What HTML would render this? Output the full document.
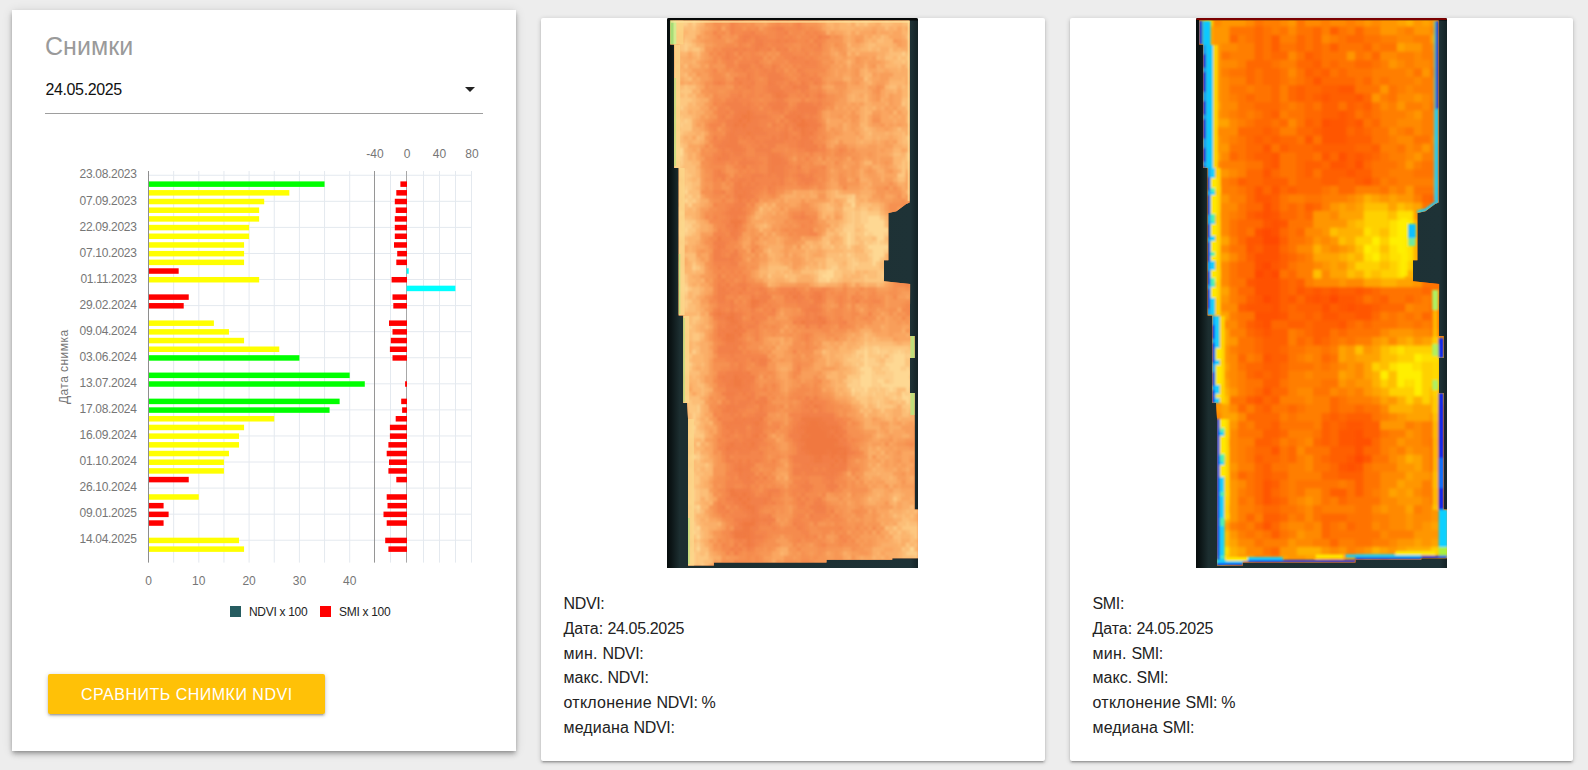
<!DOCTYPE html>
<html lang="ru"><head><meta charset="utf-8"><title>Снимки</title>
<style>
html,body{margin:0;padding:0;}
body{width:1588px;height:770px;overflow:hidden;background:#ededed;font-family:"Liberation Sans",sans-serif;color:#222;position:relative;}
.card{position:absolute;background:#fff;border-radius:2px;box-shadow:0 2px 2px 0 rgba(0,0,0,.14),0 3px 1px -2px rgba(0,0,0,.12),0 1px 5px 0 rgba(0,0,0,.2);}
#c1{left:12px;top:10px;width:504px;height:741px;border-radius:0;box-shadow:0 4px 5px 0 rgba(0,0,0,.14),0 1px 10px 0 rgba(0,0,0,.12),0 2px 4px -1px rgba(0,0,0,.3);}
#c2{left:541px;top:18px;width:504px;height:743px;}
#c3{left:1070px;top:18px;width:503px;height:743px;}
h4{position:absolute;left:33px;top:22px;margin:0;font-weight:normal;font-size:25px;line-height:28px;color:#9a9a9a;letter-spacing:0.05px;}
.sel{position:absolute;left:33px;top:63px;width:438px;height:40px;border-bottom:1px solid #9e9e9e;}
.sel span{position:absolute;left:0.5px;top:8px;font-size:16px;line-height:18px;color:#111;letter-spacing:-0.38px;}
.sel i{position:absolute;right:8px;top:14px;width:0;height:0;border-left:5px solid transparent;border-right:5px solid transparent;border-top:5px solid #222;}
.chart{position:absolute;left:-12px;top:120px;}
.btn{position:absolute;left:36px;top:664px;width:277px;height:40px;background:#ffc107;border-radius:2px;color:#fff;font-size:16px;line-height:42px;text-align:center;box-shadow:0 2px 2px 0 rgba(0,0,0,.14),0 3px 1px -2px rgba(0,0,0,.12),0 1px 5px 0 rgba(0,0,0,.2);letter-spacing:0.5px;text-indent:0.5px;}
.img{position:absolute;top:0;border-radius:2px 2px 0 0;overflow:hidden;height:550px;width:251.2px;}
.img svg{display:block;}
.info{position:absolute;left:22.5px;top:573px;font-size:16px;line-height:24px;color:#222;letter-spacing:-0.35px;}
.ln{position:absolute;left:0;white-space:nowrap;}
</style></head><body>
<div class="card" id="c1">
<h4>Снимки</h4>
<div class="sel"><span>24.05.2025</span><i></i></div>
<svg class="chart" width="516" height="500" viewBox="0 130 516 500" font-family="Liberation Sans, sans-serif">
<rect x="173.15" y="171" width="1" height="391.6" fill="#e4e9ef"/>
<rect x="198.30" y="171" width="1" height="391.6" fill="#e4e9ef"/>
<rect x="223.45" y="171" width="1" height="391.6" fill="#e4e9ef"/>
<rect x="248.60" y="171" width="1" height="391.6" fill="#e4e9ef"/>
<rect x="273.75" y="171" width="1" height="391.6" fill="#e4e9ef"/>
<rect x="298.90" y="171" width="1" height="391.6" fill="#e4e9ef"/>
<rect x="324.05" y="171" width="1" height="391.6" fill="#e4e9ef"/>
<rect x="349.20" y="171" width="1" height="391.6" fill="#e4e9ef"/>
<rect x="390" y="171" width="1" height="391.6" fill="#e4e9ef"/>
<rect x="423" y="171" width="1" height="391.6" fill="#e4e9ef"/>
<rect x="439" y="171" width="1" height="391.6" fill="#e4e9ef"/>
<rect x="455" y="171" width="1" height="391.6" fill="#e4e9ef"/>
<rect x="471" y="171" width="1" height="391.6" fill="#e4e9ef"/>
<rect x="148" y="174.75" width="324" height="1" fill="#e4e9ef"/>
<rect x="148" y="200.82" width="324" height="1" fill="#e4e9ef"/>
<rect x="148" y="226.89" width="324" height="1" fill="#e4e9ef"/>
<rect x="148" y="252.96" width="324" height="1" fill="#e4e9ef"/>
<rect x="148" y="279.03" width="324" height="1" fill="#e4e9ef"/>
<rect x="148" y="305.10" width="324" height="1" fill="#e4e9ef"/>
<rect x="148" y="331.17" width="324" height="1" fill="#e4e9ef"/>
<rect x="148" y="357.24" width="324" height="1" fill="#e4e9ef"/>
<rect x="148" y="383.31" width="324" height="1" fill="#e4e9ef"/>
<rect x="148" y="409.38" width="324" height="1" fill="#e4e9ef"/>
<rect x="148" y="435.45" width="324" height="1" fill="#e4e9ef"/>
<rect x="148" y="461.52" width="324" height="1" fill="#e4e9ef"/>
<rect x="148" y="487.59" width="324" height="1" fill="#e4e9ef"/>
<rect x="148" y="513.66" width="324" height="1" fill="#e4e9ef"/>
<rect x="148" y="539.73" width="324" height="1" fill="#e4e9ef"/>
<rect x="148" y="171" width="1" height="391.6" fill="#8e8e8e"/>
<rect x="374" y="171" width="1" height="391.6" fill="#969696"/>
<rect x="406" y="171" width="1" height="391.6" fill="#a8a8a8"/>
<rect x="149" y="181.39" width="175.55" height="5.5" fill="#00ff00"/>
<rect x="149" y="190.08" width="140.34" height="5.5" fill="#ffff00"/>
<rect x="149" y="198.77" width="115.19" height="5.5" fill="#ffff00"/>
<rect x="149" y="207.46" width="110.16" height="5.5" fill="#ffff00"/>
<rect x="149" y="216.15" width="110.16" height="5.5" fill="#ffff00"/>
<rect x="149" y="224.84" width="100.10" height="5.5" fill="#ffff00"/>
<rect x="149" y="233.53" width="100.10" height="5.5" fill="#ffff00"/>
<rect x="149" y="242.22" width="95.07" height="5.5" fill="#ffff00"/>
<rect x="149" y="250.91" width="95.07" height="5.5" fill="#ffff00"/>
<rect x="149" y="259.60" width="95.07" height="5.5" fill="#ffff00"/>
<rect x="149" y="268.29" width="29.68" height="5.5" fill="#ff0000"/>
<rect x="149" y="276.98" width="110.16" height="5.5" fill="#ffff00"/>
<rect x="149" y="294.36" width="39.74" height="5.5" fill="#ff0000"/>
<rect x="149" y="303.05" width="34.71" height="5.5" fill="#ff0000"/>
<rect x="149" y="320.43" width="64.89" height="5.5" fill="#ffff00"/>
<rect x="149" y="329.12" width="79.98" height="5.5" fill="#ffff00"/>
<rect x="149" y="337.81" width="95.07" height="5.5" fill="#ffff00"/>
<rect x="149" y="346.50" width="130.28" height="5.5" fill="#ffff00"/>
<rect x="149" y="355.19" width="150.40" height="5.5" fill="#00ff00"/>
<rect x="149" y="372.57" width="200.70" height="5.5" fill="#00ff00"/>
<rect x="149" y="381.26" width="215.79" height="5.5" fill="#00ff00"/>
<rect x="149" y="398.64" width="190.64" height="5.5" fill="#00ff00"/>
<rect x="149" y="407.33" width="180.58" height="5.5" fill="#00ff00"/>
<rect x="149" y="416.02" width="125.25" height="5.5" fill="#ffff00"/>
<rect x="149" y="424.71" width="95.07" height="5.5" fill="#ffff00"/>
<rect x="149" y="433.40" width="90.04" height="5.5" fill="#ffff00"/>
<rect x="149" y="442.09" width="90.04" height="5.5" fill="#ffff00"/>
<rect x="149" y="450.78" width="79.98" height="5.5" fill="#ffff00"/>
<rect x="149" y="459.47" width="74.95" height="5.5" fill="#ffff00"/>
<rect x="149" y="468.16" width="74.95" height="5.5" fill="#ffff00"/>
<rect x="149" y="476.85" width="39.74" height="5.5" fill="#ff0000"/>
<rect x="149" y="494.23" width="49.80" height="5.5" fill="#ffff00"/>
<rect x="149" y="502.92" width="14.59" height="5.5" fill="#ff0000"/>
<rect x="149" y="511.61" width="19.62" height="5.5" fill="#ff0000"/>
<rect x="149" y="520.30" width="14.59" height="5.5" fill="#ff0000"/>
<rect x="149" y="537.68" width="90.04" height="5.5" fill="#ffff00"/>
<rect x="149" y="546.37" width="95.07" height="5.5" fill="#ffff00"/>
<rect x="400.40" y="181.39" width="6.60" height="5.5" fill="#ff0000"/>
<rect x="396.30" y="190.08" width="10.70" height="5.5" fill="#ff0000"/>
<rect x="394.80" y="198.77" width="12.20" height="5.5" fill="#ff0000"/>
<rect x="395.70" y="207.46" width="11.30" height="5.5" fill="#ff0000"/>
<rect x="394.80" y="216.15" width="12.20" height="5.5" fill="#ff0000"/>
<rect x="394.80" y="224.84" width="12.20" height="5.5" fill="#ff0000"/>
<rect x="394.80" y="233.53" width="12.20" height="5.5" fill="#ff0000"/>
<rect x="394.00" y="242.22" width="13.00" height="5.5" fill="#ff0000"/>
<rect x="397.20" y="250.91" width="9.80" height="5.5" fill="#ff0000"/>
<rect x="396.30" y="259.60" width="10.70" height="5.5" fill="#ff0000"/>
<rect x="406.60" y="268.29" width="2.10" height="5.5" fill="#00ffff"/>
<rect x="391.60" y="276.98" width="15.40" height="5.5" fill="#ff0000"/>
<rect x="406.60" y="285.67" width="48.80" height="5.5" fill="#00ffff"/>
<rect x="392.50" y="294.36" width="14.50" height="5.5" fill="#ff0000"/>
<rect x="393.30" y="303.05" width="13.70" height="5.5" fill="#ff0000"/>
<rect x="389.00" y="320.43" width="18.00" height="5.5" fill="#ff0000"/>
<rect x="392.50" y="329.12" width="14.50" height="5.5" fill="#ff0000"/>
<rect x="390.80" y="337.81" width="16.20" height="5.5" fill="#ff0000"/>
<rect x="389.90" y="346.50" width="17.10" height="5.5" fill="#ff0000"/>
<rect x="392.50" y="355.19" width="14.50" height="5.5" fill="#ff0000"/>
<rect x="405.10" y="381.26" width="1.90" height="5.5" fill="#ff0000"/>
<rect x="401.20" y="398.64" width="5.80" height="5.5" fill="#ff0000"/>
<rect x="402.10" y="407.33" width="4.90" height="5.5" fill="#ff0000"/>
<rect x="395.70" y="416.02" width="11.30" height="5.5" fill="#ff0000"/>
<rect x="389.90" y="424.71" width="17.10" height="5.5" fill="#ff0000"/>
<rect x="389.90" y="433.40" width="17.10" height="5.5" fill="#ff0000"/>
<rect x="388.40" y="442.09" width="18.60" height="5.5" fill="#ff0000"/>
<rect x="386.70" y="450.78" width="20.30" height="5.5" fill="#ff0000"/>
<rect x="389.00" y="459.47" width="18.00" height="5.5" fill="#ff0000"/>
<rect x="388.40" y="468.16" width="18.60" height="5.5" fill="#ff0000"/>
<rect x="396.30" y="476.85" width="10.70" height="5.5" fill="#ff0000"/>
<rect x="386.70" y="494.23" width="20.30" height="5.5" fill="#ff0000"/>
<rect x="387.50" y="502.92" width="19.50" height="5.5" fill="#ff0000"/>
<rect x="383.50" y="511.61" width="23.50" height="5.5" fill="#ff0000"/>
<rect x="386.70" y="520.30" width="20.30" height="5.5" fill="#ff0000"/>
<rect x="385.20" y="537.68" width="21.80" height="5.5" fill="#ff0000"/>
<rect x="388.40" y="546.37" width="18.60" height="5.5" fill="#ff0000"/>
<text x="136.6" y="178.45" text-anchor="end" font-size="12" fill="#767676" letter-spacing="-0.3">23.08.2023</text>
<text x="136.6" y="204.52" text-anchor="end" font-size="12" fill="#767676" letter-spacing="-0.3">07.09.2023</text>
<text x="136.6" y="230.59" text-anchor="end" font-size="12" fill="#767676" letter-spacing="-0.3">22.09.2023</text>
<text x="136.6" y="256.66" text-anchor="end" font-size="12" fill="#767676" letter-spacing="-0.3">07.10.2023</text>
<text x="136.6" y="282.73" text-anchor="end" font-size="12" fill="#767676" letter-spacing="-0.3">01.11.2023</text>
<text x="136.6" y="308.80" text-anchor="end" font-size="12" fill="#767676" letter-spacing="-0.3">29.02.2024</text>
<text x="136.6" y="334.87" text-anchor="end" font-size="12" fill="#767676" letter-spacing="-0.3">09.04.2024</text>
<text x="136.6" y="360.94" text-anchor="end" font-size="12" fill="#767676" letter-spacing="-0.3">03.06.2024</text>
<text x="136.6" y="387.01" text-anchor="end" font-size="12" fill="#767676" letter-spacing="-0.3">13.07.2024</text>
<text x="136.6" y="413.08" text-anchor="end" font-size="12" fill="#767676" letter-spacing="-0.3">17.08.2024</text>
<text x="136.6" y="439.15" text-anchor="end" font-size="12" fill="#767676" letter-spacing="-0.3">16.09.2024</text>
<text x="136.6" y="465.22" text-anchor="end" font-size="12" fill="#767676" letter-spacing="-0.3">01.10.2024</text>
<text x="136.6" y="491.29" text-anchor="end" font-size="12" fill="#767676" letter-spacing="-0.3">26.10.2024</text>
<text x="136.6" y="517.36" text-anchor="end" font-size="12" fill="#767676" letter-spacing="-0.3">09.01.2025</text>
<text x="136.6" y="543.43" text-anchor="end" font-size="12" fill="#767676" letter-spacing="-0.3">14.04.2025</text>
<text x="148.5" y="585.3" text-anchor="middle" font-size="12" fill="#767676" class="cl">0</text>
<text x="198.8" y="585.3" text-anchor="middle" font-size="12" fill="#767676" class="cl">10</text>
<text x="249.1" y="585.3" text-anchor="middle" font-size="12" fill="#767676" class="cl">20</text>
<text x="299.4" y="585.3" text-anchor="middle" font-size="12" fill="#767676" class="cl">30</text>
<text x="349.7" y="585.3" text-anchor="middle" font-size="12" fill="#767676" class="cl">40</text>
<text x="374.9" y="158.3" text-anchor="middle" font-size="12" fill="#767676" class="cl">-40</text>
<text x="407.0" y="158.3" text-anchor="middle" font-size="12" fill="#767676" class="cl">0</text>
<text x="439.4" y="158.3" text-anchor="middle" font-size="12" fill="#767676" class="cl">40</text>
<text x="471.9" y="158.3" text-anchor="middle" font-size="12" fill="#767676" class="cl">80</text>
<text transform="translate(68,366.8) rotate(-90)" text-anchor="middle" font-size="12" fill="#767676" letter-spacing="0.45">Дата снимка</text>
<rect x="230" y="606" width="11" height="11" fill="#265c60"/>
<text x="249" y="616" font-size="12" fill="#232323" letter-spacing="-0.3">NDVI x 100</text>
<rect x="320" y="606" width="11" height="11" fill="#ff0000"/>
<text x="339" y="616" font-size="12" fill="#232323" letter-spacing="-0.3">SMI x 100</text>
</svg>
<div class="btn">СРАВНИТЬ СНИМКИ NDVI</div>
</div>
<div class="card" id="c2">
<div class="img" style="left:126.3px"><svg width="251.2" height="550" viewBox="0 0 252 550" preserveAspectRatio="none">
<defs><clipPath id="cpndvi"><polygon points="3.2,2.4 243.4,2.4 243.4,184.6 239.6,186.2 230.2,193.2 222.1,195 222.1,242.3 217.7,242.3 217.7,263.3 234.1,264.9 243.9,266.1 243.7,318 248.4,318 248.4,340 243.7,340 243.7,375 248.4,375 248.4,491.6 252,491.6 252,540.3 226,540.3 226,541.7 160,541.7 160,544.4 47,544.4 47,547.5 21.1,547.5 21.1,401 20.2,385 16.3,385 16.3,297.5 11.7,297.5 11.7,150 7.2,150 7.2,26.5 3.2,26.5"/></clipPath><filter id="blndvi" x="-5%" y="-5%" width="110%" height="110%"><feGaussianBlur stdDeviation="1.3"/></filter><filter id="bxndvi" x="-5%" y="-5%" width="110%" height="110%"><feGaussianBlur stdDeviation="0.9"/></filter><filter id="bendvi" x="-50%" y="-5%" width="200%" height="110%"><feGaussianBlur stdDeviation="0.7"/></filter><linearGradient id="bgndvi" x1="0" x2="1" y1="0" y2="0"><stop offset="0" stop-color="#060c0c"/><stop offset="0.016" stop-color="#0b1415"/><stop offset="0.05" stop-color="#1c2e30"/><stop offset="0.97" stop-color="#1e3236"/><stop offset="1" stop-color="#142225"/></linearGradient></defs>
<rect width="252" height="550" fill="url(#bgndvi)"/>
<rect width="252" height="2.5" fill="#050808"/>
<g clip-path="url(#cpndvi)">
<rect width="252" height="550" fill="#f68c4c"/>
<g filter="url(#blndvi)">
<path d="M75.6 98.7h4.2M71.4 102.9h4.2M134.4 102.9h4.2M130.2 107.1h8.4M84 283.5h4.2M63 300.3h4.2M58.8 317.1h4.2M142.8 405.3h8.4M138.6 409.5h16.8M163.8 409.5h4.2M138.6 413.7h21M168 413.7h4.2M142.8 417.9h16.8M163.8 417.9h4.2M138.6 422.1h33.6M138.6 426.3h29.4M138.6 430.5h37.8M142.8 434.7h16.8M163.8 434.7h8.4M176.4 434.7h4.2M151.2 438.9h4.2M163.8 438.9h4.2M75.6 476.7h4.2M71.4 480.9h4.2M75.6 485.1h4.2M79.8 489.3h4.2M75.6 506.1h12.6M75.6 518.7h4.2" stroke="#f07841" stroke-width="4.5" fill="none"/>
<path d="M109.2 77.7h4.2M79.8 94.5h4.2M79.8 98.7h4.2M130.2 98.7h4.2M79.8 102.9h4.2M126 102.9h4.2M67.2 107.1h4.2M75.6 107.1h4.2M138.6 107.1h4.2M134.4 111.3h4.2M79.8 115.5h4.2M134.4 115.5h4.2M142.8 115.5h4.2M71.4 178.5h4.2M63 203.7h12.6M67.2 207.9h4.2M50.4 220.5h4.2M126 279.3h4.2M151.2 279.3h4.2M88.2 283.5h4.2M84 287.7h4.2M50.4 296.1h4.2M63 296.1h4.2M58.8 300.3h4.2M151.2 300.3h4.2M63 304.5h8.4M134.4 304.5h4.2M155.4 304.5h4.2M71.4 308.7h4.2M67.2 312.9h4.2M63 317.1h4.2M71.4 317.1h4.2M58.8 321.3h8.4M67.2 359.1h4.2M67.2 363.3h8.4M67.2 367.5h8.4M147 388.5h4.2M92.4 401.1h4.2M134.4 401.1h21M88.2 405.3h4.2M138.6 405.3h4.2M151.2 405.3h8.4M134.4 409.5h4.2M155.4 409.5h8.4M168 409.5h4.2M159.6 413.7h4.2M88.2 417.9h4.2M134.4 417.9h8.4M159.6 417.9h4.2M172.2 417.9h4.2M134.4 422.1h4.2M63 426.3h4.2M84 426.3h4.2M168 426.3h4.2M58.8 430.5h4.2M134.4 430.5h4.2M176.4 430.5h4.2M138.6 434.7h4.2M159.6 434.7h4.2M172.2 434.7h4.2M147 438.9h4.2M172.2 438.9h8.4M147 443.1h8.4M168 443.1h4.2M176.4 443.1h4.2M163.8 447.3h4.2M71.4 451.5h4.2M63 472.5h4.2M63 476.7h8.4M79.8 480.9h4.2M84 489.3h4.2M84 493.5h4.2M84 501.9h4.2M75.6 510.3h8.4M67.2 514.5h16.8M67.2 518.7h8.4M79.8 518.7h4.2M79.8 522.9h4.2M79.8 527.1h4.2" stroke="#f07a43" stroke-width="4.5" fill="none"/>
<path d="M151.2 18.9h4.2M92.4 27.3h4.2M88.2 31.5h4.2M71.4 65.1h4.2M100.8 65.1h4.2M134.4 65.1h4.2M126 69.3h4.2M105 73.5h12.6M113.4 77.7h8.4M151.2 77.7h4.2M109.2 86.1h4.2M134.4 86.1h4.2M105 90.3h12.6M130.2 90.3h21M71.4 94.5h8.4M126 94.5h4.2M134.4 94.5h4.2M142.8 94.5h8.4M67.2 98.7h8.4M84 98.7h4.2M117.6 98.7h12.6M67.2 102.9h4.2M75.6 102.9h4.2M130.2 102.9h4.2M138.6 102.9h8.4M71.4 107.1h4.2M142.8 107.1h8.4M67.2 111.3h4.2M75.6 111.3h4.2M88.2 111.3h4.2M126 111.3h4.2M138.6 111.3h4.2M147 111.3h4.2M63 115.5h4.2M117.6 115.5h4.2M138.6 115.5h4.2M63 119.7h8.4M84 119.7h4.2M105 119.7h4.2M117.6 119.7h4.2M134.4 119.7h8.4M63 123.9h8.4M134.4 123.9h4.2M142.8 123.9h4.2M58.8 128.1h12.6M134.4 128.1h4.2M147 128.1h4.2M67.2 132.3h8.4M142.8 132.3h4.2M54.6 136.5h4.2M105 136.5h4.2M50.4 140.7h4.2M105 140.7h8.4M105 144.9h8.4M75.6 149.1h4.2M105 149.1h4.2M105 153.3h4.2M84 161.7h4.2M71.4 165.9h4.2M71.4 170.1h4.2M67.2 174.3h4.2M75.6 174.3h4.2M75.6 178.5h4.2M71.4 182.7h4.2M63 191.1h4.2M71.4 191.1h4.2M63 195.3h12.6M67.2 199.5h4.2M67.2 212.1h4.2M63 216.3h4.2M50.4 228.9h4.2M63 241.5h4.2M58.8 266.7h4.2M54.6 270.9h4.2M75.6 270.9h4.2M71.4 275.1h4.2M121.8 275.1h4.2M130.2 275.1h4.2M147 275.1h8.4M54.6 279.3h4.2M84 279.3h4.2M147 279.3h4.2M63 283.5h4.2M96.6 283.5h4.2M147 283.5h8.4M88.2 287.7h4.2M142.8 291.9h8.4M54.6 296.1h4.2M67.2 296.1h4.2M67.2 300.3h4.2M84 300.3h4.2M151.2 304.5h4.2M58.8 308.7h8.4M54.6 312.9h4.2M63 312.9h4.2M71.4 312.9h8.4M50.4 317.1h4.2M67.2 317.1h4.2M54.6 321.3h4.2M67.2 321.3h4.2M58.8 325.5h8.4M71.4 325.5h4.2M67.2 329.7h4.2M63 333.9h4.2M92.4 342.3h4.2M67.2 354.9h8.4M79.8 354.9h4.2M54.6 359.1h4.2M71.4 359.1h8.4M84 359.1h4.2M63 363.3h4.2M79.8 363.3h4.2M58.8 367.5h8.4M75.6 367.5h4.2M71.4 371.7h4.2M58.8 375.9h8.4M75.6 375.9h4.2M79.8 380.1h4.2M88.2 384.3h4.2M96.6 384.3h4.2M142.8 384.3h4.2M58.8 388.5h8.4M92.4 388.5h4.2M138.6 388.5h4.2M58.8 392.7h4.2M67.2 392.7h4.2M138.6 396.9h4.2M67.2 401.1h4.2M75.6 401.1h4.2M84 401.1h4.2M155.4 401.1h12.6M63 405.3h12.6M84 405.3h4.2M134.4 405.3h4.2M159.6 405.3h12.6M58.8 409.5h4.2M88.2 409.5h4.2M130.2 409.5h4.2M172.2 409.5h4.2M63 413.7h4.2M88.2 413.7h8.4M130.2 413.7h8.4M163.8 413.7h4.2M172.2 413.7h4.2M84 417.9h4.2M168 417.9h4.2M79.8 422.1h8.4M130.2 422.1h4.2M176.4 422.1h4.2M75.6 426.3h4.2M134.4 426.3h4.2M172.2 426.3h4.2M63 430.5h12.6M79.8 430.5h8.4M134.4 434.7h4.2M142.8 438.9h4.2M155.4 438.9h8.4M168 438.9h4.2M71.4 443.1h4.2M79.8 443.1h4.2M142.8 443.1h4.2M155.4 443.1h12.6M71.4 447.3h4.2M79.8 447.3h4.2M138.6 447.3h4.2M172.2 447.3h8.4M67.2 451.5h4.2M75.6 451.5h8.4M142.8 451.5h4.2M159.6 451.5h16.8M71.4 455.7h4.2M155.4 455.7h4.2M163.8 455.7h4.2M79.8 459.9h4.2M67.2 472.5h16.8M138.6 472.5h4.2M71.4 476.7h4.2M79.8 476.7h4.2M100.8 476.7h4.2M67.2 480.9h4.2M75.6 480.9h4.2M96.6 480.9h4.2M67.2 485.1h8.4M79.8 485.1h4.2M96.6 485.1h4.2M75.6 489.3h4.2M151.2 489.3h4.2M79.8 493.5h4.2M84 497.7h8.4M75.6 501.9h8.4M88.2 501.9h4.2M96.6 501.9h4.2M71.4 506.1h4.2M84 514.5h4.2M84 518.7h4.2M84 527.1h4.2M67.2 535.5h4.2M63 548.1h4.2" stroke="#f27e46" stroke-width="4.5" fill="none"/>
<path d="M109.2 10.5h8.4M84 14.7h4.2M117.6 14.7h4.2M75.6 18.9h8.4M88.2 18.9h4.2M75.6 23.1h4.2M88.2 23.1h8.4M109.2 23.1h4.2M117.6 23.1h4.2M147 23.1h4.2M88.2 27.3h4.2M151.2 27.3h4.2M67.2 31.5h4.2M75.6 31.5h4.2M100.8 31.5h4.2M109.2 31.5h4.2M117.6 31.5h4.2M58.8 35.7h4.2M71.4 35.7h4.2M58.8 39.9h4.2M126 39.9h4.2M88.2 44.1h4.2M138.6 44.1h4.2M71.4 48.3h12.6M92.4 48.3h4.2M105 48.3h4.2M75.6 52.5h4.2M96.6 52.5h4.2M105 52.5h4.2M130.2 52.5h4.2M79.8 56.7h4.2M100.8 56.7h12.6M134.4 56.7h4.2M67.2 60.9h4.2M79.8 60.9h4.2M100.8 60.9h16.8M142.8 60.9h4.2M50.4 65.1h4.2M84 65.1h4.2M105 65.1h4.2M121.8 65.1h4.2M147 65.1h4.2M79.8 69.3h4.2M100.8 69.3h12.6M130.2 69.3h12.6M100.8 73.5h4.2M134.4 73.5h4.2M71.4 77.7h4.2M105 77.7h4.2M138.6 77.7h4.2M67.2 81.9h4.2M109.2 81.9h8.4M58.8 86.1h16.8M79.8 86.1h4.2M100.8 86.1h8.4M113.4 86.1h8.4M130.2 86.1h4.2M138.6 86.1h8.4M151.2 86.1h4.2M63 90.3h21M58.8 94.5h4.2M67.2 94.5h4.2M84 94.5h4.2M113.4 94.5h4.2M121.8 94.5h4.2M130.2 94.5h4.2M138.6 94.5h4.2M54.6 98.7h4.2M88.2 98.7h12.6M134.4 98.7h4.2M142.8 98.7h4.2M58.8 102.9h8.4M84 102.9h8.4M113.4 102.9h4.2M121.8 102.9h4.2M147 102.9h4.2M58.8 107.1h8.4M79.8 107.1h12.6M105 107.1h4.2M117.6 107.1h4.2M126 107.1h4.2M151.2 107.1h4.2M63 111.3h4.2M71.4 111.3h4.2M79.8 111.3h8.4M92.4 111.3h4.2M117.6 111.3h4.2M130.2 111.3h4.2M142.8 111.3h4.2M58.8 115.5h4.2M67.2 115.5h12.6M84 115.5h16.8M113.4 115.5h4.2M46.2 119.7h4.2M58.8 119.7h4.2M75.6 119.7h4.2M113.4 119.7h4.2M126 119.7h4.2M54.6 123.9h8.4M88.2 123.9h4.2M96.6 123.9h21M130.2 123.9h4.2M138.6 123.9h4.2M50.4 128.1h8.4M71.4 128.1h4.2M92.4 128.1h4.2M100.8 128.1h8.4M130.2 128.1h4.2M138.6 128.1h8.4M54.6 132.3h4.2M63 132.3h4.2M75.6 132.3h4.2M88.2 132.3h16.8M138.6 132.3h4.2M147 132.3h4.2M58.8 136.5h4.2M67.2 136.5h8.4M100.8 136.5h4.2M109.2 136.5h4.2M54.6 140.7h8.4M75.6 140.7h4.2M100.8 140.7h4.2M113.4 140.7h4.2M71.4 144.9h16.8M100.8 144.9h4.2M113.4 144.9h8.4M100.8 149.1h4.2M109.2 149.1h8.4M130.2 149.1h4.2M50.4 153.3h4.2M100.8 153.3h4.2M109.2 153.3h8.4M50.4 157.5h8.4M84 157.5h12.6M100.8 157.5h4.2M109.2 157.5h8.4M130.2 157.5h8.4M142.8 157.5h4.2M54.6 161.7h4.2M71.4 161.7h8.4M113.4 161.7h4.2M134.4 161.7h12.6M67.2 165.9h4.2M79.8 165.9h4.2M88.2 165.9h4.2M105 165.9h4.2M113.4 165.9h4.2M138.6 165.9h4.2M67.2 170.1h4.2M75.6 170.1h12.6M100.8 170.1h4.2M54.6 174.3h4.2M71.4 174.3h4.2M79.8 174.3h4.2M67.2 178.5h4.2M79.8 178.5h8.4M79.8 182.7h4.2M67.2 186.9h12.6M67.2 191.1h4.2M58.8 195.3h4.2M75.6 195.3h4.2M63 199.5h4.2M134.4 199.5h4.2M58.8 207.9h8.4M71.4 207.9h4.2M63 212.1h4.2M67.2 216.3h4.2M67.2 220.5h4.2M46.2 224.7h12.6M54.6 228.9h4.2M46.2 233.1h8.4M67.2 233.1h4.2M46.2 237.3h8.4M63 237.3h8.4M46.2 241.5h16.8M63 245.7h8.4M50.4 249.9h4.2M243.6 249.9h4.2M50.4 258.3h4.2M54.6 262.5h4.2M50.4 266.7h4.2M71.4 266.7h8.4M50.4 270.9h4.2M63 270.9h4.2M92.4 270.9h4.2M126 270.9h4.2M50.4 275.1h12.6M96.6 275.1h4.2M126 275.1h4.2M50.4 279.3h4.2M92.4 279.3h12.6M117.6 279.3h4.2M130.2 279.3h8.4M142.8 279.3h4.2M50.4 283.5h8.4M92.4 283.5h4.2M130.2 283.5h4.2M189 283.5h4.2M63 287.7h4.2M142.8 287.7h8.4M50.4 291.9h4.2M63 291.9h4.2M84 291.9h4.2M105 291.9h4.2M138.6 291.9h4.2M151.2 291.9h4.2M46.2 296.1h4.2M58.8 296.1h4.2M71.4 296.1h4.2M138.6 296.1h4.2M147 296.1h4.2M50.4 300.3h8.4M71.4 300.3h4.2M138.6 300.3h4.2M147 300.3h4.2M155.4 300.3h4.2M58.8 304.5h4.2M71.4 304.5h4.2M88.2 304.5h4.2M126 304.5h4.2M138.6 304.5h12.6M176.4 304.5h4.2M50.4 308.7h4.2M67.2 308.7h4.2M79.8 308.7h8.4M138.6 308.7h4.2M151.2 308.7h4.2M50.4 312.9h4.2M58.8 312.9h4.2M54.6 317.1h4.2M67.2 325.5h4.2M50.4 329.7h16.8M50.4 333.9h12.6M67.2 333.9h8.4M63 338.1h4.2M67.2 342.3h4.2M84 342.3h4.2M96.6 342.3h4.2M71.4 346.5h4.2M92.4 346.5h8.4M71.4 350.7h4.2M58.8 354.9h8.4M75.6 354.9h4.2M50.4 359.1h4.2M58.8 359.1h8.4M79.8 359.1h4.2M54.6 363.3h8.4M75.6 363.3h4.2M84 363.3h4.2M79.8 367.5h4.2M58.8 371.7h12.6M75.6 371.7h8.4M54.6 375.9h4.2M67.2 375.9h4.2M84 375.9h4.2M58.8 380.1h8.4M84 380.1h4.2M92.4 380.1h8.4M138.6 380.1h4.2M147 380.1h4.2M63 384.3h4.2M71.4 384.3h12.6M92.4 384.3h4.2M67.2 388.5h12.6M151.2 388.5h4.2M54.6 392.7h4.2M63 392.7h4.2M92.4 392.7h4.2M142.8 392.7h4.2M151.2 392.7h4.2M63 396.9h4.2M71.4 396.9h4.2M88.2 396.9h12.6M134.4 396.9h4.2M142.8 396.9h25.2M50.4 401.1h4.2M71.4 401.1h4.2M79.8 401.1h4.2M88.2 401.1h4.2M54.6 405.3h8.4M75.6 405.3h8.4M92.4 405.3h4.2M130.2 405.3h4.2M63 409.5h16.8M84 409.5h4.2M92.4 409.5h4.2M126 409.5h4.2M71.4 413.7h8.4M84 413.7h4.2M126 413.7h4.2M176.4 413.7h4.2M58.8 417.9h4.2M75.6 417.9h4.2M96.6 417.9h4.2M121.8 417.9h12.6M67.2 422.1h4.2M75.6 422.1h4.2M88.2 422.1h8.4M126 422.1h4.2M172.2 422.1h4.2M58.8 426.3h4.2M67.2 426.3h8.4M79.8 426.3h4.2M88.2 426.3h4.2M130.2 426.3h4.2M176.4 426.3h4.2M75.6 430.5h4.2M88.2 430.5h4.2M130.2 430.5h4.2M180.6 430.5h4.2M58.8 434.7h8.4M71.4 434.7h12.6M92.4 434.7h4.2M130.2 434.7h4.2M180.6 434.7h8.4M58.8 438.9h4.2M126 438.9h16.8M58.8 443.1h8.4M88.2 443.1h4.2M126 443.1h16.8M172.2 443.1h4.2M67.2 447.3h4.2M75.6 447.3h4.2M84 447.3h4.2M134.4 447.3h4.2M142.8 447.3h21M168 447.3h4.2M0 451.5h8.4M126 451.5h16.8M151.2 451.5h4.2M176.4 451.5h4.2M0 455.7h4.2M75.6 455.7h12.6M126 455.7h8.4M138.6 455.7h16.8M159.6 455.7h4.2M168 455.7h4.2M71.4 459.9h8.4M88.2 459.9h4.2M96.6 459.9h4.2M159.6 459.9h8.4M75.6 464.1h12.6M138.6 464.1h4.2M163.8 464.1h4.2M79.8 468.3h4.2M134.4 468.3h12.6M159.6 468.3h12.6M58.8 472.5h4.2M100.8 472.5h12.6M163.8 472.5h4.2M84 476.7h4.2M134.4 476.7h4.2M58.8 480.9h8.4M84 480.9h12.6M100.8 480.9h4.2M130.2 480.9h4.2M138.6 480.9h4.2M151.2 480.9h4.2M84 485.1h12.6M105 485.1h4.2M134.4 485.1h4.2M147 485.1h8.4M54.6 489.3h4.2M71.4 489.3h4.2M88.2 489.3h4.2M142.8 489.3h8.4M155.4 489.3h4.2M58.8 493.5h4.2M75.6 493.5h4.2M88.2 493.5h4.2M147 493.5h12.6M163.8 493.5h4.2M79.8 497.7h4.2M100.8 497.7h4.2M142.8 497.7h4.2M67.2 501.9h8.4M92.4 501.9h4.2M100.8 501.9h8.4M88.2 506.1h4.2M100.8 506.1h4.2M126 506.1h4.2M67.2 510.3h8.4M84 510.3h8.4M130.2 510.3h4.2M63 514.5h4.2M88.2 518.7h8.4M71.4 522.9h4.2M84 522.9h4.2M67.2 527.1h4.2M75.6 527.1h4.2M63 531.3h4.2M71.4 531.3h4.2M79.8 531.3h4.2M67.2 548.1h8.4M138.6 548.1h4.2" stroke="#f28048" stroke-width="4.5" fill="none"/>
<path d="M67.2 2.1h4.2M63 6.3h4.2M130.2 6.3h4.2M63 10.5h4.2M105 10.5h4.2M130.2 10.5h4.2M46.2 14.7h4.2M63 14.7h4.2M75.6 14.7h8.4M109.2 14.7h8.4M138.6 14.7h4.2M147 14.7h4.2M50.4 18.9h4.2M71.4 18.9h4.2M84 18.9h4.2M92.4 18.9h8.4M109.2 18.9h8.4M121.8 18.9h4.2M142.8 18.9h4.2M155.4 18.9h8.4M71.4 23.1h4.2M79.8 23.1h4.2M96.6 23.1h12.6M113.4 23.1h4.2M121.8 23.1h8.4M138.6 23.1h4.2M151.2 23.1h4.2M71.4 27.3h4.2M84 27.3h4.2M96.6 27.3h4.2M105 27.3h12.6M142.8 27.3h4.2M54.6 31.5h12.6M71.4 31.5h4.2M79.8 31.5h8.4M92.4 31.5h8.4M113.4 31.5h4.2M134.4 31.5h4.2M147 31.5h8.4M50.4 35.7h4.2M63 35.7h4.2M84 35.7h4.2M113.4 35.7h12.6M138.6 35.7h4.2M54.6 39.9h4.2M63 39.9h8.4M75.6 39.9h4.2M84 39.9h12.6M117.6 39.9h8.4M130.2 39.9h8.4M142.8 39.9h4.2M58.8 44.1h8.4M71.4 44.1h16.8M121.8 44.1h16.8M142.8 44.1h8.4M58.8 48.3h8.4M88.2 48.3h4.2M109.2 48.3h4.2M126 48.3h4.2M134.4 48.3h16.8M46.2 52.5h4.2M67.2 52.5h8.4M79.8 52.5h8.4M92.4 52.5h4.2M100.8 52.5h4.2M113.4 52.5h4.2M134.4 52.5h4.2M84 56.7h4.2M92.4 56.7h8.4M113.4 56.7h4.2M138.6 56.7h4.2M147 56.7h4.2M71.4 60.9h8.4M84 60.9h4.2M117.6 60.9h4.2M130.2 60.9h12.6M147 60.9h8.4M46.2 65.1h4.2M54.6 65.1h4.2M67.2 65.1h4.2M75.6 65.1h8.4M109.2 65.1h8.4M126 65.1h4.2M138.6 65.1h4.2M151.2 65.1h4.2M67.2 69.3h4.2M75.6 69.3h4.2M84 69.3h4.2M96.6 69.3h4.2M117.6 69.3h8.4M71.4 73.5h4.2M84 73.5h4.2M96.6 73.5h4.2M117.6 73.5h12.6M138.6 73.5h4.2M151.2 73.5h4.2M63 77.7h8.4M79.8 77.7h8.4M92.4 77.7h4.2M130.2 77.7h4.2M147 77.7h4.2M155.4 77.7h4.2M58.8 81.9h8.4M71.4 81.9h12.6M105 81.9h4.2M134.4 81.9h4.2M151.2 81.9h4.2M46.2 86.1h4.2M54.6 86.1h4.2M75.6 86.1h4.2M84 86.1h4.2M92.4 86.1h4.2M147 86.1h4.2M50.4 90.3h8.4M84 90.3h8.4M96.6 90.3h8.4M117.6 90.3h4.2M126 90.3h4.2M151.2 90.3h4.2M50.4 94.5h8.4M88.2 94.5h12.6M105 94.5h8.4M50.4 98.7h4.2M63 98.7h4.2M100.8 98.7h4.2M138.6 98.7h4.2M147 98.7h4.2M50.4 102.9h8.4M92.4 102.9h16.8M42 107.1h12.6M92.4 107.1h8.4M109.2 107.1h4.2M121.8 107.1h4.2M46.2 111.3h4.2M58.8 111.3h4.2M96.6 111.3h12.6M113.4 111.3h4.2M100.8 115.5h12.6M121.8 115.5h4.2M130.2 115.5h4.2M147 115.5h4.2M54.6 119.7h4.2M71.4 119.7h4.2M79.8 119.7h4.2M88.2 119.7h16.8M109.2 119.7h4.2M121.8 119.7h4.2M130.2 119.7h4.2M142.8 119.7h8.4M46.2 123.9h8.4M79.8 123.9h8.4M92.4 123.9h4.2M117.6 123.9h12.6M46.2 128.1h4.2M75.6 128.1h4.2M84 128.1h8.4M96.6 128.1h4.2M121.8 128.1h8.4M155.4 128.1h4.2M50.4 132.3h4.2M58.8 132.3h4.2M130.2 132.3h8.4M151.2 132.3h8.4M172.2 132.3h4.2M46.2 136.5h8.4M63 136.5h4.2M75.6 136.5h4.2M88.2 136.5h12.6M113.4 136.5h4.2M142.8 136.5h4.2M46.2 140.7h4.2M63 140.7h12.6M79.8 140.7h12.6M117.6 140.7h4.2M138.6 140.7h4.2M46.2 144.9h12.6M63 144.9h4.2M88.2 144.9h8.4M67.2 149.1h8.4M84 149.1h8.4M117.6 149.1h8.4M155.4 149.1h4.2M46.2 153.3h4.2M71.4 153.3h4.2M79.8 153.3h4.2M88.2 153.3h4.2M117.6 153.3h4.2M130.2 153.3h4.2M142.8 153.3h8.4M46.2 157.5h4.2M67.2 157.5h4.2M75.6 157.5h8.4M96.6 157.5h4.2M105 157.5h4.2M117.6 157.5h4.2M126 157.5h4.2M138.6 157.5h4.2M46.2 161.7h4.2M63 161.7h8.4M79.8 161.7h4.2M88.2 161.7h25.2M130.2 161.7h4.2M147 161.7h4.2M75.6 165.9h4.2M84 165.9h4.2M92.4 165.9h12.6M109.2 165.9h4.2M130.2 165.9h8.4M142.8 165.9h4.2M88.2 170.1h8.4M105 170.1h4.2M46.2 174.3h8.4M84 174.3h8.4M100.8 174.3h8.4M58.8 178.5h4.2M54.6 182.7h4.2M67.2 182.7h4.2M75.6 182.7h4.2M88.2 182.7h4.2M46.2 186.9h4.2M58.8 186.9h8.4M84 186.9h4.2M58.8 191.1h4.2M75.6 191.1h4.2M54.6 195.3h4.2M134.4 195.3h4.2M46.2 199.5h4.2M58.8 199.5h4.2M71.4 199.5h8.4M126 199.5h8.4M138.6 199.5h4.2M54.6 203.7h8.4M75.6 203.7h4.2M142.8 203.7h4.2M134.4 207.9h4.2M50.4 212.1h4.2M58.8 212.1h4.2M71.4 212.1h4.2M142.8 212.1h4.2M243.6 212.1h4.2M46.2 216.3h12.6M71.4 216.3h4.2M142.8 216.3h8.4M54.6 220.5h12.6M239.4 220.5h12.6M58.8 224.7h4.2M235.2 224.7h4.2M243.6 224.7h4.2M46.2 228.9h4.2M247.8 228.9h4.2M54.6 233.1h8.4M84 233.1h4.2M54.6 237.3h4.2M67.2 241.5h8.4M46.2 245.7h16.8M58.8 249.9h12.6M239.4 249.9h4.2M247.8 249.9h4.2M54.6 254.1h4.2M63 254.1h4.2M71.4 254.1h4.2M235.2 254.1h16.8M58.8 258.3h4.2M67.2 258.3h4.2M75.6 258.3h4.2M239.4 258.3h4.2M247.8 258.3h4.2M50.4 262.5h4.2M63 262.5h4.2M75.6 262.5h4.2M235.2 262.5h4.2M54.6 266.7h4.2M67.2 266.7h4.2M79.8 266.7h4.2M239.4 266.7h4.2M58.8 270.9h4.2M67.2 270.9h8.4M84 270.9h8.4M96.6 270.9h4.2M113.4 270.9h12.6M142.8 270.9h4.2M155.4 270.9h4.2M63 275.1h8.4M75.6 275.1h12.6M92.4 275.1h4.2M113.4 275.1h8.4M142.8 275.1h4.2M155.4 275.1h4.2M46.2 279.3h4.2M67.2 279.3h4.2M88.2 279.3h4.2M121.8 279.3h4.2M155.4 279.3h4.2M172.2 279.3h4.2M184.8 279.3h4.2M58.8 283.5h4.2M71.4 283.5h4.2M79.8 283.5h4.2M117.6 283.5h12.6M134.4 283.5h8.4M155.4 283.5h4.2M172.2 283.5h4.2M205.8 283.5h8.4M247.8 283.5h4.2M50.4 287.7h12.6M67.2 287.7h4.2M79.8 287.7h4.2M92.4 287.7h4.2M100.8 287.7h4.2M130.2 287.7h12.6M151.2 287.7h4.2M172.2 287.7h4.2M243.6 287.7h4.2M46.2 291.9h4.2M54.6 291.9h4.2M71.4 291.9h4.2M96.6 291.9h4.2M134.4 291.9h4.2M243.6 291.9h4.2M75.6 296.1h4.2M84 296.1h12.6M100.8 296.1h8.4M142.8 296.1h4.2M151.2 296.1h4.2M201.6 296.1h4.2M46.2 300.3h4.2M88.2 300.3h12.6M130.2 300.3h8.4M142.8 300.3h4.2M172.2 300.3h4.2M50.4 304.5h8.4M75.6 304.5h12.6M130.2 304.5h4.2M159.6 304.5h4.2M172.2 304.5h4.2M54.6 308.7h4.2M75.6 308.7h4.2M88.2 308.7h4.2M172.2 308.7h4.2M88.2 312.9h4.2M0 317.1h4.2M88.2 317.1h4.2M138.6 317.1h4.2M0 321.3h4.2M50.4 321.3h4.2M71.4 321.3h4.2M88.2 321.3h4.2M138.6 321.3h4.2M54.6 325.5h4.2M75.6 325.5h4.2M0 329.7h4.2M75.6 329.7h4.2M79.8 333.9h4.2M126 333.9h4.2M50.4 338.1h12.6M67.2 338.1h33.6M58.8 342.3h8.4M71.4 342.3h8.4M88.2 342.3h4.2M63 346.5h4.2M75.6 346.5h4.2M88.2 346.5h4.2M63 350.7h8.4M75.6 350.7h4.2M130.2 350.7h4.2M50.4 354.9h8.4M50.4 363.3h4.2M50.4 367.5h8.4M84 367.5h4.2M105 367.5h4.2M84 371.7h4.2M96.6 371.7h4.2M71.4 375.9h4.2M79.8 375.9h4.2M67.2 380.1h12.6M130.2 380.1h4.2M54.6 384.3h4.2M67.2 384.3h4.2M84 384.3h4.2M134.4 384.3h8.4M147 384.3h12.6M50.4 388.5h8.4M79.8 388.5h8.4M96.6 388.5h4.2M134.4 388.5h4.2M142.8 388.5h4.2M155.4 388.5h4.2M71.4 392.7h8.4M88.2 392.7h4.2M96.6 392.7h4.2M134.4 392.7h8.4M155.4 392.7h4.2M46.2 396.9h4.2M54.6 396.9h8.4M67.2 396.9h4.2M79.8 396.9h8.4M121.8 396.9h12.6M54.6 401.1h12.6M126 401.1h8.4M168 401.1h8.4M96.6 405.3h4.2M126 405.3h4.2M172.2 405.3h8.4M54.6 409.5h4.2M96.6 409.5h4.2M109.2 409.5h4.2M0 413.7h4.2M54.6 413.7h8.4M67.2 413.7h4.2M79.8 413.7h4.2M121.8 413.7h4.2M54.6 417.9h4.2M63 417.9h4.2M71.4 417.9h4.2M79.8 417.9h4.2M92.4 417.9h4.2M176.4 417.9h4.2M0 422.1h4.2M50.4 422.1h4.2M58.8 422.1h8.4M71.4 422.1h4.2M184.8 422.1h4.2M54.6 426.3h4.2M92.4 426.3h8.4M126 426.3h4.2M180.6 426.3h4.2M50.4 430.5h8.4M8.4 434.7h4.2M54.6 434.7h4.2M67.2 434.7h4.2M84 434.7h8.4M189 434.7h4.2M4.2 438.9h8.4M67.2 438.9h29.4M121.8 438.9h4.2M180.6 438.9h4.2M0 443.1h4.2M67.2 443.1h4.2M75.6 443.1h4.2M84 443.1h4.2M92.4 443.1h4.2M105 443.1h4.2M0 447.3h8.4M63 447.3h4.2M126 447.3h8.4M63 451.5h4.2M147 451.5h4.2M155.4 451.5h4.2M4.2 455.7h4.2M58.8 455.7h12.6M92.4 455.7h4.2M134.4 455.7h4.2M172.2 455.7h4.2M63 459.9h4.2M84 459.9h4.2M134.4 459.9h8.4M155.4 459.9h4.2M168 459.9h4.2M58.8 464.1h16.8M92.4 464.1h4.2M126 464.1h12.6M155.4 464.1h8.4M58.8 468.3h8.4M75.6 468.3h4.2M88.2 468.3h4.2M130.2 468.3h4.2M84 472.5h4.2M96.6 472.5h4.2M126 472.5h12.6M142.8 472.5h4.2M159.6 472.5h4.2M58.8 476.7h4.2M92.4 476.7h8.4M105 476.7h8.4M126 476.7h4.2M155.4 476.7h4.2M147 480.9h4.2M50.4 485.1h4.2M58.8 485.1h8.4M100.8 485.1h4.2M130.2 485.1h4.2M155.4 485.1h4.2M50.4 489.3h4.2M63 489.3h4.2M92.4 489.3h4.2M130.2 489.3h8.4M50.4 493.5h8.4M67.2 493.5h8.4M138.6 493.5h4.2M54.6 497.7h4.2M63 497.7h16.8M92.4 497.7h8.4M130.2 497.7h8.4M147 497.7h16.8M168 497.7h4.2M126 501.9h8.4M142.8 501.9h12.6M67.2 506.1h4.2M92.4 506.1h8.4M130.2 506.1h8.4M147 506.1h4.2M4.2 510.3h8.4M105 510.3h4.2M134.4 510.3h4.2M172.2 510.3h4.2M88.2 514.5h12.6M134.4 514.5h8.4M63 518.7h4.2M96.6 518.7h4.2M138.6 518.7h4.2M147 518.7h4.2M172.2 518.7h4.2M67.2 522.9h4.2M75.6 522.9h4.2M88.2 522.9h8.4M130.2 522.9h4.2M176.4 522.9h4.2M54.6 527.1h4.2M88.2 527.1h4.2M155.4 527.1h4.2M67.2 531.3h4.2M84 531.3h4.2M58.8 535.5h4.2M67.2 543.9h4.2M58.8 548.1h4.2M75.6 548.1h4.2M84 548.1h12.6M142.8 548.1h4.2" stroke="#f4854b" stroke-width="4.5" fill="none"/>
<path d="M46.2 2.1h4.2M63 2.1h4.2M109.2 2.1h4.2M67.2 6.3h4.2M109.2 6.3h4.2M126 6.3h4.2M50.4 10.5h4.2M67.2 10.5h8.4M79.8 10.5h4.2M88.2 10.5h4.2M100.8 10.5h4.2M117.6 10.5h12.6M134.4 10.5h4.2M142.8 10.5h4.2M54.6 14.7h4.2M67.2 14.7h8.4M88.2 14.7h8.4M100.8 14.7h8.4M126 14.7h8.4M142.8 14.7h4.2M151.2 14.7h4.2M100.8 18.9h8.4M117.6 18.9h4.2M126 18.9h4.2M134.4 18.9h8.4M147 18.9h4.2M67.2 23.1h4.2M84 23.1h4.2M130.2 23.1h8.4M155.4 23.1h4.2M58.8 27.3h8.4M75.6 27.3h4.2M100.8 27.3h4.2M117.6 27.3h8.4M134.4 27.3h8.4M147 27.3h4.2M46.2 31.5h4.2M126 31.5h4.2M138.6 31.5h8.4M42 35.7h4.2M54.6 35.7h4.2M75.6 35.7h8.4M88.2 35.7h4.2M96.6 35.7h4.2M126 35.7h12.6M147 35.7h8.4M46.2 39.9h4.2M79.8 39.9h4.2M100.8 39.9h4.2M109.2 39.9h8.4M138.6 39.9h4.2M147 39.9h4.2M46.2 44.1h4.2M54.6 44.1h4.2M92.4 44.1h4.2M105 44.1h12.6M151.2 44.1h4.2M67.2 48.3h4.2M84 48.3h4.2M96.6 48.3h8.4M117.6 48.3h4.2M130.2 48.3h4.2M151.2 48.3h4.2M58.8 52.5h4.2M88.2 52.5h4.2M109.2 52.5h4.2M121.8 52.5h4.2M138.6 52.5h21M46.2 56.7h8.4M71.4 56.7h8.4M88.2 56.7h4.2M117.6 56.7h4.2M126 56.7h8.4M142.8 56.7h4.2M46.2 60.9h12.6M88.2 60.9h4.2M96.6 60.9h4.2M121.8 60.9h4.2M63 65.1h4.2M88.2 65.1h12.6M117.6 65.1h4.2M130.2 65.1h4.2M142.8 65.1h4.2M71.4 69.3h4.2M88.2 69.3h8.4M113.4 69.3h4.2M151.2 69.3h4.2M63 73.5h8.4M75.6 73.5h8.4M88.2 73.5h8.4M130.2 73.5h4.2M142.8 73.5h8.4M46.2 77.7h4.2M75.6 77.7h4.2M88.2 77.7h4.2M96.6 77.7h8.4M121.8 77.7h8.4M134.4 77.7h4.2M142.8 77.7h4.2M46.2 81.9h8.4M84 81.9h8.4M96.6 81.9h8.4M117.6 81.9h4.2M142.8 81.9h8.4M155.4 81.9h4.2M50.4 86.1h4.2M88.2 86.1h4.2M96.6 86.1h4.2M126 86.1h4.2M155.4 86.1h8.4M58.8 90.3h4.2M121.8 90.3h4.2M155.4 90.3h4.2M46.2 94.5h4.2M63 94.5h4.2M100.8 94.5h4.2M117.6 94.5h4.2M151.2 94.5h4.2M58.8 98.7h4.2M105 98.7h8.4M151.2 98.7h4.2M46.2 102.9h4.2M117.6 102.9h4.2M151.2 102.9h4.2M113.4 107.1h4.2M42 111.3h4.2M54.6 111.3h4.2M109.2 111.3h4.2M121.8 111.3h4.2M151.2 111.3h4.2M46.2 115.5h8.4M126 115.5h4.2M151.2 115.5h4.2M50.4 119.7h4.2M155.4 119.7h4.2M42 123.9h4.2M71.4 123.9h8.4M147 123.9h8.4M37.8 128.1h4.2M79.8 128.1h4.2M109.2 128.1h12.6M151.2 128.1h4.2M79.8 132.3h8.4M105 132.3h12.6M121.8 132.3h8.4M176.4 132.3h4.2M79.8 136.5h8.4M117.6 136.5h8.4M130.2 136.5h8.4M155.4 136.5h4.2M168 136.5h8.4M37.8 140.7h8.4M92.4 140.7h8.4M130.2 140.7h4.2M155.4 140.7h4.2M42 144.9h4.2M58.8 144.9h4.2M67.2 144.9h4.2M96.6 144.9h4.2M121.8 144.9h4.2M130.2 144.9h8.4M142.8 144.9h4.2M168 144.9h4.2M42 149.1h16.8M79.8 149.1h4.2M92.4 149.1h8.4M126 149.1h4.2M142.8 149.1h12.6M54.6 153.3h4.2M75.6 153.3h4.2M84 153.3h4.2M92.4 153.3h8.4M121.8 153.3h8.4M134.4 153.3h4.2M151.2 153.3h8.4M58.8 157.5h4.2M71.4 157.5h4.2M121.8 157.5h4.2M147 157.5h12.6M50.4 161.7h4.2M117.6 161.7h4.2M126 161.7h4.2M155.4 161.7h4.2M46.2 165.9h8.4M58.8 165.9h4.2M117.6 165.9h8.4M147 165.9h8.4M0 170.1h4.2M46.2 170.1h8.4M63 170.1h4.2M96.6 170.1h4.2M109.2 170.1h8.4M134.4 170.1h8.4M151.2 170.1h4.2M176.4 170.1h4.2M218.4 170.1h4.2M63 174.3h4.2M92.4 174.3h4.2M46.2 178.5h8.4M63 178.5h4.2M88.2 178.5h4.2M105 178.5h4.2M84 182.7h4.2M50.4 186.9h8.4M239.4 186.9h4.2M247.8 186.9h4.2M50.4 191.1h8.4M79.8 191.1h4.2M243.6 191.1h4.2M46.2 195.3h8.4M79.8 195.3h4.2M126 195.3h8.4M37.8 199.5h4.2M50.4 199.5h8.4M142.8 199.5h8.4M226.8 199.5h4.2M235.2 199.5h4.2M243.6 199.5h4.2M42 203.7h12.6M130.2 203.7h12.6M226.8 203.7h8.4M239.4 203.7h8.4M50.4 207.9h8.4M138.6 207.9h8.4M247.8 207.9h4.2M54.6 212.1h4.2M75.6 212.1h4.2M117.6 212.1h4.2M126 212.1h16.8M239.4 212.1h4.2M58.8 216.3h4.2M121.8 216.3h4.2M130.2 216.3h12.6M235.2 216.3h16.8M42 220.5h8.4M235.2 220.5h4.2M63 224.7h8.4M247.8 224.7h4.2M58.8 228.9h8.4M88.2 228.9h4.2M243.6 228.9h4.2M63 233.1h4.2M247.8 233.1h4.2M58.8 237.3h4.2M71.4 237.3h4.2M231 237.3h4.2M243.6 237.3h4.2M231 241.5h8.4M243.6 241.5h4.2M231 245.7h4.2M239.4 245.7h12.6M46.2 249.9h4.2M54.6 249.9h4.2M71.4 249.9h8.4M235.2 249.9h4.2M46.2 254.1h8.4M58.8 254.1h4.2M67.2 254.1h4.2M63 258.3h4.2M71.4 258.3h4.2M231 258.3h8.4M46.2 262.5h4.2M58.8 262.5h4.2M71.4 262.5h4.2M226.8 262.5h4.2M239.4 262.5h4.2M247.8 262.5h4.2M46.2 266.7h4.2M63 266.7h4.2M84 266.7h12.6M231 266.7h8.4M46.2 270.9h4.2M79.8 270.9h4.2M109.2 270.9h4.2M130.2 270.9h8.4M147 270.9h8.4M159.6 270.9h4.2M176.4 270.9h4.2M193.2 270.9h4.2M46.2 275.1h4.2M88.2 275.1h4.2M100.8 275.1h12.6M134.4 275.1h8.4M163.8 275.1h4.2M172.2 275.1h8.4M189 275.1h4.2M205.8 275.1h4.2M58.8 279.3h8.4M75.6 279.3h8.4M138.6 279.3h4.2M168 279.3h4.2M176.4 279.3h4.2M189 279.3h8.4M201.6 279.3h8.4M226.8 279.3h4.2M42 283.5h8.4M100.8 283.5h8.4M142.8 283.5h4.2M168 283.5h4.2M176.4 283.5h4.2M184.8 283.5h4.2M197.4 283.5h8.4M71.4 287.7h8.4M96.6 287.7h4.2M105 287.7h8.4M117.6 287.7h12.6M184.8 287.7h4.2M201.6 287.7h4.2M239.4 287.7h4.2M58.8 291.9h4.2M67.2 291.9h4.2M75.6 291.9h8.4M88.2 291.9h4.2M100.8 291.9h4.2M155.4 291.9h4.2M168 291.9h8.4M184.8 291.9h4.2M235.2 291.9h8.4M247.8 291.9h4.2M42 296.1h4.2M79.8 296.1h4.2M96.6 296.1h4.2M134.4 296.1h4.2M155.4 296.1h4.2M168 296.1h8.4M184.8 296.1h8.4M239.4 296.1h8.4M79.8 300.3h4.2M126 300.3h4.2M159.6 300.3h4.2M168 300.3h4.2M184.8 300.3h4.2M197.4 300.3h4.2M235.2 300.3h4.2M4.2 304.5h4.2M92.4 304.5h4.2M163.8 304.5h8.4M4.2 308.7h4.2M96.6 308.7h4.2M105 308.7h4.2M130.2 308.7h4.2M142.8 308.7h8.4M155.4 308.7h8.4M176.4 308.7h8.4M0 312.9h8.4M46.2 312.9h4.2M79.8 312.9h8.4M155.4 312.9h8.4M4.2 317.1h4.2M46.2 317.1h4.2M75.6 317.1h4.2M84 317.1h4.2M134.4 317.1h4.2M142.8 317.1h4.2M4.2 321.3h4.2M46.2 321.3h4.2M75.6 321.3h4.2M134.4 321.3h4.2M0 325.5h4.2M50.4 325.5h4.2M79.8 325.5h4.2M138.6 325.5h4.2M71.4 329.7h4.2M138.6 329.7h4.2M0 333.9h4.2M46.2 333.9h4.2M75.6 333.9h4.2M84 333.9h8.4M46.2 342.3h12.6M79.8 342.3h4.2M100.8 342.3h4.2M67.2 346.5h4.2M79.8 346.5h4.2M130.2 346.5h4.2M54.6 350.7h8.4M84 350.7h16.8M84 354.9h8.4M100.8 354.9h4.2M126 354.9h8.4M88.2 359.1h4.2M96.6 359.1h4.2M126 359.1h4.2M0 363.3h8.4M46.2 363.3h4.2M151.2 363.3h4.2M0 367.5h4.2M88.2 367.5h4.2M96.6 367.5h4.2M134.4 367.5h4.2M147 367.5h4.2M50.4 371.7h8.4M88.2 371.7h8.4M105 371.7h4.2M130.2 371.7h12.6M147 371.7h4.2M88.2 375.9h4.2M100.8 375.9h4.2M126 375.9h12.6M147 375.9h4.2M88.2 380.1h4.2M105 380.1h4.2M121.8 380.1h8.4M134.4 380.1h4.2M142.8 380.1h4.2M151.2 380.1h4.2M58.8 384.3h4.2M100.8 384.3h4.2M159.6 384.3h4.2M88.2 388.5h4.2M100.8 388.5h8.4M113.4 388.5h4.2M121.8 388.5h4.2M130.2 388.5h4.2M159.6 388.5h8.4M46.2 392.7h8.4M79.8 392.7h8.4M100.8 392.7h8.4M126 392.7h8.4M147 392.7h4.2M159.6 392.7h8.4M4.2 396.9h4.2M50.4 396.9h4.2M75.6 396.9h4.2M168 396.9h4.2M4.2 401.1h4.2M96.6 401.1h4.2M176.4 401.1h8.4M105 405.3h8.4M121.8 405.3h4.2M184.8 405.3h4.2M4.2 409.5h4.2M79.8 409.5h4.2M100.8 409.5h8.4M121.8 409.5h4.2M176.4 409.5h4.2M96.6 413.7h4.2M105 413.7h4.2M0 417.9h8.4M67.2 417.9h4.2M180.6 417.9h4.2M8.4 422.1h4.2M54.6 422.1h4.2M96.6 422.1h4.2M121.8 422.1h4.2M180.6 422.1h4.2M189 422.1h4.2M4.2 426.3h4.2M50.4 426.3h4.2M100.8 426.3h4.2M184.8 426.3h4.2M243.6 426.3h4.2M4.2 430.5h4.2M92.4 430.5h8.4M105 430.5h4.2M126 430.5h4.2M184.8 430.5h8.4M4.2 434.7h4.2M96.6 434.7h4.2M126 434.7h4.2M193.2 434.7h4.2M54.6 438.9h4.2M63 438.9h4.2M96.6 438.9h4.2M109.2 438.9h4.2M184.8 438.9h8.4M4.2 443.1h4.2M54.6 443.1h4.2M96.6 443.1h4.2M121.8 443.1h4.2M180.6 443.1h4.2M8.4 447.3h4.2M58.8 447.3h4.2M96.6 447.3h12.6M180.6 447.3h4.2M8.4 451.5h4.2M58.8 451.5h4.2M84 451.5h8.4M105 451.5h4.2M184.8 451.5h8.4M8.4 455.7h4.2M100.8 455.7h4.2M184.8 455.7h4.2M4.2 459.9h4.2M58.8 459.9h4.2M67.2 459.9h4.2M92.4 459.9h4.2M105 459.9h4.2M126 459.9h8.4M142.8 459.9h12.6M172.2 459.9h4.2M189 459.9h4.2M88.2 464.1h4.2M96.6 464.1h8.4M142.8 464.1h12.6M168 464.1h12.6M0 468.3h4.2M67.2 468.3h8.4M84 468.3h4.2M96.6 468.3h4.2M105 468.3h4.2M121.8 468.3h8.4M147 468.3h12.6M176.4 468.3h4.2M50.4 472.5h8.4M88.2 472.5h4.2M113.4 472.5h4.2M121.8 472.5h4.2M147 472.5h12.6M168 472.5h8.4M54.6 476.7h4.2M88.2 476.7h4.2M113.4 476.7h4.2M121.8 476.7h4.2M130.2 476.7h4.2M138.6 476.7h12.6M50.4 480.9h8.4M105 480.9h8.4M126 480.9h4.2M134.4 480.9h4.2M142.8 480.9h4.2M54.6 485.1h4.2M109.2 485.1h8.4M126 485.1h4.2M138.6 485.1h8.4M67.2 489.3h4.2M96.6 489.3h8.4M138.6 489.3h4.2M159.6 489.3h8.4M63 493.5h4.2M92.4 493.5h4.2M105 493.5h4.2M126 493.5h12.6M142.8 493.5h4.2M159.6 493.5h4.2M189 493.5h4.2M58.8 497.7h4.2M126 497.7h4.2M4.2 501.9h4.2M58.8 501.9h8.4M134.4 501.9h8.4M155.4 501.9h4.2M163.8 501.9h12.6M0 506.1h12.6M63 506.1h4.2M105 506.1h4.2M138.6 506.1h4.2M168 506.1h4.2M12.6 510.3h4.2M58.8 510.3h4.2M92.4 510.3h12.6M109.2 510.3h4.2M117.6 510.3h12.6M138.6 510.3h4.2M151.2 510.3h21M189 510.3h4.2M205.8 510.3h4.2M4.2 514.5h4.2M54.6 514.5h8.4M100.8 514.5h33.6M155.4 514.5h8.4M168 514.5h4.2M176.4 514.5h4.2M58.8 518.7h4.2M100.8 518.7h4.2M126 518.7h12.6M142.8 518.7h4.2M155.4 518.7h4.2M176.4 518.7h8.4M50.4 522.9h4.2M58.8 522.9h4.2M96.6 522.9h4.2M126 522.9h4.2M138.6 522.9h8.4M151.2 522.9h4.2M172.2 522.9h4.2M184.8 522.9h4.2M0 527.1h4.2M58.8 527.1h4.2M71.4 527.1h4.2M92.4 527.1h4.2M126 527.1h4.2M151.2 527.1h4.2M172.2 527.1h4.2M54.6 531.3h8.4M75.6 531.3h4.2M130.2 531.3h4.2M71.4 535.5h4.2M79.8 535.5h8.4M79.8 539.7h4.2M88.2 539.7h4.2M71.4 543.9h12.6M88.2 543.9h4.2M134.4 543.9h8.4M50.4 548.1h4.2M79.8 548.1h4.2M117.6 548.1h4.2M134.4 548.1h4.2M147 548.1h4.2M168 548.1h4.2M184.8 548.1h4.2" stroke="#f58b4e" stroke-width="4.5" fill="none"/>
<path d="M50.4 2.1h4.2M58.8 2.1h4.2M71.4 2.1h4.2M88.2 2.1h4.2M113.4 2.1h8.4M130.2 2.1h12.6M46.2 6.3h8.4M71.4 6.3h8.4M84 6.3h4.2M105 6.3h4.2M113.4 6.3h8.4M134.4 6.3h4.2M58.8 10.5h4.2M84 10.5h4.2M96.6 10.5h4.2M138.6 10.5h4.2M147 10.5h4.2M50.4 14.7h4.2M96.6 14.7h4.2M121.8 14.7h4.2M134.4 14.7h4.2M155.4 14.7h4.2M46.2 18.9h4.2M63 18.9h4.2M130.2 18.9h4.2M168 18.9h4.2M46.2 23.1h12.6M142.8 23.1h4.2M50.4 27.3h8.4M67.2 27.3h4.2M79.8 27.3h4.2M126 27.3h8.4M155.4 27.3h4.2M168 27.3h4.2M50.4 31.5h4.2M105 31.5h4.2M121.8 31.5h4.2M130.2 31.5h4.2M155.4 31.5h4.2M46.2 35.7h4.2M67.2 35.7h4.2M92.4 35.7h4.2M105 35.7h4.2M142.8 35.7h4.2M50.4 39.9h4.2M71.4 39.9h4.2M151.2 39.9h12.6M0 44.1h4.2M42 44.1h4.2M67.2 44.1h4.2M96.6 44.1h4.2M117.6 44.1h4.2M163.8 44.1h4.2M42 48.3h4.2M113.4 48.3h4.2M121.8 48.3h4.2M155.4 48.3h8.4M42 52.5h4.2M54.6 52.5h4.2M63 52.5h4.2M126 52.5h4.2M42 56.7h4.2M54.6 56.7h4.2M63 56.7h8.4M121.8 56.7h4.2M151.2 56.7h8.4M92.4 60.9h4.2M126 60.9h4.2M37.8 65.1h8.4M58.8 65.1h4.2M155.4 65.1h4.2M168 65.1h8.4M37.8 69.3h4.2M46.2 69.3h12.6M142.8 69.3h8.4M210 69.3h4.2M42 73.5h8.4M58.8 73.5h4.2M155.4 73.5h4.2M210 73.5h4.2M50.4 77.7h12.6M159.6 77.7h8.4M54.6 81.9h4.2M92.4 81.9h4.2M121.8 81.9h12.6M138.6 81.9h4.2M159.6 81.9h8.4M121.8 86.1h4.2M163.8 86.1h4.2M42 90.3h4.2M92.4 90.3h4.2M163.8 90.3h4.2M113.4 98.7h4.2M42 102.9h4.2M109.2 102.9h4.2M205.8 102.9h8.4M37.8 107.1h4.2M54.6 107.1h4.2M100.8 107.1h4.2M155.4 107.1h4.2M155.4 111.3h4.2M42 115.5h4.2M54.6 115.5h4.2M155.4 115.5h4.2M42 119.7h4.2M151.2 119.7h4.2M155.4 123.9h4.2M172.2 128.1h8.4M33.6 132.3h4.2M42 132.3h8.4M117.6 132.3h4.2M159.6 132.3h4.2M168 132.3h4.2M184.8 132.3h4.2M33.6 136.5h12.6M126 136.5h4.2M138.6 136.5h4.2M147 136.5h8.4M159.6 136.5h4.2M176.4 136.5h8.4M121.8 140.7h4.2M134.4 140.7h4.2M142.8 140.7h8.4M172.2 140.7h4.2M184.8 140.7h4.2M33.6 144.9h8.4M126 144.9h4.2M138.6 144.9h4.2M37.8 149.1h4.2M63 149.1h4.2M134.4 149.1h8.4M37.8 153.3h8.4M67.2 153.3h4.2M138.6 153.3h4.2M0 157.5h4.2M42 157.5h4.2M172.2 157.5h4.2M0 161.7h4.2M37.8 161.7h8.4M58.8 161.7h4.2M121.8 161.7h4.2M151.2 161.7h4.2M172.2 161.7h8.4M189 161.7h4.2M63 165.9h4.2M126 165.9h4.2M155.4 165.9h4.2M172.2 165.9h8.4M222.6 165.9h4.2M37.8 170.1h4.2M117.6 170.1h16.8M142.8 170.1h4.2M155.4 170.1h4.2M226.8 170.1h4.2M0 174.3h4.2M33.6 174.3h12.6M58.8 174.3h4.2M96.6 174.3h4.2M109.2 174.3h8.4M0 178.5h4.2M42 178.5h4.2M54.6 178.5h4.2M92.4 178.5h4.2M100.8 178.5h4.2M231 178.5h4.2M247.8 178.5h4.2M0 182.7h4.2M46.2 182.7h8.4M58.8 182.7h8.4M235.2 182.7h4.2M243.6 182.7h4.2M79.8 186.9h4.2M134.4 186.9h8.4M222.6 186.9h16.8M243.6 186.9h4.2M42 191.1h8.4M84 191.1h4.2M134.4 191.1h8.4M222.6 191.1h8.4M235.2 191.1h4.2M37.8 195.3h8.4M121.8 195.3h4.2M138.6 195.3h12.6M226.8 195.3h4.2M239.4 195.3h4.2M247.8 195.3h4.2M42 199.5h4.2M121.8 199.5h4.2M231 199.5h4.2M117.6 203.7h4.2M126 203.7h4.2M147 203.7h4.2M235.2 203.7h4.2M247.8 203.7h4.2M46.2 207.9h4.2M75.6 207.9h4.2M121.8 207.9h4.2M130.2 207.9h4.2M147 207.9h4.2M226.8 207.9h4.2M239.4 207.9h8.4M113.4 212.1h4.2M121.8 212.1h4.2M235.2 212.1h4.2M247.8 212.1h4.2M126 216.3h4.2M231 216.3h4.2M71.4 220.5h4.2M88.2 220.5h4.2M126 220.5h8.4M231 220.5h4.2M37.8 224.7h8.4M84 224.7h4.2M231 224.7h4.2M239.4 224.7h4.2M42 228.9h4.2M67.2 228.9h8.4M84 228.9h4.2M231 228.9h4.2M71.4 233.1h8.4M243.6 233.1h4.2M42 237.3h4.2M88.2 237.3h4.2M226.8 237.3h4.2M235.2 237.3h8.4M247.8 237.3h4.2M42 241.5h4.2M84 241.5h4.2M226.8 241.5h4.2M239.4 241.5h4.2M42 245.7h4.2M71.4 245.7h8.4M226.8 245.7h4.2M235.2 245.7h4.2M0 249.9h4.2M42 249.9h4.2M84 249.9h4.2M226.8 249.9h8.4M75.6 254.1h8.4M231 254.1h4.2M46.2 258.3h4.2M54.6 258.3h4.2M79.8 258.3h4.2M226.8 258.3h4.2M243.6 258.3h4.2M67.2 262.5h4.2M79.8 262.5h8.4M231 262.5h4.2M243.6 262.5h4.2M226.8 266.7h4.2M243.6 266.7h8.4M100.8 270.9h4.2M163.8 270.9h4.2M201.6 270.9h8.4M226.8 270.9h4.2M239.4 270.9h4.2M159.6 275.1h4.2M168 275.1h4.2M201.6 275.1h4.2M222.6 275.1h8.4M42 279.3h4.2M71.4 279.3h4.2M109.2 279.3h8.4M159.6 279.3h8.4M210 279.3h8.4M247.8 279.3h4.2M67.2 283.5h4.2M75.6 283.5h4.2M109.2 283.5h8.4M180.6 283.5h4.2M193.2 283.5h4.2M214.2 283.5h4.2M239.4 283.5h8.4M46.2 287.7h4.2M113.4 287.7h4.2M155.4 287.7h4.2M176.4 287.7h4.2M205.8 287.7h12.6M235.2 287.7h4.2M247.8 287.7h4.2M92.4 291.9h4.2M109.2 291.9h4.2M126 291.9h4.2M163.8 291.9h4.2M176.4 291.9h4.2M201.6 291.9h8.4M222.6 291.9h8.4M126 296.1h8.4M159.6 296.1h8.4M176.4 296.1h8.4M222.6 296.1h4.2M231 296.1h4.2M247.8 296.1h4.2M0 300.3h8.4M75.6 300.3h4.2M105 300.3h4.2M121.8 300.3h4.2M163.8 300.3h4.2M176.4 300.3h8.4M193.2 300.3h4.2M201.6 300.3h8.4M247.8 300.3h4.2M0 304.5h4.2M8.4 304.5h4.2M46.2 304.5h4.2M96.6 304.5h4.2M109.2 304.5h4.2M180.6 304.5h8.4M201.6 304.5h4.2M0 308.7h4.2M8.4 308.7h4.2M46.2 308.7h4.2M92.4 308.7h4.2M100.8 308.7h4.2M109.2 308.7h4.2M134.4 308.7h4.2M163.8 308.7h4.2M184.8 308.7h4.2M8.4 312.9h4.2M92.4 312.9h4.2M100.8 312.9h12.6M126 312.9h4.2M134.4 312.9h21M168 312.9h12.6M247.8 312.9h4.2M8.4 317.1h4.2M79.8 317.1h4.2M92.4 317.1h4.2M105 317.1h4.2M121.8 317.1h4.2M130.2 317.1h4.2M159.6 317.1h8.4M84 321.3h4.2M92.4 321.3h4.2M130.2 321.3h4.2M142.8 321.3h4.2M168 321.3h4.2M4.2 325.5h4.2M46.2 325.5h4.2M84 325.5h12.6M126 325.5h8.4M142.8 325.5h4.2M46.2 329.7h4.2M79.8 329.7h12.6M126 329.7h12.6M142.8 329.7h8.4M4.2 333.9h4.2M92.4 333.9h4.2M100.8 333.9h4.2M134.4 333.9h12.6M130.2 338.1h4.2M138.6 338.1h4.2M126 342.3h8.4M142.8 342.3h4.2M46.2 346.5h16.8M84 346.5h4.2M126 346.5h4.2M134.4 346.5h8.4M46.2 350.7h8.4M79.8 350.7h4.2M126 350.7h4.2M92.4 354.9h8.4M105 354.9h4.2M4.2 359.1h4.2M46.2 359.1h4.2M105 359.1h4.2M147 359.1h4.2M88.2 363.3h4.2M100.8 363.3h8.4M130.2 363.3h4.2M147 363.3h4.2M4.2 367.5h4.2M100.8 367.5h4.2M109.2 367.5h4.2M138.6 367.5h4.2M46.2 371.7h4.2M100.8 371.7h4.2M109.2 371.7h4.2M126 371.7h4.2M142.8 371.7h4.2M151.2 371.7h4.2M50.4 375.9h4.2M92.4 375.9h8.4M105 375.9h8.4M121.8 375.9h4.2M138.6 375.9h8.4M151.2 375.9h4.2M42 380.1h4.2M50.4 380.1h8.4M100.8 380.1h4.2M113.4 380.1h4.2M155.4 380.1h8.4M4.2 384.3h4.2M46.2 384.3h4.2M121.8 384.3h4.2M130.2 384.3h4.2M163.8 384.3h4.2M0 388.5h8.4M42 388.5h8.4M109.2 388.5h4.2M126 388.5h4.2M168 388.5h8.4M0 392.7h12.6M109.2 392.7h4.2M117.6 392.7h8.4M168 392.7h4.2M176.4 392.7h4.2M176.4 396.9h4.2M8.4 401.1h4.2M100.8 401.1h4.2M121.8 401.1h4.2M0 405.3h8.4M50.4 405.3h4.2M113.4 405.3h4.2M189 405.3h4.2M50.4 409.5h4.2M117.6 409.5h4.2M180.6 409.5h8.4M4.2 413.7h4.2M50.4 413.7h4.2M100.8 413.7h4.2M113.4 413.7h8.4M180.6 413.7h12.6M50.4 417.9h4.2M117.6 417.9h4.2M184.8 417.9h12.6M4.2 422.1h4.2M100.8 422.1h8.4M117.6 422.1h4.2M193.2 422.1h4.2M0 426.3h4.2M8.4 426.3h4.2M105 426.3h4.2M121.8 426.3h4.2M189 426.3h4.2M218.4 426.3h4.2M239.4 426.3h4.2M0 430.5h4.2M8.4 430.5h4.2M100.8 430.5h4.2M121.8 430.5h4.2M46.2 434.7h4.2M100.8 434.7h12.6M121.8 434.7h4.2M0 438.9h4.2M105 438.9h4.2M113.4 438.9h4.2M193.2 438.9h4.2M8.4 443.1h4.2M100.8 443.1h4.2M109.2 443.1h4.2M184.8 443.1h4.2M88.2 447.3h8.4M109.2 447.3h4.2M121.8 447.3h4.2M184.8 447.3h8.4M247.8 447.3h4.2M96.6 451.5h8.4M121.8 451.5h4.2M180.6 451.5h4.2M88.2 455.7h4.2M96.6 455.7h4.2M121.8 455.7h4.2M176.4 455.7h4.2M0 459.9h4.2M8.4 459.9h4.2M50.4 459.9h8.4M100.8 459.9h4.2M121.8 459.9h4.2M176.4 459.9h4.2M4.2 464.1h4.2M46.2 464.1h12.6M105 464.1h4.2M184.8 464.1h4.2M193.2 464.1h4.2M8.4 468.3h4.2M46.2 468.3h4.2M54.6 468.3h4.2M92.4 468.3h4.2M100.8 468.3h4.2M109.2 468.3h8.4M172.2 468.3h4.2M184.8 468.3h4.2M92.4 472.5h4.2M117.6 472.5h4.2M184.8 472.5h16.8M46.2 476.7h4.2M151.2 476.7h4.2M168 476.7h4.2M184.8 476.7h4.2M0 480.9h4.2M113.4 480.9h4.2M155.4 480.9h4.2M172.2 480.9h4.2M0 485.1h4.2M46.2 485.1h4.2M121.8 485.1h4.2M159.6 485.1h4.2M0 489.3h4.2M12.6 489.3h4.2M46.2 489.3h4.2M58.8 489.3h4.2M105 489.3h12.6M126 489.3h4.2M168 489.3h4.2M193.2 489.3h4.2M8.4 493.5h4.2M46.2 493.5h4.2M96.6 493.5h8.4M113.4 493.5h4.2M172.2 493.5h4.2M184.8 493.5h4.2M193.2 493.5h8.4M0 497.7h4.2M50.4 497.7h4.2M105 497.7h4.2M138.6 497.7h4.2M163.8 497.7h4.2M172.2 497.7h4.2M189 497.7h8.4M0 501.9h4.2M8.4 501.9h4.2M54.6 501.9h4.2M121.8 501.9h4.2M159.6 501.9h4.2M176.4 501.9h4.2M58.8 506.1h4.2M109.2 506.1h4.2M121.8 506.1h4.2M159.6 506.1h4.2M172.2 506.1h8.4M189 506.1h8.4M0 510.3h4.2M113.4 510.3h4.2M142.8 510.3h8.4M176.4 510.3h8.4M197.4 510.3h4.2M8.4 514.5h8.4M142.8 514.5h12.6M172.2 514.5h4.2M184.8 514.5h4.2M193.2 514.5h4.2M201.6 514.5h4.2M210 514.5h4.2M4.2 518.7h4.2M54.6 518.7h4.2M105 518.7h8.4M117.6 518.7h8.4M189 518.7h4.2M0 522.9h8.4M54.6 522.9h4.2M63 522.9h4.2M100.8 522.9h8.4M121.8 522.9h4.2M134.4 522.9h4.2M147 522.9h4.2M155.4 522.9h4.2M168 522.9h4.2M180.6 522.9h4.2M46.2 527.1h4.2M63 527.1h4.2M96.6 527.1h16.8M134.4 527.1h4.2M147 527.1h4.2M159.6 527.1h12.6M176.4 527.1h16.8M88.2 531.3h8.4M100.8 531.3h4.2M151.2 531.3h8.4M184.8 531.3h4.2M63 535.5h4.2M75.6 535.5h4.2M88.2 535.5h4.2M134.4 535.5h4.2M151.2 535.5h4.2M71.4 539.7h8.4M84 539.7h4.2M92.4 539.7h4.2M134.4 539.7h8.4M147 539.7h4.2M54.6 543.9h8.4M84 543.9h4.2M92.4 543.9h4.2M117.6 543.9h12.6M142.8 543.9h4.2M163.8 543.9h12.6M54.6 548.1h4.2M96.6 548.1h4.2M121.8 548.1h4.2M130.2 548.1h4.2M159.6 548.1h4.2M172.2 548.1h4.2M210 548.1h4.2M218.4 548.1h4.2" stroke="#f69151" stroke-width="4.5" fill="none"/>
<path d="M42 2.1h4.2M54.6 2.1h4.2M75.6 2.1h12.6M100.8 2.1h8.4M121.8 2.1h8.4M142.8 2.1h8.4M54.6 6.3h8.4M79.8 6.3h4.2M100.8 6.3h4.2M121.8 6.3h4.2M138.6 6.3h12.6M46.2 10.5h4.2M75.6 10.5h4.2M151.2 10.5h4.2M37.8 14.7h8.4M58.8 14.7h4.2M42 18.9h4.2M54.6 18.9h8.4M67.2 18.9h4.2M163.8 18.9h4.2M172.2 18.9h4.2M37.8 23.1h8.4M63 23.1h4.2M159.6 23.1h16.8M189 23.1h4.2M226.8 23.1h4.2M46.2 27.3h4.2M159.6 27.3h4.2M172.2 27.3h4.2M37.8 31.5h8.4M159.6 31.5h4.2M172.2 31.5h4.2M100.8 35.7h4.2M109.2 35.7h4.2M155.4 35.7h8.4M176.4 35.7h4.2M42 39.9h4.2M96.6 39.9h4.2M105 39.9h4.2M189 39.9h4.2M37.8 44.1h4.2M50.4 44.1h4.2M100.8 44.1h4.2M155.4 44.1h8.4M189 44.1h4.2M0 48.3h8.4M46.2 48.3h12.6M205.8 48.3h4.2M37.8 52.5h4.2M50.4 52.5h4.2M117.6 52.5h4.2M159.6 52.5h4.2M189 52.5h4.2M29.4 56.7h4.2M159.6 56.7h4.2M189 56.7h4.2M42 60.9h4.2M58.8 60.9h8.4M155.4 60.9h4.2M0 65.1h4.2M163.8 65.1h4.2M176.4 65.1h4.2M189 65.1h4.2M243.6 65.1h4.2M42 69.3h4.2M58.8 69.3h8.4M168 69.3h12.6M214.2 69.3h4.2M33.6 73.5h8.4M50.4 73.5h8.4M172.2 73.5h4.2M205.8 73.5h4.2M37.8 77.7h4.2M168 77.7h8.4M210 77.7h4.2M42 81.9h4.2M168 81.9h4.2M210 81.9h4.2M42 86.1h4.2M46.2 90.3h4.2M159.6 90.3h4.2M184.8 94.5h4.2M42 98.7h8.4M172.2 98.7h4.2M184.8 98.7h8.4M205.8 98.7h8.4M37.8 102.9h4.2M155.4 102.9h4.2M184.8 102.9h4.2M214.2 107.1h4.2M37.8 111.3h4.2M50.4 111.3h4.2M163.8 111.3h4.2M159.6 115.5h4.2M168 115.5h4.2M37.8 119.7h4.2M159.6 119.7h4.2M172.2 123.9h4.2M42 128.1h4.2M168 128.1h4.2M37.8 132.3h4.2M163.8 132.3h4.2M180.6 132.3h4.2M163.8 136.5h4.2M184.8 136.5h8.4M201.6 136.5h4.2M163.8 140.7h8.4M176.4 140.7h4.2M189 140.7h4.2M147 144.9h8.4M159.6 144.9h4.2M172.2 144.9h4.2M189 144.9h4.2M218.4 144.9h4.2M33.6 149.1h4.2M58.8 149.1h4.2M159.6 149.1h4.2M168 149.1h8.4M184.8 149.1h8.4M0 153.3h4.2M58.8 153.3h8.4M159.6 153.3h4.2M172.2 153.3h8.4M184.8 153.3h4.2M201.6 153.3h4.2M222.6 153.3h4.2M37.8 157.5h4.2M63 157.5h4.2M159.6 157.5h4.2M176.4 157.5h4.2M184.8 157.5h4.2M159.6 161.7h4.2M0 165.9h4.2M37.8 165.9h8.4M54.6 165.9h4.2M180.6 165.9h12.6M42 170.1h4.2M54.6 170.1h8.4M147 170.1h4.2M210 170.1h8.4M210 174.3h8.4M222.6 174.3h12.6M37.8 178.5h4.2M96.6 178.5h4.2M109.2 178.5h4.2M151.2 178.5h8.4M214.2 178.5h4.2M42 182.7h4.2M96.6 182.7h4.2M134.4 182.7h4.2M226.8 182.7h8.4M247.8 182.7h4.2M0 186.9h4.2M0 191.1h4.2M113.4 191.1h4.2M121.8 191.1h12.6M142.8 191.1h4.2M239.4 191.1h4.2M247.8 191.1h4.2M84 195.3h4.2M222.6 195.3h4.2M79.8 199.5h4.2M239.4 199.5h4.2M247.8 199.5h4.2M0 203.7h4.2M79.8 203.7h4.2M121.8 203.7h4.2M113.4 207.9h8.4M126 207.9h4.2M151.2 207.9h4.2M231 207.9h8.4M46.2 212.1h4.2M84 212.1h4.2M105 212.1h4.2M151.2 212.1h4.2M231 212.1h4.2M84 216.3h4.2M92.4 216.3h4.2M113.4 216.3h8.4M151.2 216.3h4.2M37.8 220.5h4.2M84 220.5h4.2M121.8 220.5h4.2M0 224.7h8.4M71.4 224.7h4.2M117.6 224.7h12.6M226.8 224.7h4.2M0 228.9h4.2M130.2 228.9h4.2M226.8 228.9h4.2M239.4 228.9h4.2M33.6 233.1h4.2M42 233.1h4.2M88.2 233.1h8.4M226.8 233.1h12.6M75.6 237.3h8.4M0 241.5h4.2M75.6 241.5h4.2M88.2 241.5h4.2M247.8 241.5h4.2M37.8 245.7h4.2M79.8 245.7h12.6M79.8 249.9h4.2M88.2 249.9h4.2M0 254.1h4.2M42 254.1h4.2M226.8 254.1h4.2M0 258.3h4.2M42 258.3h4.2M0 262.5h4.2M37.8 262.5h4.2M0 266.7h4.2M42 266.7h4.2M96.6 266.7h4.2M130.2 266.7h12.6M176.4 266.7h4.2M4.2 270.9h4.2M105 270.9h4.2M138.6 270.9h4.2M168 270.9h8.4M180.6 270.9h12.6M197.4 270.9h4.2M222.6 270.9h4.2M231 270.9h8.4M243.6 270.9h8.4M0 275.1h4.2M180.6 275.1h8.4M193.2 275.1h8.4M210 275.1h12.6M231 275.1h4.2M247.8 275.1h4.2M0 279.3h4.2M37.8 279.3h4.2M105 279.3h4.2M180.6 279.3h4.2M197.4 279.3h4.2M222.6 279.3h4.2M243.6 279.3h4.2M0 283.5h4.2M159.6 283.5h8.4M222.6 283.5h16.8M42 287.7h4.2M159.6 287.7h4.2M168 287.7h4.2M193.2 287.7h8.4M222.6 287.7h12.6M42 291.9h4.2M117.6 291.9h8.4M130.2 291.9h4.2M159.6 291.9h4.2M180.6 291.9h4.2M189 291.9h4.2M197.4 291.9h4.2M214.2 291.9h8.4M109.2 296.1h4.2M117.6 296.1h8.4M193.2 296.1h8.4M205.8 296.1h8.4M235.2 296.1h4.2M100.8 300.3h4.2M189 300.3h4.2M214.2 300.3h4.2M226.8 300.3h4.2M239.4 300.3h8.4M100.8 304.5h8.4M113.4 304.5h12.6M189 304.5h12.6M231 304.5h4.2M239.4 304.5h4.2M113.4 308.7h4.2M121.8 308.7h8.4M168 308.7h4.2M193.2 308.7h4.2M243.6 308.7h4.2M96.6 312.9h4.2M117.6 312.9h4.2M130.2 312.9h4.2M163.8 312.9h4.2M184.8 312.9h4.2M239.4 312.9h4.2M42 317.1h4.2M96.6 317.1h8.4M109.2 317.1h12.6M126 317.1h4.2M147 317.1h12.6M168 317.1h8.4M8.4 321.3h4.2M42 321.3h4.2M79.8 321.3h4.2M126 321.3h4.2M147 321.3h4.2M159.6 321.3h4.2M134.4 325.5h4.2M151.2 325.5h4.2M4.2 329.7h4.2M96.6 329.7h4.2M105 329.7h4.2M121.8 329.7h4.2M96.6 333.9h4.2M121.8 333.9h4.2M130.2 333.9h4.2M0 338.1h4.2M46.2 338.1h4.2M105 338.1h4.2M126 338.1h4.2M142.8 338.1h4.2M0 342.3h4.2M113.4 342.3h4.2M134.4 342.3h8.4M0 346.5h4.2M100.8 346.5h8.4M142.8 346.5h4.2M4.2 350.7h4.2M100.8 350.7h8.4M134.4 350.7h8.4M0 354.9h4.2M46.2 354.9h4.2M121.8 354.9h4.2M151.2 354.9h4.2M0 359.1h4.2M100.8 359.1h4.2M121.8 359.1h4.2M130.2 359.1h4.2M92.4 363.3h8.4M109.2 363.3h4.2M126 363.3h4.2M138.6 363.3h8.4M46.2 367.5h4.2M92.4 367.5h4.2M126 367.5h8.4M142.8 367.5h4.2M151.2 367.5h4.2M0 371.7h4.2M121.8 371.7h4.2M4.2 375.9h4.2M46.2 375.9h4.2M113.4 375.9h4.2M155.4 375.9h8.4M0 380.1h8.4M46.2 380.1h4.2M109.2 380.1h4.2M117.6 380.1h4.2M163.8 380.1h4.2M0 384.3h4.2M42 384.3h4.2M105 384.3h16.8M126 384.3h4.2M168 384.3h4.2M8.4 388.5h4.2M176.4 388.5h8.4M42 392.7h4.2M113.4 392.7h4.2M172.2 392.7h4.2M180.6 392.7h4.2M0 396.9h4.2M8.4 396.9h4.2M100.8 396.9h8.4M113.4 396.9h4.2M172.2 396.9h4.2M46.2 401.1h4.2M105 401.1h12.6M184.8 401.1h4.2M8.4 405.3h4.2M46.2 405.3h4.2M100.8 405.3h4.2M180.6 405.3h4.2M0 409.5h4.2M113.4 409.5h4.2M189 409.5h4.2M247.8 409.5h4.2M8.4 413.7h4.2M109.2 413.7h4.2M193.2 413.7h4.2M247.8 413.7h4.2M8.4 417.9h4.2M46.2 417.9h4.2M100.8 417.9h4.2M109.2 417.9h4.2M197.4 417.9h8.4M247.8 417.9h4.2M46.2 422.1h4.2M197.4 422.1h4.2M222.6 422.1h4.2M239.4 422.1h12.6M46.2 426.3h4.2M109.2 426.3h4.2M193.2 426.3h4.2M231 426.3h8.4M247.8 426.3h4.2M46.2 430.5h4.2M109.2 430.5h4.2M243.6 430.5h4.2M0 434.7h4.2M12.6 434.7h4.2M50.4 434.7h4.2M113.4 434.7h8.4M231 434.7h4.2M12.6 438.9h4.2M50.4 438.9h4.2M100.8 438.9h4.2M117.6 438.9h4.2M197.4 438.9h4.2M205.8 438.9h4.2M12.6 443.1h4.2M50.4 443.1h4.2M193.2 443.1h4.2M231 443.1h4.2M243.6 443.1h4.2M50.4 447.3h8.4M113.4 447.3h4.2M193.2 447.3h4.2M46.2 451.5h12.6M92.4 451.5h4.2M193.2 451.5h4.2M247.8 451.5h4.2M12.6 455.7h4.2M46.2 455.7h12.6M105 455.7h4.2M189 455.7h8.4M235.2 455.7h4.2M247.8 455.7h4.2M12.6 459.9h4.2M46.2 459.9h4.2M180.6 459.9h4.2M0 464.1h4.2M8.4 464.1h8.4M109.2 464.1h4.2M121.8 464.1h4.2M180.6 464.1h4.2M235.2 464.1h4.2M4.2 468.3h4.2M50.4 468.3h4.2M180.6 468.3h4.2M189 468.3h12.6M218.4 468.3h4.2M247.8 468.3h4.2M0 472.5h12.6M46.2 472.5h4.2M176.4 472.5h8.4M247.8 472.5h4.2M0 476.7h12.6M50.4 476.7h4.2M117.6 476.7h4.2M163.8 476.7h4.2M172.2 476.7h8.4M189 476.7h8.4M4.2 480.9h8.4M117.6 480.9h8.4M184.8 480.9h8.4M8.4 485.1h4.2M117.6 485.1h4.2M163.8 485.1h8.4M176.4 485.1h4.2M189 485.1h4.2M218.4 485.1h4.2M4.2 489.3h8.4M42 489.3h4.2M117.6 489.3h4.2M172.2 489.3h8.4M189 489.3h4.2M0 493.5h8.4M109.2 493.5h4.2M117.6 493.5h4.2M168 493.5h4.2M176.4 493.5h4.2M205.8 493.5h4.2M4.2 497.7h12.6M46.2 497.7h4.2M109.2 497.7h16.8M176.4 497.7h8.4M205.8 497.7h4.2M113.4 501.9h4.2M184.8 501.9h4.2M193.2 501.9h4.2M205.8 501.9h4.2M12.6 506.1h4.2M117.6 506.1h4.2M142.8 506.1h4.2M151.2 506.1h8.4M163.8 506.1h4.2M180.6 506.1h8.4M201.6 506.1h12.6M16.8 510.3h4.2M63 510.3h4.2M184.8 510.3h4.2M193.2 510.3h4.2M214.2 510.3h4.2M0 514.5h4.2M46.2 514.5h8.4M163.8 514.5h4.2M189 514.5h4.2M0 518.7h4.2M8.4 518.7h4.2M50.4 518.7h4.2M151.2 518.7h4.2M168 518.7h4.2M184.8 518.7h4.2M8.4 522.9h8.4M42 522.9h4.2M159.6 522.9h4.2M193.2 522.9h4.2M201.6 522.9h4.2M4.2 527.1h4.2M50.4 527.1h4.2M130.2 527.1h4.2M138.6 527.1h4.2M197.4 527.1h8.4M0 531.3h8.4M46.2 531.3h8.4M96.6 531.3h4.2M105 531.3h4.2M121.8 531.3h8.4M134.4 531.3h16.8M159.6 531.3h16.8M189 531.3h8.4M54.6 535.5h4.2M92.4 535.5h12.6M126 535.5h4.2M138.6 535.5h4.2M147 535.5h4.2M155.4 535.5h4.2M168 535.5h4.2M193.2 535.5h8.4M54.6 539.7h4.2M63 539.7h8.4M117.6 539.7h8.4M130.2 539.7h4.2M142.8 539.7h4.2M151.2 539.7h8.4M168 539.7h8.4M184.8 539.7h4.2M63 543.9h4.2M96.6 543.9h4.2M109.2 543.9h4.2M130.2 543.9h4.2M147 543.9h12.6M180.6 543.9h8.4M214.2 543.9h4.2M0 548.1h16.8M100.8 548.1h16.8M126 548.1h4.2M151.2 548.1h4.2M163.8 548.1h4.2M176.4 548.1h4.2M189 548.1h4.2M214.2 548.1h4.2M222.6 548.1h12.6" stroke="#f79754" stroke-width="4.5" fill="none"/>
<path d="M92.4 2.1h8.4M37.8 6.3h8.4M88.2 6.3h8.4M151.2 6.3h4.2M42 10.5h4.2M92.4 10.5h4.2M163.8 14.7h4.2M205.8 14.7h4.2M29.4 18.9h4.2M37.8 18.9h4.2M189 18.9h8.4M33.6 23.1h4.2M58.8 23.1h4.2M193.2 23.1h4.2M231 23.1h4.2M37.8 27.3h8.4M163.8 27.3h4.2M176.4 27.3h4.2M231 27.3h4.2M0 31.5h4.2M168 31.5h4.2M176.4 31.5h4.2M37.8 35.7h4.2M172.2 35.7h4.2M0 39.9h8.4M37.8 39.9h4.2M163.8 39.9h4.2M176.4 39.9h4.2M193.2 39.9h8.4M205.8 39.9h4.2M8.4 44.1h4.2M33.6 44.1h4.2M172.2 44.1h4.2M193.2 44.1h4.2M201.6 44.1h12.6M33.6 48.3h4.2M163.8 48.3h8.4M176.4 48.3h4.2M184.8 48.3h12.6M201.6 48.3h4.2M0 52.5h4.2M25.2 52.5h12.6M163.8 52.5h4.2M172.2 52.5h8.4M184.8 52.5h4.2M0 56.7h4.2M33.6 56.7h8.4M58.8 56.7h4.2M163.8 56.7h4.2M172.2 56.7h4.2M184.8 56.7h4.2M205.8 56.7h4.2M214.2 56.7h12.6M33.6 60.9h8.4M159.6 60.9h16.8M184.8 60.9h12.6M214.2 60.9h8.4M33.6 65.1h4.2M159.6 65.1h4.2M184.8 65.1h4.2M210 65.1h8.4M155.4 69.3h4.2M201.6 69.3h8.4M159.6 73.5h12.6M176.4 73.5h4.2M0 77.7h4.2M42 77.7h4.2M176.4 77.7h4.2M205.8 77.7h4.2M222.6 77.7h4.2M172.2 81.9h8.4M205.8 81.9h4.2M222.6 81.9h4.2M37.8 86.1h4.2M168 86.1h12.6M184.8 86.1h4.2M193.2 86.1h4.2M222.6 86.1h4.2M172.2 90.3h4.2M180.6 90.3h4.2M189 90.3h4.2M218.4 90.3h4.2M226.8 90.3h4.2M37.8 94.5h8.4M155.4 94.5h4.2M163.8 94.5h16.8M205.8 94.5h8.4M222.6 94.5h4.2M231 94.5h4.2M33.6 98.7h4.2M155.4 98.7h4.2M163.8 98.7h8.4M180.6 98.7h4.2M33.6 102.9h4.2M176.4 102.9h4.2M189 102.9h4.2M29.4 107.1h4.2M172.2 107.1h4.2M184.8 107.1h8.4M205.8 107.1h8.4M222.6 107.1h4.2M231 107.1h4.2M168 111.3h8.4M184.8 111.3h4.2M218.4 111.3h4.2M247.8 111.3h4.2M0 115.5h4.2M163.8 115.5h4.2M172.2 115.5h4.2M189 115.5h4.2M243.6 115.5h4.2M163.8 119.7h4.2M37.8 123.9h4.2M159.6 123.9h4.2M218.4 123.9h4.2M226.8 123.9h4.2M33.6 128.1h4.2M159.6 128.1h4.2M180.6 128.1h8.4M201.6 128.1h8.4M218.4 128.1h8.4M189 132.3h21M214.2 132.3h4.2M193.2 136.5h8.4M205.8 136.5h4.2M33.6 140.7h4.2M126 140.7h4.2M151.2 140.7h4.2M159.6 140.7h4.2M193.2 140.7h4.2M201.6 140.7h8.4M214.2 140.7h12.6M155.4 144.9h4.2M163.8 144.9h4.2M176.4 144.9h12.6M205.8 144.9h4.2M214.2 144.9h4.2M222.6 144.9h4.2M163.8 149.1h4.2M180.6 149.1h4.2M201.6 149.1h4.2M218.4 149.1h4.2M33.6 153.3h4.2M168 153.3h4.2M180.6 153.3h4.2M189 153.3h4.2M197.4 153.3h4.2M205.8 153.3h4.2M218.4 153.3h4.2M33.6 157.5h4.2M163.8 157.5h8.4M180.6 157.5h4.2M189 157.5h4.2M201.6 157.5h8.4M4.2 161.7h4.2M33.6 161.7h4.2M168 161.7h4.2M184.8 161.7h4.2M205.8 161.7h8.4M218.4 161.7h8.4M4.2 165.9h4.2M33.6 165.9h4.2M159.6 165.9h4.2M205.8 165.9h16.8M226.8 165.9h4.2M4.2 170.1h4.2M33.6 170.1h4.2M159.6 170.1h4.2M172.2 170.1h4.2M180.6 170.1h12.6M205.8 170.1h4.2M222.6 170.1h4.2M231 170.1h4.2M4.2 174.3h4.2M117.6 174.3h8.4M151.2 174.3h8.4M218.4 174.3h4.2M247.8 174.3h4.2M4.2 178.5h4.2M205.8 178.5h8.4M226.8 178.5h4.2M239.4 178.5h4.2M92.4 182.7h4.2M100.8 182.7h8.4M113.4 182.7h4.2M142.8 182.7h16.8M214.2 182.7h12.6M239.4 182.7h4.2M4.2 186.9h4.2M42 186.9h4.2M88.2 186.9h4.2M109.2 186.9h12.6M130.2 186.9h4.2M142.8 186.9h4.2M218.4 186.9h4.2M33.6 191.1h8.4M88.2 191.1h4.2M147 191.1h4.2M218.4 191.1h4.2M231 191.1h4.2M33.6 195.3h4.2M109.2 195.3h4.2M117.6 195.3h4.2M231 195.3h8.4M243.6 195.3h4.2M0 199.5h4.2M33.6 199.5h4.2M105 199.5h16.8M168 199.5h4.2M222.6 199.5h4.2M109.2 203.7h8.4M151.2 203.7h8.4M222.6 203.7h4.2M79.8 207.9h8.4M105 207.9h8.4M155.4 207.9h8.4M79.8 212.1h4.2M88.2 212.1h4.2M109.2 212.1h4.2M147 212.1h4.2M155.4 212.1h4.2M226.8 212.1h4.2M33.6 216.3h12.6M75.6 216.3h8.4M88.2 216.3h4.2M100.8 216.3h4.2M109.2 216.3h4.2M226.8 216.3h4.2M0 220.5h8.4M33.6 220.5h4.2M75.6 220.5h4.2M96.6 220.5h4.2M117.6 220.5h4.2M138.6 220.5h12.6M226.8 220.5h4.2M33.6 224.7h4.2M88.2 224.7h4.2M130.2 224.7h8.4M37.8 228.9h4.2M79.8 228.9h4.2M92.4 228.9h4.2M117.6 228.9h8.4M235.2 228.9h4.2M29.4 233.1h4.2M37.8 233.1h4.2M117.6 233.1h4.2M239.4 233.1h4.2M0 237.3h4.2M29.4 237.3h4.2M84 237.3h4.2M96.6 237.3h4.2M117.6 237.3h4.2M126 237.3h4.2M8.4 241.5h4.2M33.6 241.5h4.2M92.4 241.5h8.4M126 241.5h8.4M222.6 241.5h4.2M0 245.7h8.4M126 245.7h8.4M222.6 245.7h4.2M37.8 249.9h4.2M126 249.9h4.2M222.6 249.9h4.2M37.8 254.1h4.2M84 254.1h4.2M222.6 254.1h4.2M33.6 258.3h8.4M84 258.3h4.2M222.6 258.3h4.2M4.2 262.5h4.2M42 262.5h4.2M88.2 262.5h8.4M222.6 262.5h4.2M8.4 266.7h4.2M113.4 266.7h16.8M189 266.7h4.2M222.6 266.7h4.2M0 270.9h4.2M210 270.9h12.6M8.4 275.1h4.2M42 275.1h4.2M235.2 275.1h12.6M4.2 279.3h4.2M218.4 279.3h4.2M231 279.3h8.4M4.2 283.5h4.2M33.6 283.5h8.4M218.4 283.5h4.2M0 287.7h4.2M163.8 287.7h4.2M180.6 287.7h4.2M189 287.7h4.2M218.4 287.7h4.2M4.2 291.9h4.2M37.8 291.9h4.2M113.4 291.9h4.2M210 291.9h4.2M0 296.1h8.4M218.4 296.1h4.2M226.8 296.1h4.2M8.4 300.3h4.2M42 300.3h4.2M109.2 300.3h12.6M222.6 300.3h4.2M231 300.3h4.2M42 304.5h4.2M205.8 304.5h12.6M222.6 304.5h8.4M235.2 304.5h4.2M247.8 304.5h4.2M189 308.7h4.2M201.6 308.7h12.6M222.6 308.7h12.6M247.8 308.7h4.2M42 312.9h4.2M121.8 312.9h4.2M180.6 312.9h4.2M189 312.9h4.2M205.8 312.9h8.4M222.6 312.9h12.6M12.6 317.1h4.2M176.4 317.1h4.2M222.6 317.1h4.2M243.6 317.1h8.4M96.6 321.3h4.2M117.6 321.3h4.2M151.2 321.3h8.4M163.8 321.3h4.2M172.2 321.3h8.4M226.8 321.3h4.2M247.8 321.3h4.2M96.6 325.5h8.4M109.2 325.5h4.2M147 325.5h4.2M42 329.7h4.2M92.4 329.7h4.2M100.8 329.7h4.2M151.2 329.7h4.2M117.6 333.9h4.2M100.8 338.1h4.2M117.6 338.1h8.4M134.4 338.1h4.2M147 338.1h8.4M4.2 342.3h4.2M42 342.3h4.2M105 342.3h8.4M117.6 342.3h8.4M147 342.3h4.2M4.2 346.5h4.2M42 346.5h4.2M0 350.7h4.2M42 350.7h4.2M142.8 350.7h4.2M155.4 350.7h12.6M4.2 354.9h4.2M42 354.9h4.2M109.2 354.9h4.2M134.4 354.9h16.8M8.4 359.1h4.2M37.8 359.1h8.4M92.4 359.1h4.2M109.2 359.1h4.2M134.4 359.1h12.6M151.2 359.1h8.4M8.4 363.3h4.2M37.8 363.3h8.4M113.4 363.3h4.2M121.8 363.3h4.2M134.4 363.3h4.2M155.4 363.3h8.4M42 367.5h4.2M113.4 367.5h4.2M121.8 367.5h4.2M155.4 367.5h4.2M4.2 371.7h4.2M113.4 371.7h4.2M159.6 371.7h4.2M8.4 375.9h4.2M42 375.9h4.2M117.6 375.9h4.2M163.8 375.9h4.2M8.4 380.1h4.2M8.4 384.3h4.2M37.8 384.3h4.2M50.4 384.3h4.2M172.2 384.3h8.4M117.6 388.5h4.2M184.8 392.7h4.2M109.2 396.9h4.2M117.6 396.9h4.2M180.6 396.9h8.4M0 401.1h4.2M42 401.1h4.2M117.6 401.1h4.2M189 401.1h4.2M205.8 401.1h4.2M117.6 405.3h4.2M193.2 405.3h4.2M214.2 405.3h8.4M231 405.3h4.2M243.6 405.3h4.2M8.4 409.5h4.2M193.2 409.5h4.2M214.2 409.5h4.2M235.2 409.5h12.6M12.6 413.7h4.2M42 413.7h4.2M197.4 413.7h12.6M218.4 413.7h4.2M239.4 413.7h8.4M12.6 417.9h4.2M113.4 417.9h4.2M222.6 417.9h4.2M243.6 417.9h4.2M12.6 422.1h4.2M37.8 422.1h8.4M113.4 422.1h4.2M201.6 422.1h4.2M214.2 422.1h8.4M231 422.1h8.4M113.4 426.3h8.4M197.4 426.3h4.2M205.8 426.3h8.4M226.8 426.3h4.2M12.6 430.5h4.2M113.4 430.5h8.4M193.2 430.5h8.4M222.6 430.5h4.2M231 430.5h12.6M247.8 430.5h4.2M16.8 434.7h4.2M197.4 434.7h4.2M218.4 434.7h4.2M226.8 434.7h4.2M46.2 438.9h4.2M226.8 438.9h8.4M243.6 438.9h8.4M46.2 443.1h4.2M113.4 443.1h8.4M189 443.1h4.2M197.4 443.1h4.2M210 443.1h4.2M218.4 443.1h4.2M226.8 443.1h4.2M247.8 443.1h4.2M12.6 447.3h4.2M46.2 447.3h4.2M197.4 447.3h4.2M218.4 447.3h4.2M226.8 447.3h4.2M235.2 447.3h4.2M12.6 451.5h4.2M109.2 451.5h12.6M197.4 451.5h4.2M231 451.5h4.2M243.6 451.5h4.2M109.2 455.7h4.2M226.8 455.7h8.4M243.6 455.7h4.2M113.4 459.9h4.2M184.8 459.9h4.2M193.2 459.9h4.2M231 459.9h8.4M247.8 459.9h4.2M42 464.1h4.2M113.4 464.1h8.4M189 464.1h4.2M201.6 464.1h4.2M210 464.1h8.4M247.8 464.1h4.2M12.6 468.3h4.2M117.6 468.3h4.2M205.8 468.3h4.2M226.8 468.3h4.2M235.2 468.3h12.6M42 472.5h4.2M201.6 472.5h4.2M222.6 472.5h4.2M159.6 476.7h4.2M197.4 476.7h4.2M247.8 476.7h4.2M159.6 480.9h12.6M176.4 480.9h8.4M193.2 480.9h4.2M247.8 480.9h4.2M4.2 485.1h4.2M172.2 485.1h4.2M184.8 485.1h4.2M193.2 485.1h4.2M121.8 489.3h4.2M180.6 489.3h8.4M197.4 489.3h12.6M214.2 489.3h12.6M12.6 493.5h8.4M42 493.5h4.2M121.8 493.5h4.2M180.6 493.5h4.2M42 497.7h4.2M184.8 497.7h4.2M197.4 497.7h8.4M210 497.7h4.2M50.4 501.9h4.2M109.2 501.9h4.2M117.6 501.9h4.2M180.6 501.9h4.2M189 501.9h4.2M197.4 501.9h8.4M54.6 506.1h4.2M113.4 506.1h4.2M197.4 506.1h4.2M54.6 510.3h4.2M201.6 510.3h4.2M210 510.3h4.2M16.8 514.5h4.2M180.6 514.5h4.2M197.4 514.5h4.2M12.6 518.7h4.2M46.2 518.7h4.2M113.4 518.7h4.2M159.6 518.7h8.4M193.2 518.7h16.8M214.2 518.7h4.2M46.2 522.9h4.2M109.2 522.9h12.6M163.8 522.9h4.2M189 522.9h4.2M197.4 522.9h4.2M205.8 522.9h4.2M16.8 527.1h4.2M113.4 527.1h12.6M142.8 527.1h4.2M193.2 527.1h4.2M205.8 527.1h4.2M176.4 531.3h8.4M197.4 531.3h8.4M0 535.5h8.4M50.4 535.5h4.2M121.8 535.5h4.2M130.2 535.5h4.2M142.8 535.5h4.2M163.8 535.5h4.2M172.2 535.5h4.2M184.8 535.5h8.4M201.6 535.5h4.2M58.8 539.7h4.2M96.6 539.7h8.4M126 539.7h4.2M159.6 539.7h8.4M0 543.9h4.2M8.4 543.9h4.2M46.2 543.9h4.2M100.8 543.9h4.2M113.4 543.9h4.2M159.6 543.9h4.2M176.4 543.9h4.2M189 543.9h4.2M222.6 543.9h4.2M42 548.1h8.4M155.4 548.1h4.2M180.6 548.1h4.2M201.6 548.1h8.4" stroke="#f89e5a" stroke-width="4.5" fill="none"/>
<path d="M151.2 2.1h8.4M96.6 6.3h4.2M155.4 6.3h4.2M37.8 10.5h4.2M54.6 10.5h4.2M155.4 10.5h4.2M205.8 10.5h4.2M231 10.5h4.2M33.6 14.7h4.2M168 14.7h8.4M184.8 14.7h4.2M193.2 14.7h12.6M214.2 14.7h8.4M226.8 14.7h8.4M8.4 18.9h4.2M33.6 18.9h4.2M176.4 18.9h4.2M184.8 18.9h4.2M201.6 18.9h4.2M222.6 18.9h12.6M29.4 23.1h4.2M176.4 23.1h4.2M184.8 23.1h4.2M235.2 23.1h4.2M247.8 23.1h4.2M0 27.3h4.2M184.8 27.3h8.4M235.2 27.3h4.2M243.6 27.3h4.2M163.8 31.5h4.2M0 35.7h8.4M21 35.7h4.2M33.6 35.7h4.2M163.8 35.7h4.2M184.8 35.7h4.2M193.2 35.7h16.8M21 39.9h4.2M33.6 39.9h4.2M168 39.9h8.4M180.6 39.9h8.4M201.6 39.9h4.2M4.2 44.1h4.2M29.4 44.1h4.2M168 44.1h4.2M176.4 44.1h4.2M184.8 44.1h4.2M197.4 44.1h4.2M214.2 44.1h4.2M21 48.3h4.2M37.8 48.3h4.2M172.2 48.3h4.2M214.2 48.3h4.2M8.4 52.5h4.2M168 52.5h4.2M180.6 52.5h4.2M201.6 52.5h8.4M218.4 52.5h4.2M247.8 52.5h4.2M21 56.7h4.2M168 56.7h4.2M176.4 56.7h8.4M210 56.7h4.2M0 60.9h4.2M25.2 60.9h4.2M205.8 60.9h8.4M4.2 65.1h4.2M12.6 65.1h4.2M21 65.1h4.2M29.4 65.1h4.2M180.6 65.1h4.2M193.2 65.1h4.2M205.8 65.1h4.2M218.4 65.1h4.2M0 69.3h4.2M33.6 69.3h4.2M159.6 69.3h8.4M180.6 69.3h16.8M0 73.5h4.2M180.6 73.5h4.2M201.6 73.5h4.2M214.2 73.5h4.2M231 73.5h4.2M29.4 77.7h8.4M193.2 77.7h4.2M201.6 77.7h4.2M214.2 77.7h4.2M226.8 77.7h8.4M0 81.9h4.2M201.6 81.9h4.2M218.4 81.9h4.2M226.8 81.9h8.4M0 86.1h4.2M180.6 86.1h4.2M189 86.1h4.2M205.8 86.1h12.6M226.8 86.1h8.4M0 90.3h4.2M33.6 90.3h8.4M168 90.3h4.2M176.4 90.3h4.2M184.8 90.3h4.2M210 90.3h4.2M222.6 90.3h4.2M4.2 94.5h4.2M159.6 94.5h4.2M180.6 94.5h4.2M189 94.5h4.2M214.2 94.5h8.4M37.8 98.7h4.2M159.6 98.7h4.2M176.4 98.7h4.2M201.6 98.7h4.2M214.2 98.7h8.4M226.8 98.7h4.2M235.2 98.7h4.2M29.4 102.9h4.2M163.8 102.9h12.6M180.6 102.9h4.2M201.6 102.9h4.2M214.2 102.9h12.6M231 102.9h8.4M33.6 107.1h4.2M159.6 107.1h12.6M180.6 107.1h4.2M201.6 107.1h4.2M218.4 107.1h4.2M226.8 107.1h4.2M235.2 107.1h8.4M0 111.3h4.2M33.6 111.3h4.2M159.6 111.3h4.2M180.6 111.3h4.2M189 111.3h4.2M210 111.3h8.4M222.6 111.3h4.2M37.8 115.5h4.2M176.4 115.5h12.6M25.2 119.7h4.2M168 119.7h21M193.2 119.7h4.2M222.6 119.7h4.2M163.8 123.9h4.2M176.4 123.9h12.6M205.8 123.9h4.2M214.2 123.9h4.2M222.6 123.9h4.2M0 128.1h4.2M21 128.1h12.6M163.8 128.1h4.2M189 128.1h12.6M210 128.1h8.4M25.2 132.3h4.2M210 132.3h4.2M218.4 132.3h8.4M235.2 132.3h4.2M29.4 136.5h4.2M210 136.5h12.6M29.4 140.7h4.2M180.6 140.7h4.2M197.4 140.7h4.2M210 140.7h4.2M0 144.9h4.2M193.2 144.9h4.2M210 144.9h4.2M0 149.1h4.2M176.4 149.1h4.2M193.2 149.1h8.4M214.2 149.1h4.2M222.6 149.1h4.2M4.2 153.3h4.2M163.8 153.3h4.2M226.8 153.3h4.2M247.8 153.3h4.2M4.2 157.5h4.2M197.4 157.5h4.2M210 157.5h4.2M218.4 157.5h12.6M239.4 157.5h8.4M8.4 161.7h4.2M163.8 161.7h4.2M180.6 161.7h4.2M201.6 161.7h4.2M239.4 161.7h4.2M163.8 165.9h8.4M193.2 165.9h8.4M239.4 165.9h4.2M163.8 170.1h8.4M193.2 170.1h4.2M201.6 170.1h4.2M239.4 170.1h4.2M247.8 170.1h4.2M130.2 174.3h12.6M147 174.3h4.2M176.4 174.3h16.8M205.8 174.3h4.2M235.2 174.3h4.2M33.6 178.5h4.2M113.4 178.5h4.2M130.2 178.5h4.2M138.6 178.5h4.2M218.4 178.5h8.4M235.2 178.5h4.2M243.6 178.5h4.2M4.2 182.7h4.2M109.2 182.7h4.2M121.8 182.7h12.6M138.6 182.7h4.2M159.6 182.7h4.2M168 182.7h4.2M201.6 182.7h12.6M8.4 186.9h4.2M37.8 186.9h4.2M92.4 186.9h4.2M100.8 186.9h4.2M121.8 186.9h8.4M147 186.9h4.2M172.2 186.9h4.2M105 191.1h8.4M117.6 191.1h4.2M0 195.3h4.2M100.8 195.3h4.2M113.4 195.3h4.2M151.2 195.3h4.2M168 195.3h4.2M218.4 195.3h4.2M84 199.5h4.2M96.6 199.5h8.4M151.2 199.5h4.2M159.6 199.5h4.2M172.2 199.5h4.2M4.2 203.7h4.2M37.8 203.7h4.2M84 203.7h12.6M100.8 203.7h8.4M0 207.9h4.2M42 207.9h4.2M222.6 207.9h4.2M0 212.1h4.2M42 212.1h4.2M96.6 212.1h8.4M0 216.3h4.2M155.4 216.3h4.2M79.8 220.5h4.2M92.4 220.5h4.2M100.8 220.5h8.4M113.4 220.5h4.2M134.4 220.5h4.2M151.2 220.5h4.2M75.6 224.7h8.4M92.4 224.7h4.2M100.8 224.7h8.4M113.4 224.7h4.2M4.2 228.9h8.4M29.4 228.9h8.4M75.6 228.9h4.2M96.6 228.9h4.2M0 233.1h4.2M79.8 233.1h4.2M113.4 233.1h4.2M121.8 233.1h16.8M151.2 233.1h4.2M222.6 233.1h4.2M4.2 237.3h4.2M33.6 237.3h8.4M92.4 237.3h4.2M130.2 237.3h4.2M147 237.3h8.4M222.6 237.3h4.2M4.2 241.5h4.2M37.8 241.5h4.2M79.8 241.5h4.2M113.4 241.5h12.6M134.4 241.5h4.2M92.4 245.7h8.4M117.6 245.7h4.2M134.4 245.7h4.2M4.2 249.9h4.2M130.2 249.9h4.2M4.2 254.1h4.2M88.2 254.1h4.2M4.2 258.3h4.2M88.2 258.3h4.2M4.2 266.7h4.2M33.6 266.7h8.4M109.2 266.7h4.2M142.8 266.7h4.2M172.2 266.7h4.2M180.6 266.7h4.2M218.4 266.7h4.2M37.8 270.9h8.4M4.2 275.1h4.2M37.8 275.1h4.2M33.6 279.3h4.2M239.4 279.3h4.2M4.2 287.7h4.2M33.6 287.7h8.4M0 291.9h4.2M8.4 291.9h4.2M193.2 291.9h4.2M231 291.9h4.2M33.6 296.1h4.2M113.4 296.1h4.2M214.2 296.1h4.2M210 300.3h4.2M218.4 300.3h4.2M218.4 304.5h4.2M243.6 304.5h4.2M12.6 308.7h4.2M42 308.7h4.2M117.6 308.7h4.2M197.4 308.7h4.2M218.4 308.7h4.2M235.2 308.7h8.4M12.6 312.9h4.2M37.8 312.9h4.2M113.4 312.9h4.2M214.2 312.9h8.4M243.6 312.9h4.2M37.8 317.1h4.2M180.6 317.1h4.2M189 317.1h4.2M210 317.1h12.6M226.8 317.1h12.6M12.6 321.3h4.2M37.8 321.3h4.2M100.8 321.3h12.6M121.8 321.3h4.2M184.8 321.3h4.2M231 321.3h16.8M8.4 325.5h4.2M42 325.5h4.2M105 325.5h4.2M117.6 325.5h8.4M163.8 325.5h4.2M172.2 325.5h4.2M247.8 325.5h4.2M113.4 329.7h8.4M155.4 329.7h4.2M168 329.7h4.2M8.4 333.9h4.2M42 333.9h4.2M105 333.9h12.6M147 333.9h8.4M8.4 338.1h4.2M42 338.1h4.2M109.2 338.1h8.4M12.6 342.3h4.2M151.2 342.3h8.4M8.4 346.5h4.2M109.2 346.5h16.8M147 346.5h12.6M168 346.5h4.2M109.2 350.7h4.2M121.8 350.7h4.2M147 350.7h8.4M168 350.7h4.2M8.4 354.9h4.2M113.4 354.9h8.4M155.4 354.9h4.2M12.6 359.1h4.2M113.4 359.1h8.4M12.6 363.3h4.2M117.6 363.3h4.2M8.4 367.5h4.2M117.6 367.5h4.2M159.6 367.5h4.2M8.4 371.7h4.2M21 371.7h4.2M117.6 371.7h4.2M155.4 371.7h4.2M163.8 371.7h4.2M0 375.9h4.2M25.2 375.9h4.2M37.8 380.1h4.2M168 380.1h12.6M180.6 384.3h4.2M184.8 388.5h4.2M189 392.7h4.2M12.6 396.9h4.2M37.8 396.9h8.4M189 396.9h8.4M193.2 401.1h4.2M210 401.1h4.2M226.8 401.1h4.2M12.6 405.3h4.2M205.8 405.3h8.4M226.8 405.3h4.2M239.4 405.3h4.2M12.6 409.5h4.2M37.8 409.5h12.6M218.4 409.5h4.2M46.2 413.7h4.2M214.2 413.7h4.2M226.8 413.7h12.6M42 417.9h4.2M105 417.9h4.2M205.8 417.9h4.2M218.4 417.9h4.2M226.8 417.9h8.4M109.2 422.1h4.2M205.8 422.1h8.4M226.8 422.1h4.2M12.6 426.3h4.2M42 426.3h4.2M201.6 426.3h4.2M214.2 426.3h4.2M222.6 426.3h4.2M16.8 430.5h8.4M37.8 430.5h8.4M205.8 430.5h4.2M214.2 430.5h8.4M226.8 430.5h4.2M42 434.7h4.2M210 434.7h4.2M222.6 434.7h4.2M235.2 434.7h16.8M16.8 438.9h4.2M42 438.9h4.2M214.2 438.9h4.2M222.6 438.9h4.2M235.2 438.9h8.4M201.6 443.1h8.4M222.6 443.1h4.2M235.2 443.1h8.4M117.6 447.3h4.2M205.8 447.3h4.2M214.2 447.3h4.2M222.6 447.3h4.2M231 447.3h4.2M239.4 447.3h8.4M201.6 451.5h4.2M218.4 451.5h8.4M235.2 451.5h4.2M113.4 455.7h8.4M180.6 455.7h4.2M239.4 455.7h4.2M42 459.9h4.2M109.2 459.9h4.2M197.4 459.9h4.2M205.8 459.9h8.4M239.4 459.9h4.2M16.8 464.1h4.2M197.4 464.1h4.2M205.8 464.1h4.2M231 464.1h4.2M239.4 464.1h8.4M42 468.3h4.2M201.6 468.3h4.2M210 468.3h8.4M231 468.3h4.2M12.6 472.5h4.2M218.4 472.5h4.2M235.2 472.5h12.6M12.6 476.7h8.4M180.6 476.7h4.2M201.6 476.7h4.2M218.4 476.7h4.2M239.4 476.7h8.4M12.6 480.9h4.2M46.2 480.9h4.2M197.4 480.9h4.2M214.2 480.9h8.4M235.2 480.9h8.4M16.8 485.1h4.2M180.6 485.1h4.2M197.4 485.1h4.2M210 485.1h8.4M231 485.1h4.2M243.6 485.1h4.2M210 489.3h4.2M231 489.3h4.2M247.8 489.3h4.2M37.8 493.5h4.2M201.6 493.5h4.2M210 493.5h12.6M218.4 497.7h4.2M12.6 501.9h4.2M42 501.9h8.4M210 501.9h16.8M16.8 506.1h4.2M218.4 506.1h4.2M226.8 506.1h4.2M50.4 510.3h4.2M42 514.5h4.2M205.8 514.5h4.2M214.2 514.5h8.4M16.8 518.7h4.2M210 518.7h4.2M222.6 518.7h4.2M16.8 522.9h4.2M210 522.9h12.6M8.4 527.1h8.4M42 527.1h4.2M210 527.1h4.2M8.4 531.3h4.2M42 531.3h4.2M109.2 531.3h4.2M218.4 531.3h8.4M8.4 535.5h4.2M46.2 535.5h4.2M105 535.5h8.4M159.6 535.5h4.2M180.6 535.5h4.2M214.2 535.5h4.2M4.2 539.7h4.2M105 539.7h12.6M176.4 539.7h4.2M189 539.7h4.2M197.4 539.7h8.4M218.4 539.7h4.2M4.2 543.9h4.2M50.4 543.9h4.2M201.6 543.9h12.6M231 543.9h4.2M239.4 543.9h4.2M193.2 548.1h8.4M235.2 548.1h8.4" stroke="#faa660" stroke-width="4.5" fill="none"/>
<path d="M37.8 2.1h4.2M163.8 2.1h4.2M205.8 2.1h12.6M222.6 2.1h4.2M0 6.3h4.2M168 6.3h4.2M184.8 6.3h4.2M210 6.3h4.2M33.6 10.5h4.2M159.6 10.5h4.2M168 10.5h4.2M189 10.5h4.2M197.4 10.5h8.4M210 10.5h8.4M222.6 10.5h4.2M239.4 10.5h4.2M247.8 10.5h4.2M159.6 14.7h4.2M176.4 14.7h4.2M210 14.7h4.2M222.6 14.7h4.2M243.6 14.7h8.4M0 18.9h4.2M12.6 18.9h4.2M180.6 18.9h4.2M197.4 18.9h4.2M210 18.9h4.2M235.2 18.9h4.2M243.6 18.9h8.4M0 23.1h4.2M12.6 23.1h4.2M25.2 23.1h4.2M180.6 23.1h4.2M197.4 23.1h4.2M205.8 23.1h4.2M239.4 23.1h8.4M8.4 27.3h4.2M29.4 27.3h8.4M193.2 27.3h4.2M226.8 27.3h4.2M239.4 27.3h4.2M247.8 27.3h4.2M4.2 31.5h8.4M180.6 31.5h4.2M189 31.5h4.2M214.2 31.5h8.4M226.8 31.5h4.2M235.2 31.5h12.6M8.4 35.7h4.2M168 35.7h4.2M210 35.7h8.4M8.4 39.9h12.6M25.2 39.9h4.2M214.2 39.9h4.2M243.6 39.9h8.4M16.8 44.1h8.4M218.4 44.1h4.2M247.8 44.1h4.2M12.6 48.3h4.2M25.2 48.3h8.4M180.6 48.3h4.2M197.4 48.3h4.2M210 48.3h4.2M235.2 48.3h4.2M243.6 48.3h8.4M4.2 52.5h4.2M16.8 52.5h8.4M193.2 52.5h4.2M210 52.5h8.4M222.6 52.5h8.4M235.2 52.5h8.4M4.2 56.7h8.4M25.2 56.7h4.2M193.2 56.7h4.2M226.8 56.7h21M4.2 60.9h4.2M12.6 60.9h4.2M29.4 60.9h4.2M176.4 60.9h8.4M201.6 60.9h4.2M222.6 60.9h12.6M239.4 60.9h4.2M247.8 60.9h4.2M8.4 65.1h4.2M16.8 65.1h4.2M25.2 65.1h4.2M197.4 65.1h4.2M239.4 65.1h4.2M247.8 65.1h4.2M4.2 69.3h4.2M29.4 69.3h4.2M197.4 69.3h4.2M231 69.3h4.2M243.6 69.3h8.4M25.2 73.5h4.2M184.8 73.5h16.8M218.4 73.5h8.4M180.6 77.7h4.2M189 77.7h4.2M218.4 77.7h4.2M243.6 77.7h4.2M33.6 81.9h8.4M180.6 81.9h4.2M189 81.9h8.4M214.2 81.9h4.2M247.8 81.9h4.2M29.4 86.1h8.4M197.4 86.1h8.4M218.4 86.1h4.2M4.2 90.3h4.2M193.2 90.3h4.2M201.6 90.3h4.2M214.2 90.3h4.2M231 90.3h8.4M21 94.5h4.2M29.4 94.5h8.4M193.2 94.5h4.2M235.2 94.5h8.4M0 98.7h4.2M29.4 98.7h4.2M193.2 98.7h4.2M222.6 98.7h4.2M231 98.7h4.2M25.2 102.9h4.2M159.6 102.9h4.2M193.2 102.9h4.2M226.8 102.9h4.2M0 107.1h4.2M25.2 107.1h4.2M176.4 107.1h4.2M243.6 107.1h4.2M4.2 111.3h4.2M25.2 111.3h8.4M176.4 111.3h4.2M193.2 111.3h4.2M205.8 111.3h4.2M226.8 111.3h4.2M235.2 111.3h12.6M29.4 115.5h4.2M193.2 115.5h4.2M205.8 115.5h12.6M222.6 115.5h4.2M239.4 115.5h4.2M247.8 115.5h4.2M0 119.7h4.2M16.8 119.7h4.2M189 119.7h4.2M205.8 119.7h4.2M214.2 119.7h8.4M226.8 119.7h4.2M247.8 119.7h4.2M21 123.9h4.2M33.6 123.9h4.2M168 123.9h4.2M189 123.9h4.2M197.4 123.9h8.4M210 123.9h4.2M247.8 123.9h4.2M226.8 128.1h8.4M243.6 128.1h4.2M21 132.3h4.2M29.4 132.3h4.2M239.4 132.3h12.6M21 136.5h4.2M222.6 136.5h4.2M0 140.7h4.2M21 140.7h4.2M29.4 149.1h4.2M205.8 149.1h8.4M226.8 149.1h4.2M243.6 149.1h4.2M8.4 153.3h4.2M193.2 153.3h4.2M210 153.3h8.4M231 153.3h4.2M239.4 153.3h8.4M8.4 157.5h4.2M193.2 157.5h4.2M214.2 157.5h4.2M12.6 161.7h4.2M193.2 161.7h8.4M214.2 161.7h4.2M226.8 161.7h4.2M243.6 161.7h4.2M201.6 165.9h4.2M231 165.9h8.4M243.6 165.9h4.2M8.4 170.1h4.2M197.4 170.1h4.2M235.2 170.1h4.2M243.6 170.1h4.2M8.4 174.3h4.2M126 174.3h4.2M142.8 174.3h4.2M159.6 174.3h4.2M172.2 174.3h4.2M193.2 174.3h12.6M243.6 174.3h4.2M8.4 178.5h4.2M117.6 178.5h12.6M134.4 178.5h4.2M142.8 178.5h8.4M159.6 178.5h4.2M189 178.5h4.2M201.6 178.5h4.2M33.6 182.7h8.4M117.6 182.7h4.2M172.2 182.7h4.2M193.2 182.7h4.2M33.6 186.9h4.2M151.2 186.9h4.2M168 186.9h4.2M214.2 186.9h4.2M4.2 191.1h4.2M29.4 191.1h4.2M96.6 191.1h4.2M151.2 191.1h4.2M168 191.1h8.4M214.2 191.1h4.2M29.4 195.3h4.2M88.2 195.3h4.2M96.6 195.3h4.2M105 195.3h4.2M172.2 195.3h4.2M4.2 199.5h4.2M29.4 199.5h4.2M92.4 199.5h4.2M33.6 203.7h4.2M96.6 203.7h4.2M159.6 203.7h12.6M4.2 207.9h4.2M33.6 207.9h8.4M88.2 207.9h4.2M100.8 207.9h4.2M168 207.9h4.2M4.2 212.1h4.2M33.6 212.1h8.4M163.8 212.1h4.2M4.2 216.3h4.2M96.6 216.3h4.2M105 216.3h4.2M8.4 220.5h4.2M109.2 220.5h4.2M168 220.5h4.2M8.4 224.7h4.2M29.4 224.7h4.2M96.6 224.7h4.2M109.2 224.7h4.2M147 224.7h4.2M163.8 224.7h4.2M222.6 224.7h4.2M16.8 228.9h4.2M25.2 228.9h4.2M100.8 228.9h16.8M126 228.9h4.2M138.6 228.9h4.2M151.2 228.9h4.2M4.2 233.1h4.2M16.8 233.1h4.2M25.2 233.1h4.2M96.6 233.1h4.2M105 233.1h8.4M142.8 233.1h8.4M155.4 233.1h4.2M8.4 237.3h4.2M109.2 237.3h8.4M121.8 237.3h4.2M134.4 237.3h4.2M142.8 237.3h4.2M155.4 237.3h4.2M16.8 241.5h4.2M29.4 241.5h4.2M100.8 241.5h4.2M109.2 241.5h4.2M142.8 241.5h4.2M16.8 245.7h4.2M33.6 245.7h4.2M113.4 245.7h4.2M121.8 245.7h4.2M138.6 245.7h4.2M147 245.7h4.2M218.4 245.7h4.2M92.4 249.9h8.4M121.8 249.9h4.2M134.4 249.9h4.2M218.4 249.9h4.2M126 254.1h8.4M25.2 258.3h8.4M96.6 258.3h4.2M134.4 258.3h8.4M29.4 262.5h4.2M96.6 262.5h4.2M109.2 262.5h8.4M130.2 262.5h16.8M25.2 266.7h4.2M105 266.7h4.2M147 266.7h4.2M159.6 266.7h12.6M193.2 266.7h4.2M201.6 266.7h8.4M8.4 270.9h4.2M33.6 275.1h4.2M8.4 279.3h4.2M29.4 279.3h4.2M8.4 283.5h4.2M8.4 287.7h4.2M33.6 291.9h4.2M37.8 296.1h4.2M37.8 300.3h4.2M12.6 304.5h4.2M37.8 304.5h4.2M33.6 308.7h4.2M214.2 308.7h4.2M33.6 312.9h4.2M193.2 312.9h12.6M235.2 312.9h4.2M16.8 317.1h4.2M184.8 317.1h4.2M193.2 317.1h4.2M205.8 317.1h4.2M239.4 317.1h4.2M113.4 321.3h4.2M180.6 321.3h4.2M189 321.3h4.2M214.2 321.3h12.6M33.6 325.5h8.4M113.4 325.5h4.2M155.4 325.5h8.4M168 325.5h4.2M180.6 325.5h8.4M231 325.5h4.2M8.4 329.7h4.2M33.6 329.7h8.4M109.2 329.7h4.2M159.6 329.7h8.4M180.6 329.7h4.2M247.8 329.7h4.2M12.6 333.9h4.2M33.6 333.9h8.4M163.8 333.9h8.4M247.8 333.9h4.2M4.2 338.1h4.2M37.8 338.1h4.2M155.4 338.1h4.2M163.8 338.1h4.2M8.4 342.3h4.2M37.8 342.3h4.2M163.8 342.3h8.4M37.8 346.5h4.2M163.8 346.5h4.2M172.2 346.5h4.2M8.4 350.7h4.2M29.4 350.7h4.2M37.8 350.7h4.2M113.4 350.7h8.4M172.2 350.7h8.4M33.6 354.9h8.4M159.6 354.9h4.2M172.2 354.9h4.2M16.8 359.1h4.2M33.6 359.1h4.2M172.2 359.1h8.4M16.8 363.3h4.2M33.6 363.3h4.2M163.8 363.3h4.2M172.2 363.3h4.2M21 367.5h4.2M37.8 367.5h4.2M163.8 367.5h4.2M12.6 371.7h4.2M42 371.7h4.2M172.2 371.7h4.2M16.8 375.9h4.2M37.8 375.9h4.2M168 375.9h4.2M176.4 375.9h4.2M12.6 380.1h4.2M33.6 380.1h4.2M180.6 380.1h4.2M12.6 388.5h4.2M37.8 388.5h4.2M189 388.5h4.2M231 388.5h4.2M12.6 392.7h4.2M37.8 392.7h4.2M205.8 392.7h4.2M226.8 392.7h8.4M247.8 392.7h4.2M201.6 396.9h8.4M226.8 396.9h8.4M243.6 396.9h8.4M12.6 401.1h4.2M33.6 401.1h4.2M197.4 401.1h8.4M214.2 401.1h4.2M235.2 401.1h16.8M16.8 405.3h4.2M37.8 405.3h4.2M197.4 405.3h8.4M222.6 405.3h4.2M235.2 405.3h4.2M247.8 405.3h4.2M197.4 409.5h16.8M222.6 409.5h12.6M16.8 413.7h4.2M37.8 413.7h4.2M210 413.7h4.2M222.6 413.7h4.2M16.8 417.9h4.2M37.8 417.9h4.2M214.2 417.9h4.2M235.2 417.9h8.4M16.8 426.3h4.2M33.6 426.3h4.2M201.6 430.5h4.2M21 434.7h4.2M33.6 434.7h8.4M201.6 434.7h8.4M201.6 438.9h4.2M210 438.9h4.2M218.4 438.9h4.2M16.8 443.1h4.2M37.8 443.1h8.4M214.2 443.1h4.2M16.8 447.3h8.4M201.6 447.3h4.2M16.8 451.5h4.2M210 451.5h8.4M226.8 451.5h4.2M239.4 451.5h4.2M16.8 455.7h4.2M197.4 455.7h12.6M214.2 455.7h12.6M16.8 459.9h4.2M117.6 459.9h4.2M201.6 459.9h4.2M214.2 459.9h8.4M226.8 459.9h4.2M243.6 459.9h4.2M37.8 464.1h4.2M218.4 464.1h12.6M37.8 468.3h4.2M222.6 468.3h4.2M205.8 472.5h12.6M226.8 472.5h8.4M42 476.7h4.2M205.8 476.7h4.2M214.2 476.7h4.2M222.6 476.7h4.2M235.2 476.7h4.2M33.6 480.9h4.2M42 480.9h4.2M205.8 480.9h8.4M222.6 480.9h4.2M243.6 480.9h4.2M12.6 485.1h4.2M37.8 485.1h4.2M201.6 485.1h8.4M222.6 485.1h4.2M235.2 485.1h8.4M247.8 485.1h4.2M16.8 489.3h8.4M226.8 489.3h4.2M235.2 489.3h8.4M226.8 493.5h8.4M37.8 497.7h4.2M214.2 497.7h4.2M222.6 497.7h4.2M247.8 497.7h4.2M33.6 501.9h4.2M226.8 501.9h8.4M247.8 501.9h4.2M37.8 506.1h12.6M214.2 506.1h4.2M222.6 506.1h4.2M42 510.3h8.4M42 518.7h4.2M218.4 518.7h4.2M21 522.9h4.2M37.8 522.9h4.2M222.6 522.9h4.2M235.2 522.9h8.4M21 527.1h4.2M37.8 527.1h4.2M214.2 527.1h16.8M235.2 527.1h4.2M16.8 531.3h4.2M113.4 531.3h8.4M205.8 531.3h12.6M226.8 531.3h8.4M42 535.5h4.2M117.6 535.5h4.2M176.4 535.5h4.2M205.8 535.5h4.2M218.4 535.5h12.6M0 539.7h4.2M8.4 539.7h4.2M46.2 539.7h8.4M180.6 539.7h4.2M193.2 539.7h4.2M210 539.7h4.2M222.6 539.7h8.4M12.6 543.9h4.2M105 543.9h4.2M193.2 543.9h8.4M218.4 543.9h4.2M226.8 543.9h4.2M235.2 543.9h4.2M243.6 543.9h4.2M16.8 548.1h4.2M243.6 548.1h8.4" stroke="#faae68" stroke-width="4.5" fill="none"/>
<path d="M33.6 2.1h4.2M159.6 2.1h4.2M168 2.1h8.4M184.8 2.1h8.4M226.8 2.1h8.4M33.6 6.3h4.2M159.6 6.3h8.4M172.2 6.3h8.4M201.6 6.3h8.4M226.8 6.3h8.4M0 10.5h8.4M29.4 10.5h4.2M163.8 10.5h4.2M172.2 10.5h16.8M193.2 10.5h4.2M226.8 10.5h4.2M235.2 10.5h4.2M243.6 10.5h4.2M0 14.7h21M29.4 14.7h4.2M180.6 14.7h4.2M189 14.7h4.2M235.2 14.7h8.4M205.8 18.9h4.2M218.4 18.9h4.2M4.2 23.1h8.4M201.6 23.1h4.2M218.4 23.1h8.4M4.2 27.3h4.2M180.6 27.3h4.2M197.4 27.3h4.2M210 27.3h16.8M33.6 31.5h4.2M184.8 31.5h4.2M193.2 31.5h8.4M205.8 31.5h4.2M231 31.5h4.2M247.8 31.5h4.2M12.6 35.7h8.4M25.2 35.7h4.2M180.6 35.7h4.2M189 35.7h4.2M218.4 35.7h4.2M243.6 35.7h8.4M29.4 39.9h4.2M210 39.9h4.2M226.8 39.9h4.2M12.6 44.1h4.2M25.2 44.1h4.2M180.6 44.1h4.2M222.6 44.1h4.2M8.4 48.3h4.2M218.4 48.3h12.6M12.6 52.5h4.2M197.4 52.5h4.2M231 52.5h4.2M243.6 52.5h4.2M12.6 56.7h4.2M197.4 56.7h8.4M247.8 56.7h4.2M8.4 60.9h4.2M16.8 60.9h4.2M235.2 60.9h4.2M243.6 60.9h4.2M201.6 65.1h4.2M222.6 65.1h16.8M8.4 69.3h4.2M218.4 69.3h4.2M239.4 69.3h4.2M4.2 73.5h4.2M29.4 73.5h4.2M226.8 73.5h4.2M235.2 73.5h12.6M4.2 77.7h4.2M21 77.7h4.2M184.8 77.7h4.2M197.4 77.7h4.2M235.2 77.7h8.4M247.8 77.7h4.2M4.2 81.9h4.2M29.4 81.9h4.2M184.8 81.9h4.2M197.4 81.9h4.2M4.2 86.1h4.2M21 86.1h4.2M243.6 86.1h8.4M8.4 90.3h4.2M21 90.3h12.6M197.4 90.3h4.2M205.8 90.3h4.2M243.6 90.3h8.4M0 94.5h4.2M8.4 94.5h4.2M25.2 94.5h4.2M197.4 94.5h8.4M226.8 94.5h4.2M247.8 94.5h4.2M4.2 98.7h8.4M25.2 98.7h4.2M197.4 98.7h4.2M239.4 98.7h4.2M0 102.9h4.2M197.4 102.9h4.2M239.4 102.9h4.2M247.8 102.9h4.2M4.2 107.1h4.2M193.2 107.1h8.4M247.8 107.1h4.2M201.6 111.3h4.2M4.2 115.5h4.2M21 115.5h8.4M33.6 115.5h4.2M197.4 115.5h4.2M218.4 115.5h4.2M226.8 115.5h8.4M21 119.7h4.2M33.6 119.7h4.2M197.4 119.7h8.4M210 119.7h4.2M231 119.7h4.2M243.6 119.7h4.2M0 123.9h4.2M16.8 123.9h4.2M25.2 123.9h8.4M193.2 123.9h4.2M231 123.9h4.2M243.6 123.9h4.2M235.2 128.1h8.4M247.8 128.1h4.2M0 132.3h4.2M16.8 132.3h4.2M226.8 132.3h8.4M0 136.5h4.2M25.2 136.5h4.2M235.2 136.5h4.2M25.2 140.7h4.2M226.8 140.7h8.4M247.8 140.7h4.2M25.2 144.9h8.4M197.4 144.9h8.4M226.8 144.9h8.4M243.6 144.9h8.4M4.2 149.1h4.2M247.8 149.1h4.2M29.4 153.3h4.2M29.4 157.5h4.2M247.8 157.5h4.2M25.2 161.7h4.2M247.8 161.7h4.2M8.4 165.9h8.4M247.8 165.9h4.2M29.4 170.1h4.2M163.8 174.3h4.2M239.4 174.3h4.2M163.8 178.5h4.2M193.2 178.5h8.4M8.4 182.7h8.4M163.8 182.7h4.2M176.4 182.7h4.2M189 182.7h4.2M197.4 182.7h4.2M25.2 186.9h8.4M96.6 186.9h4.2M105 186.9h4.2M155.4 186.9h4.2M163.8 186.9h4.2M189 186.9h4.2M205.8 186.9h8.4M12.6 191.1h4.2M21 191.1h4.2M100.8 191.1h4.2M155.4 191.1h4.2M201.6 191.1h4.2M16.8 195.3h12.6M92.4 195.3h4.2M155.4 195.3h12.6M214.2 195.3h4.2M25.2 199.5h4.2M88.2 199.5h4.2M155.4 199.5h4.2M163.8 199.5h4.2M218.4 199.5h4.2M8.4 203.7h4.2M29.4 203.7h4.2M172.2 203.7h4.2M92.4 207.9h4.2M163.8 207.9h4.2M29.4 212.1h4.2M92.4 212.1h4.2M159.6 212.1h4.2M222.6 212.1h4.2M29.4 216.3h4.2M168 216.3h4.2M222.6 216.3h4.2M21 220.5h12.6M163.8 220.5h4.2M172.2 220.5h4.2M222.6 220.5h4.2M12.6 224.7h4.2M21 224.7h8.4M138.6 224.7h8.4M151.2 224.7h4.2M168 224.7h8.4M21 228.9h4.2M134.4 228.9h4.2M147 228.9h4.2M168 228.9h4.2M189 228.9h4.2M222.6 228.9h4.2M8.4 233.1h4.2M21 233.1h4.2M138.6 233.1h4.2M159.6 233.1h16.8M189 233.1h8.4M12.6 237.3h4.2M100.8 237.3h8.4M138.6 237.3h4.2M218.4 237.3h4.2M12.6 241.5h4.2M105 241.5h4.2M138.6 241.5h4.2M147 241.5h12.6M218.4 241.5h4.2M8.4 245.7h8.4M21 245.7h4.2M29.4 245.7h4.2M100.8 245.7h12.6M142.8 245.7h4.2M155.4 245.7h4.2M176.4 245.7h4.2M8.4 249.9h4.2M16.8 249.9h8.4M33.6 249.9h4.2M142.8 249.9h8.4M155.4 249.9h4.2M16.8 254.1h8.4M29.4 254.1h8.4M92.4 254.1h8.4M109.2 254.1h4.2M117.6 254.1h4.2M189 254.1h4.2M197.4 254.1h4.2M8.4 258.3h4.2M21 258.3h4.2M92.4 258.3h4.2M105 258.3h12.6M130.2 258.3h4.2M142.8 258.3h4.2M176.4 258.3h4.2M184.8 258.3h8.4M218.4 258.3h4.2M8.4 262.5h4.2M21 262.5h8.4M33.6 262.5h4.2M100.8 262.5h8.4M117.6 262.5h4.2M176.4 262.5h8.4M218.4 262.5h4.2M21 266.7h4.2M29.4 266.7h4.2M100.8 266.7h4.2M151.2 266.7h8.4M184.8 266.7h4.2M197.4 266.7h4.2M214.2 266.7h4.2M33.6 270.9h4.2M21 275.1h4.2M21 279.3h4.2M25.2 283.5h8.4M29.4 287.7h4.2M29.4 291.9h4.2M8.4 296.1h4.2M16.8 296.1h12.6M12.6 300.3h4.2M33.6 300.3h4.2M33.6 304.5h4.2M29.4 308.7h4.2M37.8 308.7h4.2M16.8 312.9h4.2M29.4 312.9h4.2M201.6 317.1h4.2M16.8 321.3h4.2M33.6 321.3h4.2M193.2 321.3h4.2M201.6 321.3h4.2M210 321.3h4.2M12.6 325.5h12.6M29.4 325.5h4.2M176.4 325.5h4.2M189 325.5h8.4M226.8 325.5h4.2M235.2 325.5h12.6M12.6 329.7h12.6M172.2 329.7h8.4M184.8 329.7h8.4M21 333.9h4.2M159.6 333.9h4.2M172.2 333.9h12.6M16.8 338.1h4.2M25.2 338.1h12.6M159.6 338.1h4.2M168 338.1h8.4M25.2 342.3h12.6M159.6 342.3h4.2M172.2 342.3h4.2M29.4 346.5h4.2M159.6 346.5h4.2M12.6 350.7h4.2M25.2 350.7h4.2M33.6 350.7h4.2M180.6 350.7h4.2M12.6 354.9h4.2M163.8 354.9h8.4M176.4 354.9h8.4M21 359.1h4.2M29.4 359.1h4.2M159.6 359.1h12.6M21 363.3h8.4M168 363.3h4.2M12.6 367.5h8.4M25.2 367.5h4.2M168 367.5h12.6M16.8 371.7h4.2M25.2 371.7h8.4M37.8 371.7h4.2M168 371.7h4.2M176.4 371.7h4.2M12.6 375.9h4.2M21 375.9h4.2M29.4 375.9h4.2M172.2 375.9h4.2M180.6 375.9h4.2M184.8 380.1h4.2M12.6 384.3h4.2M184.8 384.3h8.4M222.6 384.3h4.2M33.6 388.5h4.2M193.2 388.5h4.2M201.6 388.5h4.2M247.8 388.5h4.2M16.8 392.7h4.2M33.6 392.7h4.2M197.4 392.7h4.2M210 392.7h4.2M218.4 392.7h8.4M243.6 392.7h4.2M33.6 396.9h4.2M210 396.9h8.4M222.6 396.9h4.2M16.8 401.1h4.2M37.8 401.1h4.2M218.4 401.1h8.4M231 401.1h4.2M33.6 405.3h4.2M42 405.3h4.2M16.8 409.5h4.2M33.6 409.5h4.2M210 417.9h4.2M16.8 422.1h8.4M29.4 422.1h4.2M21 426.3h8.4M37.8 426.3h4.2M29.4 430.5h8.4M210 430.5h4.2M214.2 434.7h4.2M37.8 438.9h4.2M21 443.1h4.2M33.6 443.1h4.2M42 447.3h4.2M210 447.3h4.2M33.6 451.5h4.2M42 451.5h4.2M205.8 451.5h4.2M37.8 455.7h8.4M210 455.7h4.2M21 459.9h4.2M33.6 459.9h8.4M222.6 459.9h4.2M21 464.1h4.2M33.6 464.1h4.2M16.8 468.3h4.2M33.6 468.3h4.2M16.8 472.5h4.2M210 476.7h4.2M226.8 476.7h8.4M16.8 480.9h4.2M201.6 480.9h4.2M231 480.9h4.2M33.6 485.1h4.2M42 485.1h4.2M226.8 485.1h4.2M33.6 489.3h8.4M222.6 493.5h4.2M235.2 493.5h4.2M243.6 493.5h4.2M16.8 497.7h8.4M29.4 497.7h8.4M231 497.7h4.2M239.4 497.7h4.2M37.8 501.9h4.2M243.6 501.9h4.2M33.6 506.1h4.2M50.4 506.1h4.2M21 510.3h4.2M33.6 510.3h8.4M222.6 510.3h4.2M231 510.3h4.2M21 514.5h4.2M37.8 514.5h4.2M226.8 514.5h4.2M235.2 514.5h4.2M37.8 518.7h4.2M235.2 518.7h8.4M33.6 522.9h4.2M226.8 522.9h4.2M247.8 522.9h4.2M231 527.1h4.2M243.6 527.1h4.2M12.6 531.3h4.2M247.8 531.3h4.2M12.6 535.5h4.2M113.4 535.5h4.2M210 535.5h4.2M231 535.5h4.2M12.6 539.7h4.2M42 539.7h4.2M205.8 539.7h4.2M214.2 539.7h4.2M231 539.7h4.2" stroke="#fcb66e" stroke-width="4.5" fill="none"/>
<path d="M176.4 2.1h8.4M193.2 2.1h12.6M218.4 2.1h4.2M235.2 2.1h4.2M243.6 2.1h4.2M21 6.3h4.2M29.4 6.3h4.2M180.6 6.3h4.2M193.2 6.3h4.2M214.2 6.3h12.6M235.2 6.3h12.6M16.8 10.5h8.4M218.4 10.5h4.2M21 14.7h8.4M4.2 18.9h4.2M16.8 18.9h12.6M214.2 18.9h4.2M239.4 18.9h4.2M21 23.1h4.2M210 23.1h8.4M25.2 27.3h4.2M201.6 27.3h8.4M21 31.5h4.2M201.6 31.5h4.2M210 31.5h4.2M222.6 31.5h4.2M29.4 35.7h4.2M222.6 35.7h12.6M239.4 35.7h4.2M218.4 39.9h8.4M235.2 39.9h4.2M226.8 44.1h8.4M239.4 44.1h8.4M16.8 48.3h4.2M231 48.3h4.2M239.4 48.3h4.2M16.8 56.7h4.2M21 60.9h4.2M197.4 60.9h4.2M12.6 69.3h4.2M21 69.3h8.4M222.6 69.3h8.4M235.2 69.3h4.2M8.4 73.5h4.2M247.8 73.5h4.2M8.4 77.7h8.4M25.2 77.7h4.2M25.2 81.9h4.2M235.2 81.9h8.4M25.2 86.1h4.2M239.4 86.1h4.2M16.8 90.3h4.2M239.4 90.3h4.2M12.6 94.5h8.4M16.8 98.7h8.4M243.6 98.7h8.4M4.2 102.9h4.2M8.4 107.1h4.2M8.4 111.3h4.2M197.4 111.3h4.2M231 111.3h4.2M16.8 115.5h4.2M201.6 115.5h4.2M235.2 115.5h4.2M4.2 119.7h4.2M12.6 119.7h4.2M29.4 119.7h4.2M235.2 119.7h4.2M4.2 123.9h4.2M12.6 123.9h4.2M235.2 123.9h8.4M16.8 128.1h4.2M16.8 136.5h4.2M226.8 136.5h8.4M247.8 136.5h4.2M4.2 140.7h4.2M16.8 140.7h4.2M235.2 140.7h4.2M4.2 144.9h8.4M16.8 144.9h8.4M239.4 144.9h4.2M16.8 149.1h12.6M231 149.1h4.2M239.4 149.1h4.2M12.6 153.3h4.2M21 153.3h8.4M12.6 157.5h4.2M25.2 157.5h4.2M21 161.7h4.2M29.4 161.7h4.2M231 161.7h8.4M25.2 165.9h8.4M12.6 170.1h4.2M25.2 170.1h4.2M12.6 174.3h4.2M21 174.3h12.6M168 174.3h4.2M12.6 178.5h4.2M25.2 178.5h4.2M168 178.5h12.6M29.4 182.7h4.2M12.6 186.9h8.4M159.6 186.9h4.2M176.4 186.9h8.4M193.2 186.9h12.6M16.8 191.1h4.2M25.2 191.1h4.2M92.4 191.1h4.2M159.6 191.1h8.4M189 191.1h4.2M205.8 191.1h8.4M4.2 195.3h4.2M176.4 195.3h4.2M12.6 199.5h12.6M176.4 199.5h4.2M176.4 203.7h4.2M218.4 203.7h4.2M8.4 207.9h4.2M25.2 207.9h8.4M96.6 207.9h4.2M172.2 207.9h4.2M218.4 207.9h4.2M168 212.1h8.4M189 212.1h4.2M8.4 216.3h4.2M25.2 216.3h4.2M159.6 216.3h8.4M16.8 220.5h4.2M155.4 220.5h8.4M189 220.5h4.2M205.8 220.5h4.2M218.4 220.5h4.2M155.4 224.7h4.2M193.2 224.7h4.2M142.8 228.9h4.2M155.4 228.9h8.4M172.2 228.9h8.4M184.8 228.9h4.2M193.2 228.9h4.2M12.6 233.1h4.2M100.8 233.1h4.2M176.4 233.1h12.6M16.8 237.3h12.6M159.6 237.3h12.6M176.4 237.3h4.2M189 237.3h12.6M21 241.5h8.4M168 241.5h12.6M193.2 241.5h8.4M151.2 245.7h4.2M172.2 245.7h4.2M214.2 245.7h4.2M12.6 249.9h4.2M100.8 249.9h21M138.6 249.9h4.2M151.2 249.9h4.2M172.2 249.9h8.4M214.2 249.9h4.2M8.4 254.1h4.2M25.2 254.1h4.2M100.8 254.1h8.4M113.4 254.1h4.2M121.8 254.1h4.2M134.4 254.1h12.6M176.4 254.1h8.4M193.2 254.1h4.2M201.6 254.1h8.4M121.8 258.3h8.4M147 258.3h4.2M180.6 258.3h4.2M193.2 258.3h4.2M201.6 258.3h8.4M121.8 262.5h8.4M147 262.5h4.2M172.2 262.5h4.2M184.8 262.5h12.6M210 266.7h4.2M25.2 270.9h8.4M25.2 275.1h8.4M12.6 279.3h4.2M25.2 279.3h4.2M12.6 283.5h4.2M12.6 287.7h4.2M21 287.7h8.4M12.6 291.9h4.2M21 291.9h8.4M12.6 296.1h4.2M29.4 296.1h4.2M16.8 300.3h8.4M16.8 304.5h8.4M29.4 304.5h4.2M16.8 308.7h4.2M25.2 308.7h4.2M21 312.9h8.4M21 317.1h4.2M33.6 317.1h4.2M197.4 317.1h4.2M21 321.3h4.2M197.4 321.3h4.2M205.8 321.3h4.2M25.2 325.5h4.2M201.6 325.5h25.2M25.2 329.7h8.4M243.6 329.7h4.2M16.8 333.9h4.2M29.4 333.9h4.2M155.4 333.9h4.2M184.8 333.9h4.2M12.6 338.1h4.2M176.4 338.1h8.4M218.4 338.1h4.2M247.8 338.1h4.2M21 342.3h4.2M176.4 342.3h4.2M214.2 342.3h4.2M247.8 342.3h4.2M12.6 346.5h4.2M25.2 346.5h4.2M33.6 346.5h4.2M176.4 346.5h8.4M247.8 346.5h4.2M184.8 350.7h4.2M16.8 354.9h16.8M184.8 354.9h4.2M25.2 359.1h4.2M29.4 363.3h4.2M176.4 363.3h4.2M29.4 367.5h8.4M33.6 371.7h4.2M180.6 371.7h4.2M231 371.7h8.4M33.6 375.9h4.2M231 375.9h4.2M21 380.1h12.6M201.6 380.1h4.2M218.4 380.1h4.2M16.8 384.3h4.2M25.2 384.3h12.6M201.6 384.3h4.2M218.4 384.3h4.2M226.8 384.3h4.2M235.2 384.3h4.2M16.8 388.5h4.2M205.8 388.5h4.2M226.8 388.5h4.2M193.2 392.7h4.2M201.6 392.7h4.2M235.2 392.7h4.2M16.8 396.9h8.4M197.4 396.9h4.2M218.4 396.9h4.2M235.2 396.9h8.4M21 401.1h4.2M29.4 401.1h4.2M21 405.3h4.2M21 409.5h4.2M29.4 409.5h4.2M21 413.7h4.2M33.6 413.7h4.2M25.2 422.1h4.2M33.6 422.1h4.2M25.2 430.5h4.2M25.2 434.7h4.2M21 438.9h4.2M33.6 438.9h4.2M25.2 443.1h4.2M25.2 447.3h12.6M21 451.5h8.4M37.8 451.5h4.2M21 455.7h4.2M29.4 455.7h8.4M21 468.3h4.2M29.4 468.3h4.2M21 472.5h4.2M33.6 472.5h8.4M21 476.7h4.2M33.6 476.7h8.4M21 480.9h4.2M37.8 480.9h4.2M29.4 485.1h4.2M243.6 489.3h4.2M21 493.5h4.2M33.6 493.5h4.2M239.4 493.5h4.2M247.8 493.5h4.2M226.8 497.7h4.2M235.2 497.7h4.2M243.6 497.7h4.2M16.8 501.9h8.4M29.4 501.9h4.2M235.2 501.9h8.4M21 506.1h4.2M29.4 506.1h4.2M231 506.1h8.4M243.6 506.1h8.4M218.4 510.3h4.2M33.6 514.5h4.2M222.6 514.5h4.2M239.4 514.5h4.2M21 518.7h4.2M33.6 518.7h4.2M226.8 518.7h8.4M243.6 518.7h4.2M25.2 522.9h4.2M231 522.9h4.2M243.6 522.9h4.2M33.6 527.1h4.2M247.8 527.1h4.2M21 531.3h4.2M33.6 531.3h8.4M239.4 531.3h4.2M16.8 535.5h8.4M33.6 535.5h4.2M235.2 535.5h4.2M16.8 539.7h4.2M235.2 539.7h12.6M16.8 543.9h4.2M37.8 543.9h8.4M247.8 543.9h4.2M21 548.1h4.2M29.4 548.1h4.2M37.8 548.1h4.2" stroke="#fcbe77" stroke-width="4.5" fill="none"/>
<path d="M0 2.1h8.4M16.8 2.1h8.4M29.4 2.1h4.2M239.4 2.1h4.2M247.8 2.1h4.2M189 6.3h4.2M197.4 6.3h4.2M247.8 6.3h4.2M12.6 10.5h4.2M25.2 10.5h4.2M16.8 23.1h4.2M12.6 27.3h4.2M21 27.3h4.2M12.6 31.5h4.2M25.2 31.5h8.4M231 39.9h4.2M239.4 39.9h4.2M235.2 44.1h4.2M16.8 69.3h4.2M12.6 73.5h12.6M16.8 77.7h4.2M8.4 81.9h16.8M243.6 81.9h4.2M8.4 86.1h12.6M235.2 86.1h4.2M243.6 94.5h4.2M12.6 98.7h4.2M8.4 102.9h8.4M21 102.9h4.2M243.6 102.9h4.2M16.8 107.1h8.4M12.6 111.3h12.6M8.4 115.5h8.4M8.4 119.7h4.2M239.4 119.7h4.2M8.4 123.9h4.2M12.6 128.1h4.2M4.2 132.3h4.2M239.4 136.5h8.4M239.4 140.7h8.4M235.2 144.9h4.2M8.4 149.1h8.4M235.2 149.1h4.2M16.8 153.3h4.2M235.2 153.3h4.2M16.8 157.5h8.4M231 157.5h8.4M16.8 161.7h4.2M16.8 165.9h8.4M21 170.1h4.2M16.8 178.5h4.2M29.4 178.5h4.2M180.6 178.5h4.2M21 182.7h4.2M8.4 191.1h4.2M176.4 191.1h12.6M193.2 191.1h8.4M8.4 195.3h4.2M180.6 195.3h4.2M189 195.3h4.2M201.6 195.3h12.6M8.4 199.5h4.2M180.6 199.5h4.2M189 199.5h4.2M214.2 199.5h4.2M21 203.7h8.4M180.6 203.7h4.2M189 203.7h4.2M176.4 207.9h4.2M189 207.9h8.4M8.4 212.1h4.2M21 212.1h8.4M193.2 212.1h4.2M21 216.3h4.2M172.2 216.3h8.4M189 216.3h8.4M12.6 220.5h4.2M176.4 220.5h4.2M193.2 220.5h12.6M16.8 224.7h4.2M159.6 224.7h4.2M176.4 224.7h4.2M189 224.7h4.2M201.6 224.7h4.2M218.4 224.7h4.2M12.6 228.9h4.2M163.8 228.9h4.2M197.4 228.9h4.2M197.4 233.1h8.4M172.2 237.3h4.2M184.8 237.3h4.2M159.6 241.5h8.4M180.6 241.5h4.2M189 241.5h4.2M201.6 241.5h4.2M214.2 241.5h4.2M25.2 245.7h4.2M159.6 245.7h12.6M180.6 245.7h4.2M193.2 245.7h12.6M210 245.7h4.2M29.4 249.9h4.2M159.6 249.9h4.2M180.6 249.9h4.2M189 249.9h25.2M12.6 254.1h4.2M147 254.1h4.2M168 254.1h8.4M184.8 254.1h4.2M210 254.1h12.6M12.6 258.3h8.4M100.8 258.3h4.2M117.6 258.3h4.2M168 258.3h8.4M197.4 258.3h4.2M210 258.3h4.2M12.6 262.5h8.4M163.8 262.5h8.4M197.4 262.5h21M21 270.9h4.2M12.6 275.1h4.2M16.8 279.3h4.2M21 283.5h4.2M16.8 291.9h4.2M25.2 300.3h8.4M25.2 304.5h4.2M21 308.7h4.2M25.2 317.1h8.4M25.2 321.3h8.4M197.4 325.5h4.2M193.2 329.7h4.2M201.6 329.7h4.2M214.2 329.7h29.4M201.6 333.9h4.2M222.6 333.9h4.2M239.4 333.9h8.4M21 338.1h4.2M184.8 338.1h4.2M193.2 338.1h4.2M201.6 338.1h12.6M16.8 342.3h4.2M180.6 342.3h12.6M210 342.3h4.2M239.4 342.3h8.4M16.8 346.5h4.2M184.8 346.5h4.2M193.2 346.5h4.2M214.2 346.5h4.2M239.4 346.5h4.2M16.8 350.7h8.4M189 350.7h4.2M205.8 350.7h8.4M189 354.9h4.2M210 354.9h8.4M180.6 359.1h12.6M247.8 359.1h4.2M180.6 363.3h4.2M218.4 363.3h4.2M247.8 363.3h4.2M247.8 367.5h4.2M201.6 371.7h8.4M214.2 371.7h4.2M243.6 371.7h4.2M189 375.9h4.2M201.6 375.9h4.2M210 375.9h8.4M222.6 375.9h8.4M247.8 375.9h4.2M16.8 380.1h4.2M189 380.1h12.6M205.8 380.1h12.6M222.6 380.1h4.2M231 380.1h4.2M21 384.3h4.2M193.2 384.3h8.4M205.8 384.3h4.2M214.2 384.3h4.2M231 384.3h4.2M243.6 384.3h8.4M21 388.5h8.4M197.4 388.5h4.2M214.2 388.5h12.6M235.2 388.5h12.6M21 392.7h8.4M214.2 392.7h4.2M239.4 392.7h4.2M29.4 396.9h4.2M25.2 405.3h8.4M29.4 413.7h4.2M21 417.9h16.8M29.4 434.7h4.2M29.4 443.1h4.2M37.8 447.3h4.2M29.4 451.5h4.2M25.2 455.7h4.2M25.2 459.9h8.4M25.2 464.1h8.4M25.2 468.3h4.2M29.4 472.5h4.2M29.4 476.7h4.2M29.4 480.9h4.2M226.8 480.9h4.2M21 485.1h8.4M25.2 493.5h4.2M25.2 497.7h4.2M25.2 501.9h4.2M239.4 506.1h4.2M226.8 510.3h4.2M235.2 510.3h16.8M231 514.5h4.2M243.6 514.5h8.4M25.2 518.7h4.2M247.8 518.7h4.2M29.4 522.9h4.2M25.2 527.1h4.2M239.4 527.1h4.2M25.2 531.3h4.2M235.2 531.3h4.2M29.4 535.5h4.2M37.8 535.5h4.2M21 539.7h4.2M29.4 539.7h12.6M247.8 539.7h4.2M21 543.9h4.2M29.4 543.9h8.4M25.2 548.1h4.2" stroke="#fdc780" stroke-width="4.5" fill="none"/>
<path d="M8.4 2.1h8.4M25.2 2.1h4.2M4.2 6.3h4.2M12.6 6.3h8.4M25.2 6.3h4.2M8.4 10.5h4.2M16.8 27.3h4.2M16.8 31.5h4.2M235.2 35.7h4.2M12.6 90.3h4.2M16.8 102.9h4.2M12.6 107.1h4.2M4.2 128.1h8.4M4.2 136.5h4.2M8.4 140.7h8.4M12.6 144.9h4.2M16.8 170.1h4.2M21 178.5h4.2M184.8 178.5h4.2M25.2 182.7h4.2M180.6 182.7h8.4M21 186.9h4.2M12.6 195.3h4.2M184.8 195.3h4.2M193.2 195.3h8.4M184.8 199.5h4.2M193.2 199.5h8.4M12.6 203.7h8.4M184.8 203.7h4.2M193.2 203.7h8.4M12.6 207.9h12.6M180.6 207.9h8.4M12.6 212.1h4.2M176.4 212.1h12.6M197.4 212.1h4.2M16.8 216.3h4.2M184.8 216.3h4.2M201.6 216.3h4.2M218.4 216.3h4.2M184.8 220.5h4.2M184.8 224.7h4.2M197.4 224.7h4.2M205.8 224.7h4.2M214.2 224.7h4.2M180.6 228.9h4.2M218.4 233.1h4.2M180.6 237.3h4.2M201.6 237.3h4.2M184.8 241.5h4.2M184.8 245.7h8.4M25.2 249.9h4.2M163.8 249.9h8.4M184.8 249.9h4.2M151.2 254.1h8.4M151.2 258.3h4.2M214.2 258.3h4.2M151.2 262.5h8.4M12.6 266.7h8.4M12.6 270.9h4.2M16.8 275.1h4.2M16.8 283.5h4.2M16.8 287.7h4.2M197.4 329.7h4.2M205.8 329.7h8.4M25.2 333.9h4.2M189 333.9h8.4M205.8 333.9h4.2M214.2 333.9h8.4M226.8 333.9h4.2M235.2 333.9h4.2M189 338.1h4.2M214.2 338.1h4.2M222.6 338.1h4.2M239.4 338.1h8.4M193.2 342.3h4.2M201.6 342.3h8.4M218.4 342.3h8.4M21 346.5h4.2M189 346.5h4.2M201.6 346.5h12.6M214.2 350.7h8.4M235.2 350.7h4.2M243.6 350.7h8.4M193.2 354.9h4.2M205.8 354.9h4.2M218.4 354.9h8.4M205.8 359.1h21M243.6 359.1h4.2M184.8 363.3h8.4M205.8 363.3h4.2M222.6 363.3h4.2M180.6 367.5h12.6M205.8 367.5h8.4M189 371.7h8.4M210 371.7h4.2M218.4 371.7h4.2M226.8 371.7h4.2M247.8 371.7h4.2M184.8 375.9h4.2M193.2 375.9h8.4M205.8 375.9h4.2M218.4 375.9h4.2M239.4 375.9h4.2M226.8 380.1h4.2M243.6 380.1h8.4M210 384.3h4.2M29.4 388.5h4.2M210 388.5h4.2M29.4 392.7h4.2M25.2 396.9h4.2M25.2 401.1h4.2M25.2 413.7h4.2M29.4 426.3h4.2M29.4 438.9h4.2M25.2 472.5h4.2M25.2 476.7h4.2M25.2 480.9h4.2M25.2 489.3h4.2M29.4 493.5h4.2M25.2 506.1h4.2M25.2 510.3h4.2M29.4 514.5h4.2M29.4 527.1h4.2M25.2 535.5h4.2M239.4 535.5h12.6M25.2 539.7h4.2M25.2 543.9h4.2M33.6 548.1h4.2" stroke="#fdcf8a" stroke-width="4.5" fill="none"/>
<path d="M8.4 6.3h4.2M8.4 132.3h8.4M8.4 136.5h8.4M16.8 174.3h4.2M16.8 182.7h4.2M184.8 186.9h4.2M201.6 199.5h12.6M201.6 203.7h16.8M197.4 207.9h21M16.8 212.1h4.2M201.6 212.1h21M12.6 216.3h4.2M180.6 216.3h4.2M197.4 216.3h4.2M205.8 216.3h12.6M180.6 220.5h4.2M210 220.5h8.4M180.6 224.7h4.2M210 224.7h4.2M201.6 228.9h21M205.8 233.1h12.6M205.8 237.3h12.6M205.8 241.5h8.4M205.8 245.7h4.2M159.6 254.1h8.4M155.4 258.3h12.6M159.6 262.5h4.2M16.8 270.9h4.2M197.4 333.9h4.2M210 333.9h4.2M231 333.9h4.2M197.4 338.1h4.2M226.8 338.1h12.6M197.4 342.3h4.2M226.8 342.3h12.6M197.4 346.5h4.2M218.4 346.5h21M243.6 346.5h4.2M193.2 350.7h12.6M222.6 350.7h12.6M239.4 350.7h4.2M197.4 354.9h8.4M226.8 354.9h25.2M193.2 359.1h12.6M226.8 359.1h16.8M193.2 363.3h12.6M210 363.3h8.4M226.8 363.3h21M193.2 367.5h12.6M214.2 367.5h33.6M184.8 371.7h4.2M197.4 371.7h4.2M222.6 371.7h4.2M239.4 371.7h4.2M235.2 375.9h4.2M243.6 375.9h4.2M235.2 380.1h8.4M239.4 384.3h4.2M25.2 409.5h4.2M25.2 438.9h4.2M29.4 489.3h4.2M29.4 510.3h4.2M25.2 514.5h4.2M29.4 518.7h4.2M29.4 531.3h4.2M243.6 531.3h4.2" stroke="#fed893" stroke-width="4.5" fill="none"/>
</g>
<g filter="url(#bendvi)">
<path d="M12.5 2.4v24" stroke="#fcd484" stroke-width="8" fill="none" opacity="0.85"/>
<path d="M7.6 2.4v24" stroke="#d4ec90" stroke-width="3.4" fill="none"/>
<path d="M4.8 2.4v24" stroke="#a6dc76" stroke-width="3.4" fill="none"/>
<path d="M10.2 27v123M14.7 150v147M19.3 298v87M24 401v147" stroke="#fbd88c" stroke-width="6" fill="none" opacity="0.8"/>
<path d="M8 60v88M12.4 236v60M17 300v84M21.8 500v46" stroke="#c0e080" stroke-width="1.8" fill="none" opacity="0.95"/>
<path d="M246.5 318v22M246.5 375v22" stroke="#bfe07c" stroke-width="4.5" fill="none"/>
<path d="M242.6 3v180" stroke="#fde49c" stroke-width="2" fill="none" opacity="0.8"/>
<path d="M4 3.8h240" stroke="#fde49c" stroke-width="2" fill="none" opacity="0.7"/>
</g>
</g>
</svg></div>
<div class="info"><div class="ln" style="top:0.5px">NDVI:</div>
<div class="ln" style="top:25.5px"><span style="letter-spacing:-0.07px">Дата: </span>24.05.2025</div>
<div class="ln" style="top:50.5px"><span style="letter-spacing:0.25px">мин. </span>NDVI:</div>
<div class="ln" style="top:74.5px"><span style="letter-spacing:0.02px">макс. </span>NDVI:</div>
<div class="ln" style="top:99.5px"><span style="letter-spacing:0.25px">отклонение </span>NDVI: %</div>
<div class="ln" style="top:124.5px"><span style="letter-spacing:0.15px">медиана </span>NDVI:</div></div>
</div>
<div class="card" id="c3">
<div class="img" style="left:126.1px"><svg width="251.2" height="550" viewBox="0 0 252 550" preserveAspectRatio="none">
<defs><clipPath id="cpsmi"><polygon points="3.2,2.4 243.4,2.4 243.4,184.6 239.6,186.2 230.2,193.2 222.1,195 222.1,242.3 217.7,242.3 217.7,263.3 234.1,264.9 243.9,266.1 243.7,318 248.4,318 248.4,340 243.7,340 243.7,375 248.4,375 248.4,491.6 252,491.6 252,540.3 226,540.3 226,541.7 160,541.7 160,544.4 47,544.4 47,547.5 21.1,547.5 21.1,401 20.2,385 16.3,385 16.3,297.5 11.7,297.5 11.7,150 7.2,150 7.2,26.5 3.2,26.5"/></clipPath><filter id="blsmi" x="-5%" y="-5%" width="110%" height="110%"><feGaussianBlur stdDeviation="1.6"/></filter><filter id="bxsmi" x="-5%" y="-5%" width="110%" height="110%"><feGaussianBlur stdDeviation="0.9"/></filter><filter id="besmi" x="-50%" y="-5%" width="200%" height="110%"><feGaussianBlur stdDeviation="0.7"/></filter><linearGradient id="bgsmi" x1="0" x2="1" y1="0" y2="0"><stop offset="0" stop-color="#060c0c"/><stop offset="0.016" stop-color="#0b1415"/><stop offset="0.05" stop-color="#1c2e30"/><stop offset="0.97" stop-color="#1e3236"/><stop offset="1" stop-color="#142225"/></linearGradient></defs>
<rect width="252" height="550" fill="url(#bgsmi)"/>
<rect width="252" height="2.5" fill="#050808"/>
<g clip-path="url(#cpsmi)">
<rect width="252" height="550" fill="#ff6200"/>
<g filter="url(#blsmi)">
<path d="M67.2 214.2h8.4M67.2 222.6h16.8M67.2 247.8h8.4M58.8 256.2h8.4M75.6 256.2h8.4M67.2 281.4h8.4M134.4 281.4h8.4M159.6 441h8.4" stroke="#ff4a00" stroke-width="8.700000000000001" fill="none"/>
<path d="M126 105h8.4M142.8 138.6h8.4M159.6 147h8.4M67.2 189h8.4M67.2 197.4h8.4M75.6 205.8h8.4M58.8 214.2h8.4M75.6 214.2h8.4M67.2 231h16.8M58.8 239.4h25.2M58.8 247.8h8.4M67.2 256.2h8.4M58.8 264.6h25.2M58.8 273h25.2M75.6 281.4h8.4M117.6 281.4h8.4M75.6 289.8h8.4M126 289.8h8.4M151.2 289.8h8.4M58.8 298.2h25.2M67.2 306.6h8.4M159.6 415.8h8.4M159.6 424.2h16.8M159.6 432.6h8.4M151.2 449.4h8.4" stroke="#ff5100" stroke-width="8.700000000000001" fill="none"/>
<path d="M117.6 63h8.4M142.8 71.4h16.8M126 79.8h8.4M159.6 79.8h8.4M142.8 96.6h8.4M134.4 105h16.8M159.6 105h8.4M126 113.4h25.2M109.2 121.8h8.4M126 121.8h25.2M67.2 130.2h8.4M75.6 138.6h8.4M126 138.6h8.4M159.6 138.6h8.4M75.6 147h8.4M134.4 147h16.8M67.2 155.4h8.4M151.2 155.4h8.4M168 163.8h8.4M58.8 172.2h8.4M75.6 172.2h8.4M58.8 180.6h16.8M58.8 197.4h8.4M75.6 197.4h8.4M67.2 205.8h8.4M84 205.8h8.4M50.4 222.6h16.8M50.4 231h8.4M75.6 247.8h8.4M50.4 264.6h8.4M100.8 273h8.4M117.6 273h8.4M134.4 273h8.4M159.6 273h8.4M58.8 281.4h8.4M92.4 281.4h8.4M109.2 281.4h8.4M126 281.4h8.4M142.8 281.4h16.8M50.4 289.8h25.2M142.8 289.8h8.4M159.6 289.8h16.8M84 298.2h8.4M126 298.2h16.8M159.6 298.2h16.8M58.8 306.6h8.4M142.8 306.6h8.4M67.2 315h8.4M67.2 340.2h8.4M67.2 373.8h8.4M58.8 382.2h8.4M0 407.4h8.4M151.2 407.4h16.8M142.8 415.8h16.8M142.8 424.2h16.8M75.6 432.6h8.4M151.2 441h8.4M168 441h8.4M142.8 449.4h8.4M159.6 449.4h8.4M67.2 466.2h8.4M67.2 474.6h8.4M67.2 483h8.4M67.2 508.2h8.4" stroke="#ff5700" stroke-width="8.700000000000001" fill="none"/>
<path d="M134.4 12.6h8.4M75.6 21h8.4M75.6 29.4h8.4M134.4 29.4h8.4M109.2 37.8h8.4M117.6 46.2h8.4M109.2 54.6h8.4M126 54.6h8.4M100.8 71.4h8.4M126 71.4h16.8M100.8 79.8h8.4M117.6 79.8h8.4M134.4 79.8h25.2M126 88.2h16.8M151.2 88.2h8.4M168 88.2h8.4M75.6 96.6h8.4M126 96.6h16.8M151.2 96.6h8.4M109.2 105h8.4M151.2 105h8.4M67.2 113.4h8.4M117.6 113.4h8.4M159.6 113.4h8.4M58.8 121.8h8.4M75.6 121.8h8.4M151.2 121.8h25.2M84 130.2h8.4M117.6 130.2h42M176.4 130.2h8.4M58.8 138.6h16.8M151.2 138.6h8.4M168 138.6h8.4M67.2 147h8.4M109.2 147h16.8M151.2 147h8.4M109.2 155.4h8.4M126 155.4h25.2M159.6 155.4h16.8M42 163.8h8.4M67.2 163.8h25.2M126 163.8h16.8M159.6 163.8h8.4M92.4 172.2h8.4M75.6 180.6h8.4M235.2 180.6h8.4M75.6 189h8.4M109.2 189h8.4M50.4 197.4h8.4M84 222.6h8.4M58.8 231h8.4M235.2 231h8.4M50.4 239.4h8.4M84 239.4h8.4M84 247.8h8.4M84 264.6h8.4M100.8 264.6h8.4M84 273h8.4M109.2 273h8.4M126 273h8.4M142.8 273h16.8M168 273h8.4M50.4 281.4h8.4M84 281.4h8.4M159.6 281.4h8.4M184.8 281.4h8.4M42 289.8h8.4M84 289.8h8.4M100.8 289.8h25.2M134.4 289.8h8.4M176.4 289.8h8.4M109.2 298.2h8.4M142.8 298.2h16.8M50.4 306.6h8.4M92.4 306.6h16.8M117.6 306.6h25.2M58.8 315h8.4M75.6 315h16.8M117.6 315h16.8M67.2 323.4h25.2M117.6 323.4h8.4M67.2 331.8h16.8M75.6 340.2h16.8M67.2 348.6h16.8M58.8 357h8.4M75.6 357h8.4M67.2 365.4h16.8M50.4 382.2h8.4M75.6 382.2h8.4M67.2 390.6h8.4M134.4 399h8.4M151.2 399h25.2M75.6 407.4h8.4M126 407.4h8.4M142.8 407.4h8.4M168 407.4h16.8M67.2 415.8h16.8M126 415.8h8.4M168 415.8h16.8M58.8 424.2h16.8M126 424.2h8.4M0 432.6h8.4M134.4 432.6h25.2M58.8 441h8.4M134.4 441h16.8M67.2 449.4h8.4M67.2 457.8h8.4M142.8 457.8h25.2M8.4 466.2h8.4M75.6 466.2h8.4M159.6 466.2h8.4M134.4 474.6h16.8M159.6 474.6h8.4M75.6 483h8.4M67.2 499.8h16.8M75.6 516.6h8.4" stroke="#ff5e00" stroke-width="8.700000000000001" fill="none"/>
<path d="M58.8 12.6h8.4M117.6 12.6h8.4M159.6 12.6h8.4M33.6 21h8.4M58.8 21h8.4M100.8 21h8.4M117.6 21h8.4M151.2 21h16.8M58.8 29.4h8.4M100.8 29.4h8.4M117.6 29.4h8.4M168 29.4h8.4M58.8 37.8h8.4M75.6 37.8h16.8M117.6 37.8h8.4M176.4 37.8h8.4M50.4 46.2h25.2M100.8 46.2h16.8M134.4 46.2h8.4M159.6 46.2h16.8M50.4 54.6h8.4M67.2 54.6h16.8M117.6 54.6h8.4M142.8 54.6h8.4M50.4 63h8.4M67.2 63h16.8M109.2 63h8.4M126 63h33.6M168 63h8.4M75.6 71.4h8.4M92.4 71.4h8.4M109.2 71.4h16.8M50.4 79.8h8.4M75.6 79.8h8.4M92.4 79.8h8.4M109.2 79.8h8.4M168 79.8h8.4M58.8 88.2h25.2M109.2 88.2h8.4M159.6 88.2h8.4M67.2 96.6h8.4M109.2 96.6h16.8M168 96.6h8.4M58.8 105h16.8M84 105h8.4M117.6 105h8.4M176.4 105h8.4M42 113.4h25.2M75.6 113.4h8.4M100.8 113.4h16.8M151.2 113.4h8.4M168 113.4h8.4M50.4 121.8h8.4M67.2 121.8h8.4M84 121.8h16.8M50.4 130.2h16.8M92.4 130.2h25.2M159.6 130.2h16.8M33.6 138.6h8.4M50.4 138.6h8.4M100.8 138.6h16.8M134.4 138.6h8.4M176.4 138.6h8.4M100.8 147h8.4M126 147h8.4M168 147h8.4M50.4 155.4h16.8M75.6 155.4h8.4M100.8 155.4h8.4M50.4 163.8h16.8M100.8 163.8h25.2M142.8 163.8h16.8M176.4 163.8h8.4M50.4 172.2h8.4M67.2 172.2h8.4M84 172.2h8.4M100.8 172.2h25.2M142.8 172.2h16.8M50.4 180.6h8.4M226.8 180.6h8.4M50.4 189h16.8M92.4 189h8.4M117.6 189h8.4M235.2 189h8.4M84 197.4h16.8M109.2 197.4h8.4M235.2 197.4h8.4M42 205.8h25.2M42 214.2h8.4M84 214.2h8.4M100.8 214.2h8.4M226.8 214.2h8.4M243.6 214.2h8.4M42 222.6h8.4M235.2 222.6h8.4M84 231h8.4M92.4 239.4h8.4M226.8 239.4h16.8M42 247.8h16.8M235.2 247.8h8.4M42 256.2h16.8M92.4 256.2h8.4M235.2 256.2h16.8M92.4 264.6h8.4M243.6 264.6h8.4M42 273h16.8M92.4 273h8.4M176.4 273h8.4M226.8 273h8.4M100.8 281.4h8.4M176.4 281.4h8.4M210 281.4h8.4M243.6 281.4h8.4M92.4 289.8h8.4M184.8 289.8h25.2M235.2 289.8h8.4M92.4 298.2h16.8M117.6 298.2h8.4M176.4 298.2h8.4M226.8 298.2h8.4M75.6 306.6h16.8M109.2 306.6h8.4M151.2 306.6h8.4M168 306.6h8.4M50.4 315h8.4M109.2 315h8.4M142.8 315h8.4M58.8 323.4h8.4M100.8 323.4h8.4M126 323.4h8.4M58.8 331.8h8.4M84 331.8h8.4M42 340.2h8.4M126 340.2h8.4M50.4 348.6h16.8M84 348.6h8.4M50.4 357h8.4M67.2 357h8.4M84 357h8.4M0 373.8h8.4M58.8 373.8h8.4M75.6 373.8h16.8M67.2 382.2h8.4M134.4 382.2h8.4M42 390.6h8.4M58.8 390.6h8.4M92.4 390.6h8.4M134.4 390.6h8.4M159.6 390.6h8.4M0 399h8.4M50.4 399h33.6M126 399h8.4M142.8 399h8.4M58.8 407.4h16.8M134.4 407.4h8.4M84 415.8h8.4M134.4 415.8h8.4M75.6 424.2h8.4M117.6 424.2h8.4M134.4 424.2h8.4M176.4 424.2h8.4M8.4 432.6h8.4M58.8 432.6h16.8M92.4 432.6h8.4M168 432.6h16.8M0 441h8.4M67.2 441h16.8M92.4 441h8.4M126 441h8.4M0 449.4h16.8M58.8 449.4h8.4M134.4 449.4h8.4M0 457.8h8.4M42 457.8h8.4M58.8 457.8h8.4M75.6 457.8h16.8M126 457.8h16.8M58.8 466.2h8.4M58.8 474.6h8.4M75.6 474.6h8.4M58.8 483h8.4M84 483h8.4M142.8 483h8.4M67.2 491.4h16.8M50.4 499.8h8.4M84 499.8h8.4M126 499.8h25.2M58.8 508.2h8.4M75.6 508.2h8.4M126 508.2h8.4M151.2 508.2h8.4M0 516.6h16.8M126 516.6h8.4M134.4 525h8.4M75.6 533.4h8.4" stroke="#ff6800" stroke-width="8.700000000000001" fill="none"/>
<path d="M58.8 4.2h8.4M100.8 4.2h8.4M33.6 12.6h25.2M67.2 12.6h8.4M84 12.6h8.4M100.8 12.6h16.8M142.8 12.6h8.4M50.4 21h8.4M67.2 21h8.4M109.2 21h8.4M142.8 21h8.4M168 21h16.8M67.2 29.4h8.4M84 29.4h16.8M109.2 29.4h8.4M126 29.4h8.4M142.8 29.4h25.2M184.8 29.4h16.8M25.2 37.8h8.4M67.2 37.8h8.4M100.8 37.8h8.4M126 37.8h25.2M159.6 37.8h8.4M75.6 46.2h8.4M126 46.2h8.4M142.8 46.2h16.8M176.4 46.2h8.4M33.6 54.6h16.8M58.8 54.6h8.4M84 54.6h8.4M100.8 54.6h8.4M134.4 54.6h8.4M151.2 54.6h25.2M218.4 54.6h8.4M235.2 54.6h8.4M58.8 63h8.4M84 63h8.4M100.8 63h8.4M159.6 63h8.4M184.8 63h8.4M33.6 71.4h16.8M58.8 71.4h16.8M159.6 71.4h25.2M193.2 71.4h8.4M42 79.8h8.4M58.8 79.8h16.8M193.2 79.8h8.4M42 88.2h16.8M84 88.2h8.4M100.8 88.2h8.4M117.6 88.2h8.4M142.8 88.2h8.4M176.4 88.2h8.4M235.2 88.2h8.4M42 96.6h8.4M58.8 96.6h8.4M92.4 96.6h16.8M159.6 96.6h8.4M176.4 96.6h8.4M50.4 105h8.4M75.6 105h8.4M100.8 105h8.4M168 105h8.4M176.4 113.4h16.8M210 113.4h8.4M42 121.8h8.4M100.8 121.8h8.4M117.6 121.8h8.4M176.4 121.8h16.8M218.4 121.8h16.8M33.6 130.2h16.8M75.6 130.2h8.4M201.6 130.2h8.4M243.6 130.2h8.4M42 138.6h8.4M84 138.6h16.8M117.6 138.6h8.4M184.8 138.6h8.4M243.6 138.6h8.4M0 147h8.4M50.4 147h16.8M84 147h16.8M176.4 147h25.2M226.8 147h16.8M84 155.4h16.8M117.6 155.4h8.4M176.4 155.4h16.8M218.4 155.4h33.6M33.6 163.8h8.4M92.4 163.8h8.4M193.2 163.8h8.4M42 172.2h8.4M126 172.2h8.4M184.8 172.2h8.4M218.4 172.2h33.6M84 180.6h8.4M109.2 180.6h16.8M0 189h8.4M42 189h8.4M84 189h8.4M100.8 189h8.4M226.8 189h8.4M243.6 189h8.4M42 197.4h8.4M100.8 197.4h8.4M226.8 197.4h8.4M243.6 197.4h8.4M33.6 205.8h8.4M92.4 205.8h25.2M226.8 205.8h25.2M0 214.2h8.4M33.6 214.2h8.4M50.4 214.2h8.4M92.4 214.2h8.4M235.2 214.2h8.4M92.4 222.6h16.8M226.8 222.6h8.4M243.6 222.6h8.4M33.6 231h16.8M92.4 231h8.4M226.8 231h8.4M243.6 231h8.4M0 239.4h8.4M42 239.4h8.4M100.8 239.4h8.4M243.6 239.4h8.4M33.6 247.8h8.4M92.4 247.8h8.4M226.8 247.8h8.4M243.6 247.8h8.4M33.6 256.2h8.4M84 256.2h8.4M226.8 256.2h8.4M33.6 264.6h16.8M226.8 264.6h16.8M184.8 273h42M235.2 273h8.4M42 281.4h8.4M168 281.4h8.4M193.2 281.4h16.8M218.4 281.4h8.4M235.2 281.4h8.4M0 289.8h8.4M0 298.2h8.4M42 298.2h16.8M193.2 298.2h8.4M210 298.2h8.4M235.2 298.2h8.4M42 306.6h8.4M159.6 306.6h8.4M176.4 306.6h25.2M218.4 306.6h8.4M235.2 306.6h8.4M0 315h8.4M100.8 315h8.4M134.4 315h8.4M151.2 315h33.6M0 323.4h8.4M42 323.4h16.8M109.2 323.4h8.4M134.4 323.4h8.4M151.2 323.4h8.4M0 331.8h8.4M42 331.8h16.8M92.4 331.8h16.8M126 331.8h8.4M0 340.2h8.4M58.8 340.2h8.4M92.4 340.2h8.4M134.4 340.2h8.4M0 348.6h8.4M42 348.6h8.4M92.4 348.6h25.2M126 348.6h8.4M0 357h8.4M50.4 365.4h16.8M84 365.4h8.4M126 365.4h16.8M50.4 373.8h8.4M117.6 373.8h16.8M33.6 382.2h16.8M142.8 382.2h8.4M75.6 390.6h16.8M100.8 390.6h8.4M142.8 390.6h16.8M168 390.6h16.8M8.4 399h8.4M92.4 399h8.4M176.4 399h8.4M8.4 407.4h8.4M42 407.4h8.4M84 407.4h33.6M0 415.8h16.8M42 415.8h25.2M117.6 415.8h8.4M184.8 415.8h8.4M0 424.2h16.8M92.4 424.2h8.4M235.2 424.2h16.8M50.4 432.6h8.4M84 432.6h8.4M109.2 432.6h25.2M235.2 432.6h8.4M50.4 441h8.4M84 441h8.4M117.6 441h8.4M176.4 441h16.8M235.2 441h8.4M75.6 449.4h16.8M117.6 449.4h16.8M168 449.4h8.4M235.2 449.4h8.4M50.4 457.8h8.4M168 457.8h16.8M0 466.2h8.4M50.4 466.2h8.4M84 466.2h8.4M100.8 466.2h42M151.2 466.2h8.4M168 466.2h16.8M0 474.6h8.4M50.4 474.6h8.4M84 474.6h8.4M100.8 474.6h8.4M126 474.6h8.4M151.2 474.6h8.4M168 474.6h8.4M8.4 483h8.4M42 483h8.4M126 483h8.4M151.2 483h33.6M0 491.4h8.4M58.8 491.4h8.4M84 491.4h16.8M117.6 491.4h8.4M159.6 491.4h16.8M8.4 499.8h8.4M100.8 499.8h8.4M117.6 499.8h8.4M151.2 499.8h25.2M0 508.2h16.8M42 508.2h8.4M134.4 508.2h8.4M159.6 508.2h16.8M50.4 516.6h8.4M67.2 516.6h8.4M84 516.6h8.4M134.4 516.6h50.4M58.8 525h8.4M159.6 525h16.8M67.2 533.4h8.4M75.6 550.2h8.4" stroke="#ff7300" stroke-width="8.700000000000001" fill="none"/>
<path d="M67.2 4.2h16.8M126 4.2h8.4M151.2 4.2h8.4M75.6 12.6h8.4M126 12.6h8.4M151.2 12.6h8.4M168 12.6h16.8M210 12.6h8.4M42 21h8.4M84 21h16.8M134.4 21h8.4M184.8 21h16.8M218.4 21h16.8M243.6 21h8.4M0 29.4h8.4M42 29.4h16.8M176.4 29.4h8.4M226.8 29.4h8.4M33.6 37.8h25.2M168 37.8h8.4M201.6 37.8h16.8M226.8 37.8h16.8M42 46.2h8.4M84 46.2h16.8M184.8 46.2h8.4M210 46.2h8.4M235.2 46.2h8.4M0 54.6h8.4M25.2 54.6h8.4M176.4 54.6h33.6M0 63h8.4M33.6 63h16.8M92.4 63h8.4M176.4 63h8.4M193.2 63h25.2M226.8 63h25.2M0 71.4h8.4M50.4 71.4h8.4M84 71.4h8.4M201.6 71.4h8.4M218.4 71.4h25.2M33.6 79.8h8.4M84 79.8h8.4M184.8 79.8h8.4M235.2 79.8h8.4M92.4 88.2h8.4M193.2 88.2h8.4M210 88.2h16.8M33.6 96.6h8.4M50.4 96.6h8.4M84 96.6h8.4M184.8 96.6h25.2M226.8 96.6h16.8M42 105h8.4M184.8 105h16.8M226.8 105h16.8M84 113.4h16.8M201.6 113.4h8.4M226.8 113.4h16.8M33.6 121.8h8.4M193.2 121.8h8.4M184.8 130.2h16.8M218.4 130.2h8.4M235.2 130.2h8.4M193.2 138.6h16.8M226.8 138.6h16.8M25.2 147h25.2M201.6 147h8.4M218.4 147h8.4M243.6 147h8.4M0 155.4h8.4M42 155.4h8.4M193.2 155.4h25.2M0 163.8h8.4M25.2 163.8h8.4M184.8 163.8h8.4M201.6 163.8h50.4M25.2 172.2h16.8M134.4 172.2h8.4M159.6 172.2h25.2M201.6 172.2h8.4M33.6 180.6h16.8M92.4 180.6h16.8M126 180.6h25.2M218.4 180.6h8.4M126 189h8.4M0 197.4h8.4M33.6 197.4h8.4M0 205.8h8.4M0 222.6h8.4M33.6 222.6h8.4M109.2 222.6h8.4M0 231h8.4M109.2 239.4h8.4M0 247.8h8.4M100.8 247.8h16.8M0 256.2h8.4M100.8 256.2h16.8M0 264.6h8.4M109.2 264.6h8.4M33.6 273h8.4M243.6 273h8.4M33.6 281.4h8.4M226.8 281.4h8.4M218.4 289.8h16.8M243.6 289.8h8.4M33.6 298.2h8.4M184.8 298.2h8.4M201.6 298.2h8.4M218.4 298.2h8.4M243.6 298.2h8.4M0 306.6h16.8M201.6 306.6h16.8M226.8 306.6h8.4M243.6 306.6h8.4M33.6 315h16.8M92.4 315h8.4M235.2 315h16.8M8.4 323.4h8.4M92.4 323.4h8.4M142.8 323.4h8.4M159.6 323.4h16.8M33.6 331.8h8.4M109.2 331.8h16.8M134.4 331.8h8.4M50.4 340.2h8.4M100.8 340.2h8.4M117.6 340.2h8.4M8.4 348.6h8.4M117.6 348.6h8.4M134.4 348.6h8.4M42 357h8.4M92.4 357h16.8M117.6 357h25.2M0 365.4h8.4M42 365.4h8.4M92.4 365.4h33.6M8.4 373.8h8.4M42 373.8h8.4M92.4 373.8h8.4M142.8 373.8h8.4M159.6 373.8h8.4M0 382.2h16.8M84 382.2h25.2M117.6 382.2h16.8M151.2 382.2h25.2M8.4 390.6h8.4M50.4 390.6h8.4M109.2 390.6h25.2M84 399h8.4M100.8 399h25.2M184.8 399h8.4M50.4 407.4h8.4M117.6 407.4h8.4M210 407.4h8.4M226.8 407.4h25.2M92.4 415.8h25.2M193.2 415.8h16.8M226.8 415.8h25.2M42 424.2h16.8M84 424.2h8.4M100.8 424.2h8.4M184.8 424.2h16.8M226.8 424.2h8.4M42 432.6h8.4M184.8 432.6h8.4M201.6 432.6h8.4M8.4 441h8.4M42 441h8.4M100.8 441h8.4M243.6 441h8.4M42 449.4h16.8M92.4 449.4h16.8M176.4 449.4h25.2M243.6 449.4h8.4M8.4 457.8h8.4M92.4 457.8h33.6M92.4 466.2h8.4M142.8 466.2h8.4M226.8 466.2h8.4M243.6 466.2h8.4M8.4 474.6h8.4M42 474.6h8.4M92.4 474.6h8.4M176.4 474.6h8.4M226.8 474.6h16.8M0 483h8.4M50.4 483h8.4M92.4 483h8.4M134.4 483h8.4M235.2 483h8.4M8.4 491.4h8.4M42 491.4h16.8M100.8 491.4h8.4M126 491.4h33.6M218.4 491.4h8.4M0 499.8h8.4M42 499.8h8.4M58.8 499.8h8.4M92.4 499.8h8.4M176.4 499.8h16.8M33.6 508.2h8.4M50.4 508.2h8.4M84 508.2h8.4M109.2 508.2h8.4M142.8 508.2h8.4M184.8 508.2h8.4M42 516.6h8.4M58.8 516.6h8.4M92.4 516.6h8.4M193.2 516.6h25.2M0 525h16.8M67.2 525h25.2M117.6 525h16.8M142.8 525h16.8M176.4 525h16.8M151.2 533.4h8.4M58.8 541.8h8.4M75.6 541.8h8.4M159.6 541.8h8.4M184.8 541.8h8.4M0 550.2h16.8M58.8 550.2h16.8M84 550.2h8.4M126 550.2h16.8M151.2 550.2h16.8" stroke="#ff7e00" stroke-width="8.700000000000001" fill="none"/>
<path d="M16.8 4.2h8.4M50.4 4.2h8.4M84 4.2h8.4M109.2 4.2h16.8M134.4 4.2h16.8M159.6 4.2h8.4M176.4 4.2h8.4M243.6 4.2h8.4M92.4 12.6h8.4M201.6 12.6h8.4M235.2 12.6h8.4M126 21h8.4M201.6 21h16.8M25.2 29.4h16.8M235.2 29.4h8.4M92.4 37.8h8.4M184.8 37.8h16.8M218.4 37.8h8.4M25.2 46.2h16.8M201.6 46.2h8.4M218.4 46.2h16.8M243.6 46.2h8.4M92.4 54.6h8.4M210 54.6h8.4M243.6 54.6h8.4M25.2 63h8.4M218.4 63h8.4M25.2 71.4h8.4M210 71.4h8.4M243.6 71.4h8.4M25.2 79.8h8.4M201.6 79.8h16.8M226.8 79.8h8.4M25.2 88.2h16.8M184.8 88.2h8.4M226.8 88.2h8.4M25.2 96.6h8.4M210 96.6h8.4M243.6 96.6h8.4M33.6 105h8.4M92.4 105h8.4M201.6 105h25.2M243.6 105h8.4M16.8 113.4h25.2M193.2 113.4h8.4M218.4 113.4h8.4M243.6 113.4h8.4M25.2 121.8h8.4M201.6 121.8h16.8M235.2 121.8h16.8M210 130.2h8.4M0 138.6h8.4M25.2 138.6h8.4M210 138.6h8.4M16.8 147h8.4M8.4 155.4h8.4M33.6 155.4h8.4M0 172.2h8.4M193.2 172.2h8.4M0 180.6h8.4M151.2 180.6h8.4M243.6 180.6h8.4M25.2 189h16.8M25.2 197.4h8.4M134.4 197.4h8.4M25.2 205.8h8.4M25.2 214.2h8.4M109.2 214.2h16.8M126 222.6h8.4M25.2 231h8.4M100.8 231h16.8M134.4 231h8.4M8.4 239.4h8.4M33.6 239.4h8.4M25.2 247.8h8.4M117.6 247.8h8.4M25.2 256.2h8.4M126 256.2h8.4M25.2 264.6h8.4M117.6 264.6h25.2M151.2 264.6h16.8M0 273h16.8M0 281.4h16.8M8.4 289.8h8.4M25.2 289.8h16.8M210 289.8h8.4M25.2 306.6h16.8M8.4 315h8.4M184.8 315h8.4M218.4 315h16.8M193.2 323.4h8.4M8.4 331.8h8.4M8.4 340.2h8.4M33.6 340.2h8.4M109.2 340.2h8.4M33.6 348.6h8.4M142.8 348.6h8.4M159.6 348.6h8.4M8.4 357h8.4M33.6 357h8.4M109.2 357h8.4M159.6 357h8.4M8.4 365.4h8.4M33.6 365.4h8.4M151.2 365.4h8.4M100.8 373.8h16.8M134.4 373.8h8.4M151.2 373.8h8.4M16.8 382.2h8.4M109.2 382.2h8.4M176.4 382.2h8.4M0 390.6h8.4M33.6 390.6h8.4M184.8 390.6h8.4M243.6 390.6h8.4M16.8 399h8.4M42 399h8.4M193.2 399h8.4M243.6 399h8.4M218.4 407.4h8.4M33.6 415.8h8.4M218.4 415.8h8.4M33.6 424.2h8.4M109.2 424.2h8.4M210 424.2h16.8M33.6 432.6h8.4M100.8 432.6h8.4M193.2 432.6h8.4M218.4 432.6h16.8M243.6 432.6h8.4M33.6 441h8.4M109.2 441h8.4M193.2 441h8.4M226.8 441h8.4M109.2 449.4h8.4M226.8 449.4h8.4M33.6 457.8h8.4M184.8 457.8h25.2M235.2 457.8h16.8M42 466.2h8.4M184.8 466.2h16.8M235.2 466.2h8.4M16.8 474.6h8.4M109.2 474.6h16.8M184.8 474.6h8.4M218.4 474.6h8.4M100.8 483h8.4M117.6 483h8.4M184.8 483h16.8M226.8 483h8.4M243.6 483h8.4M109.2 491.4h8.4M176.4 491.4h8.4M193.2 491.4h16.8M226.8 491.4h8.4M243.6 491.4h8.4M109.2 499.8h8.4M193.2 499.8h16.8M218.4 499.8h16.8M243.6 499.8h8.4M92.4 508.2h16.8M117.6 508.2h8.4M176.4 508.2h8.4M193.2 508.2h16.8M218.4 508.2h8.4M109.2 516.6h16.8M184.8 516.6h8.4M42 525h16.8M100.8 525h16.8M193.2 525h8.4M50.4 533.4h16.8M134.4 533.4h8.4M159.6 533.4h8.4M67.2 541.8h8.4M134.4 541.8h8.4M42 550.2h16.8M92.4 550.2h8.4M142.8 550.2h8.4M168 550.2h8.4M184.8 550.2h16.8M210 550.2h42" stroke="#ff8900" stroke-width="8.700000000000001" fill="none"/>
<path d="M25.2 4.2h25.2M92.4 4.2h8.4M168 4.2h8.4M184.8 4.2h16.8M218.4 4.2h8.4M235.2 4.2h8.4M16.8 12.6h16.8M184.8 12.6h16.8M218.4 12.6h16.8M243.6 12.6h8.4M16.8 21h16.8M16.8 29.4h8.4M210 29.4h16.8M243.6 29.4h8.4M0 37.8h8.4M16.8 37.8h8.4M151.2 37.8h8.4M243.6 37.8h8.4M0 46.2h8.4M16.8 46.2h8.4M193.2 46.2h8.4M16.8 54.6h8.4M226.8 54.6h8.4M8.4 63h16.8M16.8 71.4h8.4M184.8 71.4h8.4M0 79.8h8.4M16.8 79.8h8.4M176.4 79.8h8.4M218.4 79.8h8.4M243.6 79.8h8.4M0 88.2h16.8M201.6 88.2h8.4M0 96.6h25.2M218.4 96.6h8.4M0 113.4h16.8M16.8 121.8h8.4M0 130.2h33.6M226.8 130.2h8.4M218.4 138.6h8.4M210 147h8.4M25.2 155.4h8.4M8.4 163.8h8.4M210 172.2h8.4M25.2 180.6h8.4M159.6 180.6h8.4M184.8 180.6h8.4M201.6 180.6h16.8M8.4 189h8.4M134.4 189h8.4M151.2 189h8.4M8.4 197.4h16.8M117.6 197.4h16.8M218.4 197.4h8.4M8.4 205.8h8.4M117.6 205.8h33.6M8.4 214.2h8.4M126 214.2h8.4M8.4 222.6h8.4M117.6 222.6h8.4M134.4 222.6h8.4M126 231h8.4M142.8 231h8.4M8.4 247.8h8.4M126 247.8h8.4M142.8 247.8h8.4M8.4 256.2h8.4M8.4 264.6h8.4M142.8 264.6h8.4M218.4 264.6h8.4M25.2 281.4h8.4M8.4 298.2h8.4M193.2 315h25.2M33.6 323.4h8.4M176.4 323.4h8.4M218.4 323.4h8.4M25.2 331.8h8.4M151.2 331.8h8.4M168 331.8h8.4M25.2 340.2h8.4M151.2 340.2h8.4M151.2 348.6h8.4M25.2 357h8.4M151.2 357h8.4M142.8 365.4h8.4M159.6 365.4h16.8M33.6 373.8h8.4M168 373.8h8.4M193.2 382.2h8.4M16.8 390.6h8.4M201.6 399h8.4M235.2 399h8.4M16.8 407.4h8.4M33.6 407.4h8.4M184.8 407.4h25.2M16.8 415.8h8.4M210 415.8h8.4M16.8 424.2h16.8M201.6 424.2h8.4M16.8 432.6h8.4M210 432.6h8.4M16.8 441h8.4M201.6 441h8.4M33.6 449.4h8.4M201.6 449.4h16.8M16.8 457.8h8.4M218.4 457.8h16.8M16.8 466.2h8.4M33.6 466.2h8.4M210 466.2h16.8M33.6 474.6h8.4M201.6 474.6h8.4M243.6 474.6h8.4M16.8 483h8.4M33.6 483h8.4M109.2 483h8.4M201.6 483h25.2M25.2 491.4h16.8M184.8 491.4h8.4M235.2 491.4h8.4M16.8 499.8h8.4M33.6 499.8h8.4M210 499.8h8.4M235.2 499.8h8.4M16.8 508.2h8.4M210 508.2h8.4M226.8 508.2h8.4M16.8 516.6h8.4M33.6 516.6h8.4M100.8 516.6h8.4M218.4 516.6h33.6M16.8 525h8.4M92.4 525h8.4M201.6 525h16.8M226.8 525h8.4M84 533.4h16.8M126 533.4h8.4M142.8 533.4h8.4M168 533.4h8.4M193.2 533.4h8.4M0 541.8h16.8M42 541.8h8.4M92.4 541.8h16.8M126 541.8h8.4M142.8 541.8h16.8M176.4 541.8h8.4M100.8 550.2h25.2M176.4 550.2h8.4M201.6 550.2h8.4" stroke="#ff9600" stroke-width="8.700000000000001" fill="none"/>
<path d="M201.6 4.2h8.4M226.8 4.2h8.4M0 12.6h8.4M0 21h8.4M235.2 21h8.4M201.6 29.4h8.4M8.4 37.8h8.4M8.4 46.2h8.4M8.4 54.6h8.4M8.4 71.4h8.4M16.8 88.2h8.4M243.6 88.2h8.4M0 105h8.4M16.8 105h16.8M0 121.8h16.8M8.4 138.6h16.8M16.8 155.4h8.4M16.8 163.8h8.4M8.4 172.2h8.4M8.4 180.6h16.8M176.4 180.6h8.4M193.2 180.6h8.4M16.8 189h8.4M142.8 189h8.4M159.6 189h8.4M193.2 189h8.4M218.4 189h8.4M142.8 197.4h25.2M16.8 205.8h8.4M16.8 214.2h8.4M25.2 222.6h8.4M8.4 231h16.8M151.2 231h8.4M16.8 239.4h16.8M117.6 239.4h25.2M16.8 247.8h8.4M134.4 247.8h8.4M134.4 256.2h16.8M16.8 264.6h8.4M168 264.6h16.8M201.6 264.6h16.8M16.8 273h16.8M16.8 281.4h8.4M16.8 289.8h8.4M25.2 298.2h8.4M25.2 315h8.4M16.8 323.4h16.8M184.8 323.4h8.4M201.6 323.4h8.4M226.8 323.4h8.4M243.6 323.4h8.4M16.8 331.8h8.4M142.8 331.8h8.4M176.4 331.8h8.4M142.8 340.2h8.4M159.6 340.2h25.2M16.8 348.6h16.8M168 348.6h8.4M142.8 357h8.4M168 357h8.4M25.2 365.4h8.4M176.4 373.8h8.4M184.8 382.2h8.4M25.2 390.6h8.4M218.4 390.6h16.8M25.2 399h16.8M210 399h25.2M25.2 407.4h8.4M25.2 432.6h8.4M25.2 441h8.4M218.4 441h8.4M16.8 449.4h16.8M218.4 449.4h8.4M210 457.8h8.4M201.6 466.2h8.4M193.2 474.6h8.4M210 474.6h8.4M16.8 491.4h8.4M210 491.4h8.4M25.2 508.2h8.4M235.2 508.2h16.8M33.6 525h8.4M218.4 525h8.4M235.2 525h16.8M0 533.4h16.8M42 533.4h8.4M184.8 533.4h8.4M201.6 533.4h8.4M50.4 541.8h8.4M84 541.8h8.4M109.2 541.8h16.8M168 541.8h8.4M193.2 541.8h42M33.6 550.2h8.4" stroke="#ffa300" stroke-width="8.700000000000001" fill="none"/>
<path d="M0 4.2h8.4M210 4.2h8.4M8.4 12.6h8.4M8.4 21h8.4M8.4 29.4h8.4M8.4 79.8h8.4M8.4 105h8.4M8.4 147h8.4M16.8 172.2h8.4M168 180.6h8.4M210 189h8.4M151.2 205.8h8.4M218.4 205.8h8.4M142.8 214.2h25.2M218.4 214.2h8.4M16.8 222.6h8.4M151.2 222.6h8.4M218.4 222.6h8.4M117.6 231h8.4M218.4 231h8.4M142.8 239.4h8.4M159.6 239.4h8.4M218.4 239.4h8.4M151.2 247.8h8.4M16.8 256.2h8.4M159.6 256.2h8.4M210 256.2h16.8M184.8 264.6h16.8M16.8 298.2h8.4M16.8 306.6h8.4M16.8 315h8.4M210 323.4h8.4M235.2 323.4h8.4M243.6 331.8h8.4M16.8 340.2h8.4M176.4 357h8.4M16.8 365.4h8.4M176.4 365.4h8.4M25.2 373.8h8.4M184.8 373.8h8.4M243.6 373.8h8.4M201.6 382.2h8.4M218.4 382.2h8.4M235.2 382.2h16.8M193.2 390.6h25.2M235.2 390.6h8.4M25.2 415.8h8.4M210 441h8.4M25.2 457.8h8.4M25.2 466.2h8.4M25.2 483h8.4M16.8 533.4h8.4M33.6 533.4h8.4M100.8 533.4h25.2M176.4 533.4h8.4M210 533.4h25.2M33.6 541.8h8.4M235.2 541.8h16.8M16.8 550.2h8.4" stroke="#ffb100" stroke-width="8.700000000000001" fill="none"/>
<path d="M168 189h25.2M201.6 189h8.4M193.2 197.4h8.4M159.6 205.8h8.4M134.4 214.2h8.4M184.8 214.2h8.4M142.8 222.6h8.4M159.6 231h8.4M184.8 231h8.4M151.2 239.4h8.4M184.8 247.8h8.4M218.4 247.8h8.4M117.6 256.2h8.4M151.2 256.2h8.4M176.4 256.2h8.4M159.6 331.8h8.4M184.8 331.8h8.4M184.8 340.2h16.8M184.8 348.6h8.4M16.8 357h8.4M193.2 357h8.4M193.2 365.4h8.4M243.6 365.4h8.4M16.8 373.8h8.4M235.2 373.8h8.4M25.2 382.2h8.4M25.2 474.6h8.4M25.2 499.8h8.4M25.2 516.6h8.4M25.2 525h8.4M25.2 550.2h8.4" stroke="#ffc000" stroke-width="8.700000000000001" fill="none"/>
<path d="M168 197.4h25.2M168 205.8h25.2M176.4 214.2h8.4M159.6 222.6h16.8M184.8 222.6h8.4M184.8 239.4h8.4M159.6 247.8h25.2M193.2 247.8h8.4M210 247.8h8.4M168 256.2h8.4M184.8 256.2h16.8M193.2 331.8h8.4M210 331.8h33.6M201.6 340.2h16.8M243.6 340.2h8.4M176.4 348.6h8.4M226.8 348.6h16.8M226.8 357h25.2M184.8 365.4h8.4M226.8 365.4h16.8M193.2 373.8h25.2M226.8 373.8h8.4M210 382.2h8.4M226.8 382.2h8.4M235.2 533.4h16.8M25.2 541.8h8.4" stroke="#ffd100" stroke-width="8.700000000000001" fill="none"/>
<path d="M8.4 4.2h8.4M201.6 197.4h16.8M193.2 205.8h8.4M168 214.2h8.4M193.2 214.2h8.4M210 222.6h8.4M176.4 231h8.4M193.2 231h8.4M210 231h8.4M168 239.4h8.4M193.2 239.4h25.2M201.6 247.8h8.4M201.6 256.2h8.4M201.6 331.8h8.4M226.8 340.2h16.8M193.2 348.6h8.4M218.4 348.6h8.4M243.6 348.6h8.4M210 365.4h8.4M25.2 533.4h8.4M16.8 541.8h8.4" stroke="#ffe100" stroke-width="8.700000000000001" fill="none"/>
<path d="M201.6 205.8h16.8M201.6 214.2h16.8M176.4 222.6h8.4M193.2 222.6h16.8M168 231h8.4M201.6 231h8.4M176.4 239.4h8.4M218.4 340.2h8.4M201.6 348.6h16.8M184.8 357h8.4M201.6 357h25.2M201.6 365.4h8.4M218.4 365.4h8.4M218.4 373.8h8.4" stroke="#ffef00" stroke-width="8.700000000000001" fill="none"/>
</g>
<g filter="url(#besmi)">
</g><g filter="url(#bxsmi)">
<path d="M4.7 2.4v24M8.4 27v123M12.9 150v147M17.5 298v87M22.3 401v147" stroke="#0828f0" stroke-width="3" fill="none"/>
<path d="M10.7 3v24M14.2 27v123" stroke="#10c8ff" stroke-width="8" fill="none"/>
<path d="M16.7 150v147M21.3 298v87M26.1 401v147" stroke="#18d0ff" stroke-width="5" fill="none"/>
<path d="M19.5 27v123M22 150v147M26.5 298v87M31 401v100" stroke="#ffd800" stroke-width="5" fill="none" opacity="0.9"/>
<path d="M18 160v120M22.6 330v50M27 401v60" stroke="#ffe800" stroke-width="6" stroke-dasharray="12 5 20 9" fill="none"/>
<path d="M17 170v120M26.5 410v130" stroke="#50f0b0" stroke-width="4" stroke-dasharray="4 22 8 30" fill="none"/>
<path d="M8.4 27v123M12.9 150v147M17.5 298v87" stroke="#10a0ff" stroke-width="3" stroke-dasharray="9 14 4 20" fill="none"/>
<path d="M242 3v88" stroke="#0838f0" stroke-width="3" fill="none"/>
<path d="M241.5 91v92" stroke="#10c8ff" stroke-width="3.4" fill="none"/>
<path d="M239.5 3v180" stroke="#40d8e0" stroke-width="2.5" fill="none" opacity="0.55"/>
<path d="M243.4 183.6L239.6 185.2L230.2 192.2L222.1 194" stroke="#18d0ff" stroke-width="3" fill="none"/>
<rect x="212.5" y="206" width="8" height="14" fill="#10c0ff"/><rect x="213" y="220" width="7" height="8" fill="#70e8a0"/>
<path d="M209 200v58" stroke="#fff000" stroke-width="7" fill="none" opacity="0.75"/>
<rect x="243.5" y="320" width="5" height="20" fill="#0828f0"/><rect x="243.5" y="375" width="5" height="117" fill="#0828f0"/>
<rect x="243.5" y="440" width="5" height="30" fill="#1070ff"/>
<rect x="243.5" y="491.6" width="9" height="38" fill="#10d0ff"/><rect x="243.5" y="529" width="9" height="12" fill="#a8f040"/>
<path d="M240 272v20M240 326v12M240 362v10" stroke="#b0f060" stroke-width="6" fill="none"/>
<path d="M240 292v34M240 338v24M240 372v120" stroke="#ffe000" stroke-width="5" fill="none" opacity="0.6"/>
<path d="M21 546.3h26M47 543.2h113M160 540.5h66M226 539.1h26" stroke="#0828f0" stroke-width="2.6" fill="none"/>
<path d="M21 543.6h26M47 540.5h40M150 538h10M160 537.8h66" stroke="#18d0ff" stroke-width="3" fill="none"/>
<path d="M30 541h22M120 538.5h28M200 535h40" stroke="#ffe800" stroke-width="4" fill="none"/>
</g>
</g>
<rect width="252" height="2" fill="#7a0000"/>
</svg></div>
<div class="info"><div class="ln" style="top:0.5px">SMI:</div>
<div class="ln" style="top:25.5px"><span style="letter-spacing:-0.07px">Дата: </span>24.05.2025</div>
<div class="ln" style="top:50.5px"><span style="letter-spacing:0.25px">мин. </span>SMI:</div>
<div class="ln" style="top:74.5px"><span style="letter-spacing:0.02px">макс. </span>SMI:</div>
<div class="ln" style="top:99.5px"><span style="letter-spacing:0.25px">отклонение </span>SMI: %</div>
<div class="ln" style="top:124.5px"><span style="letter-spacing:0.15px">медиана </span>SMI:</div></div>
</div>
</body></html>
